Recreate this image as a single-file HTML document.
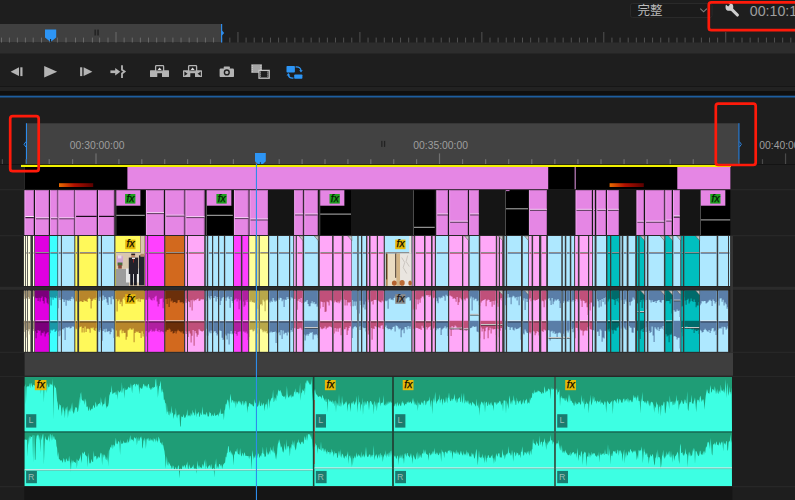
<!DOCTYPE html>
<html><head><meta charset="utf-8"><title>Timeline</title>
<style>
html,body{margin:0;padding:0;background:#1e1e1e;}
body{width:795px;height:500px;overflow:hidden;}
svg{display:block;font-family:"Liberation Sans","Noto Sans CJK TC","Noto Sans CJK SC",sans-serif;}
</style></head><body>
<svg width="795" height="500" viewBox="0 0 795 500" shape-rendering="auto">
<rect x="0.00" y="0.00" width="795.00" height="500.00" fill="#1e1e1e" />
<rect x="0.00" y="24.00" width="221.00" height="18.50" fill="#404040" />
<rect x="0.00" y="42.50" width="795.00" height="11.00" fill="#2d2d2d" />
<rect x="1.00" y="37.60" width="1.00" height="4.90" fill="#6a6a6a" />
<rect x="8.90" y="37.60" width="1.00" height="4.90" fill="#6a6a6a" />
<rect x="16.90" y="37.60" width="1.00" height="4.90" fill="#6a6a6a" />
<rect x="24.90" y="37.60" width="1.00" height="4.90" fill="#6a6a6a" />
<rect x="32.70" y="37.60" width="1.00" height="4.90" fill="#6a6a6a" />
<rect x="41.00" y="37.60" width="1.00" height="4.90" fill="#6a6a6a" />
<rect x="49.30" y="37.60" width="1.00" height="4.90" fill="#6a6a6a" />
<rect x="56.90" y="37.60" width="1.00" height="4.90" fill="#6a6a6a" />
<rect x="65.50" y="37.60" width="1.00" height="4.90" fill="#6a6a6a" />
<rect x="75.00" y="37.60" width="1.00" height="4.90" fill="#6a6a6a" />
<rect x="83.00" y="37.60" width="1.00" height="4.90" fill="#6a6a6a" />
<rect x="91.90" y="37.60" width="1.00" height="4.90" fill="#6a6a6a" />
<rect x="99.10" y="37.60" width="1.00" height="4.90" fill="#6a6a6a" />
<rect x="107.50" y="37.60" width="1.00" height="4.90" fill="#6a6a6a" />
<rect x="115.50" y="32.00" width="1.00" height="10.50" fill="#6a6a6a" />
<rect x="123.63" y="37.60" width="1.00" height="4.90" fill="#6a6a6a" />
<rect x="131.76" y="37.60" width="1.00" height="4.90" fill="#6a6a6a" />
<rect x="139.89" y="37.60" width="1.00" height="4.90" fill="#6a6a6a" />
<rect x="148.02" y="37.60" width="1.00" height="4.90" fill="#6a6a6a" />
<rect x="156.15" y="37.60" width="1.00" height="4.90" fill="#6a6a6a" />
<rect x="164.28" y="37.60" width="1.00" height="4.90" fill="#6a6a6a" />
<rect x="172.41" y="37.60" width="1.00" height="4.90" fill="#6a6a6a" />
<rect x="180.54" y="37.60" width="1.00" height="4.90" fill="#6a6a6a" />
<rect x="188.67" y="37.60" width="1.00" height="4.90" fill="#6a6a6a" />
<rect x="196.80" y="37.60" width="1.00" height="4.90" fill="#6a6a6a" />
<rect x="204.93" y="37.60" width="1.00" height="4.90" fill="#6a6a6a" />
<rect x="213.06" y="37.60" width="1.00" height="4.90" fill="#6a6a6a" />
<rect x="221.19" y="37.60" width="1.00" height="4.90" fill="#525252" />
<rect x="229.32" y="37.60" width="1.00" height="4.90" fill="#525252" />
<rect x="237.45" y="32.00" width="1.00" height="10.50" fill="#525252" />
<rect x="245.58" y="37.60" width="1.00" height="4.90" fill="#525252" />
<rect x="253.71" y="37.60" width="1.00" height="4.90" fill="#525252" />
<rect x="261.84" y="37.60" width="1.00" height="4.90" fill="#525252" />
<rect x="269.97" y="37.60" width="1.00" height="4.90" fill="#525252" />
<rect x="278.10" y="37.60" width="1.00" height="4.90" fill="#525252" />
<rect x="286.23" y="37.60" width="1.00" height="4.90" fill="#525252" />
<rect x="294.36" y="37.60" width="1.00" height="4.90" fill="#525252" />
<rect x="302.49" y="37.60" width="1.00" height="4.90" fill="#525252" />
<rect x="310.62" y="37.60" width="1.00" height="4.90" fill="#525252" />
<rect x="318.75" y="37.60" width="1.00" height="4.90" fill="#525252" />
<rect x="326.88" y="37.60" width="1.00" height="4.90" fill="#525252" />
<rect x="335.01" y="37.60" width="1.00" height="4.90" fill="#525252" />
<rect x="343.14" y="37.60" width="1.00" height="4.90" fill="#525252" />
<rect x="351.27" y="37.60" width="1.00" height="4.90" fill="#525252" />
<rect x="359.40" y="32.00" width="1.00" height="10.50" fill="#525252" />
<rect x="367.53" y="37.60" width="1.00" height="4.90" fill="#525252" />
<rect x="375.66" y="37.60" width="1.00" height="4.90" fill="#525252" />
<rect x="383.79" y="37.60" width="1.00" height="4.90" fill="#525252" />
<rect x="391.92" y="37.60" width="1.00" height="4.90" fill="#525252" />
<rect x="400.05" y="37.60" width="1.00" height="4.90" fill="#525252" />
<rect x="408.18" y="37.60" width="1.00" height="4.90" fill="#525252" />
<rect x="416.31" y="37.60" width="1.00" height="4.90" fill="#525252" />
<rect x="424.44" y="37.60" width="1.00" height="4.90" fill="#525252" />
<rect x="432.57" y="37.60" width="1.00" height="4.90" fill="#525252" />
<rect x="440.70" y="37.60" width="1.00" height="4.90" fill="#525252" />
<rect x="448.83" y="37.60" width="1.00" height="4.90" fill="#525252" />
<rect x="456.96" y="37.60" width="1.00" height="4.90" fill="#525252" />
<rect x="465.09" y="37.60" width="1.00" height="4.90" fill="#525252" />
<rect x="473.22" y="37.60" width="1.00" height="4.90" fill="#525252" />
<rect x="481.35" y="32.00" width="1.00" height="10.50" fill="#525252" />
<rect x="489.48" y="37.60" width="1.00" height="4.90" fill="#525252" />
<rect x="497.61" y="37.60" width="1.00" height="4.90" fill="#525252" />
<rect x="505.74" y="37.60" width="1.00" height="4.90" fill="#525252" />
<rect x="513.87" y="37.60" width="1.00" height="4.90" fill="#525252" />
<rect x="522.00" y="37.60" width="1.00" height="4.90" fill="#525252" />
<rect x="530.13" y="37.60" width="1.00" height="4.90" fill="#525252" />
<rect x="538.26" y="37.60" width="1.00" height="4.90" fill="#525252" />
<rect x="546.39" y="37.60" width="1.00" height="4.90" fill="#525252" />
<rect x="554.52" y="37.60" width="1.00" height="4.90" fill="#525252" />
<rect x="562.65" y="37.60" width="1.00" height="4.90" fill="#525252" />
<rect x="570.78" y="37.60" width="1.00" height="4.90" fill="#525252" />
<rect x="578.91" y="37.60" width="1.00" height="4.90" fill="#525252" />
<rect x="587.04" y="37.60" width="1.00" height="4.90" fill="#525252" />
<rect x="595.17" y="37.60" width="1.00" height="4.90" fill="#525252" />
<rect x="603.30" y="32.00" width="1.00" height="10.50" fill="#525252" />
<rect x="611.43" y="37.60" width="1.00" height="4.90" fill="#525252" />
<rect x="619.56" y="37.60" width="1.00" height="4.90" fill="#525252" />
<rect x="627.69" y="37.60" width="1.00" height="4.90" fill="#525252" />
<rect x="635.82" y="37.60" width="1.00" height="4.90" fill="#525252" />
<rect x="643.95" y="37.60" width="1.00" height="4.90" fill="#525252" />
<rect x="652.08" y="37.60" width="1.00" height="4.90" fill="#525252" />
<rect x="660.21" y="37.60" width="1.00" height="4.90" fill="#525252" />
<rect x="668.34" y="37.60" width="1.00" height="4.90" fill="#525252" />
<rect x="676.47" y="37.60" width="1.00" height="4.90" fill="#525252" />
<rect x="684.60" y="37.60" width="1.00" height="4.90" fill="#525252" />
<rect x="692.73" y="37.60" width="1.00" height="4.90" fill="#525252" />
<rect x="700.86" y="37.60" width="1.00" height="4.90" fill="#525252" />
<rect x="708.99" y="37.60" width="1.00" height="4.90" fill="#525252" />
<rect x="717.12" y="37.60" width="1.00" height="4.90" fill="#525252" />
<rect x="725.25" y="32.00" width="1.00" height="10.50" fill="#525252" />
<rect x="733.38" y="37.60" width="1.00" height="4.90" fill="#525252" />
<rect x="741.51" y="37.60" width="1.00" height="4.90" fill="#525252" />
<rect x="749.64" y="37.60" width="1.00" height="4.90" fill="#525252" />
<rect x="757.77" y="37.60" width="1.00" height="4.90" fill="#525252" />
<rect x="765.90" y="37.60" width="1.00" height="4.90" fill="#525252" />
<rect x="774.03" y="37.60" width="1.00" height="4.90" fill="#525252" />
<rect x="782.16" y="37.60" width="1.00" height="4.90" fill="#525252" />
<rect x="790.29" y="37.60" width="1.00" height="4.90" fill="#525252" />
<rect x="221.00" y="24.00" width="1.20" height="18.50" fill="#2d8ceb" />
<polygon points="222.0,30.5 224.2,33.0 222.0,35.5" fill="#2d8ceb" />
<polygon points="45.0,29.6 56.2,29.6 56.2,37.6 50.6,42.0 45.0,37.6" fill="#2d95f5" />
<rect x="50.10" y="39.00" width="1.00" height="3.00" fill="#1a1a1a" />
<rect x="94.40" y="29.60" width="1.70" height="5.90" fill="#242424" />
<rect x="97.20" y="29.60" width="1.70" height="5.90" fill="#242424" />
<rect x="630.50" y="3.50" width="81.50" height="14.00" fill="#1b1b1b" stroke="#2a2a2a" stroke-width="1" rx="2"/>
<text x="637.50" y="15.30" font-size="12.5" fill="#bcbcbc" >完整</text>
<polyline points="700.3,8.6 703.6,11.8 706.9,8.6" fill="none" stroke="#808080" stroke-width="1.1"/>
<line x1="731" y1="8.6" x2="737.4" y2="15" stroke="#cfcfcf" stroke-width="3.1" stroke-linecap="round"/>
<circle cx="729.4" cy="6.9" r="3.9" fill="#cfcfcf"/>
<rect x="723" y="3.9" width="5.6" height="2.7" fill="#1e1e1e" transform="rotate(42 728.6 5.9)"/>
<text x="749.80" y="15.60" font-size="14.2" fill="#9e9e9e" >00:10:10:15</text>
<polygon points="10.6,71.7 19.0,67.3 19.0,76.1" fill="#b4b4b4" />
<rect x="20.30" y="67.30" width="2.20" height="8.80" fill="#b4b4b4" />
<polygon points="44.2,66.0 57.2,71.8 44.2,77.5" fill="#b4b4b4" />
<rect x="80.10" y="67.30" width="2.20" height="8.80" fill="#b4b4b4" />
<polygon points="83.6,67.3 92.4,71.7 83.6,76.1" fill="#b4b4b4" />
<rect x="110.40" y="70.40" width="6.00" height="2.70" fill="#b4b4b4" />
<polygon points="115.2,67.9 120.3,71.7 115.2,75.6" fill="#b4b4b4" />
<path d="M122 65.3 L122 69.7 L124.6 71.6 L122 73.5 L122 77.9" fill="none" stroke="#b4b4b4" stroke-width="1.8" stroke-linejoin="miter"/>
<rect x="150.00" y="70.30" width="7.30" height="6.70" fill="#b4b4b4" rx="0.6"/>
<rect x="162.00" y="70.30" width="7.00" height="6.70" fill="#b4b4b4" rx="0.6"/>
<rect x="156.00" y="71.00" width="7.00" height="2.20" fill="#b4b4b4" />
<rect x="155.60" y="65.60" width="8.00" height="5.60" fill="#1e1e1e" stroke="#b4b4b4" stroke-width="1.3" rx="0.8"/>
<polygon points="159.6,67.6 161.6,69.9 157.6,69.9" fill="#e0e0e0" />
<rect x="183.00" y="70.30" width="7.30" height="6.70" fill="#b4b4b4" rx="0.6"/>
<rect x="195.00" y="70.30" width="7.00" height="6.70" fill="#b4b4b4" rx="0.6"/>
<rect x="189.00" y="71.00" width="7.00" height="2.20" fill="#b4b4b4" />
<rect x="188.60" y="65.60" width="8.00" height="5.60" fill="#1e1e1e" stroke="#b4b4b4" stroke-width="1.3" rx="0.8"/>
<polygon points="192.6,67.6 194.6,69.9 190.6,69.9" fill="#e0e0e0" />
<polygon points="184.4,71.4 187.6,73.7 184.4,76.0" fill="#1e1e1e" />
<polygon points="200.8,71.4 197.6,73.7 200.8,76.0" fill="#1e1e1e" />
<rect x="219.60" y="68.50" width="14.40" height="8.60" fill="#b4b4b4" rx="1.2"/>
<rect x="223.70" y="66.50" width="6.20" height="2.40" fill="#b4b4b4" rx="0.6"/>
<circle cx="226.8" cy="72.4" r="2.4" fill="none" stroke="#1e1e1e" stroke-width="1.4"/>
<rect x="251.30" y="64.30" width="10.60" height="8.60" fill="#a6a6a6" />
<rect x="251.80" y="65.20" width="1.00" height="1.00" fill="#d8d8d8" />
<rect x="260.40" y="65.20" width="1.00" height="1.00" fill="#d8d8d8" />
<rect x="251.80" y="67.20" width="1.00" height="1.00" fill="#d8d8d8" />
<rect x="260.40" y="67.20" width="1.00" height="1.00" fill="#d8d8d8" />
<rect x="251.80" y="69.20" width="1.00" height="1.00" fill="#d8d8d8" />
<rect x="260.40" y="69.20" width="1.00" height="1.00" fill="#d8d8d8" />
<rect x="251.80" y="71.20" width="1.00" height="1.00" fill="#d8d8d8" />
<rect x="260.40" y="71.20" width="1.00" height="1.00" fill="#d8d8d8" />
<rect x="259.00" y="70.40" width="10.20" height="7.80" fill="#1e1e1e" stroke="#c4c4c4" stroke-width="1.3"/>
<rect x="260.00" y="71.60" width="1.00" height="1.00" fill="#c4c4c4" />
<rect x="267.20" y="71.60" width="1.00" height="1.00" fill="#c4c4c4" />
<rect x="260.00" y="73.60" width="1.00" height="1.00" fill="#c4c4c4" />
<rect x="267.20" y="73.60" width="1.00" height="1.00" fill="#c4c4c4" />
<rect x="260.00" y="75.60" width="1.00" height="1.00" fill="#c4c4c4" />
<rect x="267.20" y="75.60" width="1.00" height="1.00" fill="#c4c4c4" />
<rect x="286.50" y="66.00" width="8.40" height="6.50" fill="#2d95f5" rx="0.8"/>
<rect x="294.20" y="74.40" width="8.20" height="4.40" fill="#2d95f5" rx="0.8"/>
<path d="M295.6 67 Q300.8 66.6 301 71" fill="none" stroke="#2d95f5" stroke-width="1.3"/>
<polygon points="299.2,70.2 302.8,70.2 301.0,72.6" fill="#2d95f5" />
<path d="M293.4 78 Q288.6 78.4 288.4 74.6" fill="none" stroke="#2d95f5" stroke-width="1.3"/>
<polygon points="286.6,75.4 290.2,75.4 288.4,73.0" fill="#2d95f5" />
<rect x="0.00" y="86.00" width="795.00" height="1.00" fill="#161616" />
<rect x="0.00" y="87.00" width="795.00" height="4.00" fill="#222222" />
<rect x="0.00" y="91.00" width="795.00" height="4.70" fill="#0f0f0f" />
<rect x="0.00" y="95.70" width="795.00" height="1.80" fill="#1d5ea0" />
<rect x="27.00" y="123.30" width="711.40" height="40.90" fill="#424242" />
<rect x="25.90" y="123.20" width="1.10" height="40.60" fill="#2d8ceb" />
<polyline points="26,141.6 24,144.3 26,147" fill="none" stroke="#2d8ceb" stroke-width="1"/>
<rect x="738.30" y="123.20" width="1.20" height="40.60" fill="#2d7fd6" />
<polyline points="739.4,141.6 741.4,144.3 739.4,147" fill="none" stroke="#2d7fd6" stroke-width="1"/>
<rect x="1.80" y="159.20" width="1.20" height="4.80" fill="#4a4a4a" />
<rect x="25.20" y="159.20" width="1.20" height="4.80" fill="#4a4a4a" />
<rect x="48.60" y="159.20" width="1.20" height="4.80" fill="#707070" />
<rect x="72.00" y="159.20" width="1.20" height="4.80" fill="#707070" />
<rect x="95.40" y="153.40" width="1.20" height="10.60" fill="#707070" />
<rect x="118.30" y="159.20" width="1.20" height="4.80" fill="#707070" />
<rect x="141.20" y="159.20" width="1.20" height="4.80" fill="#707070" />
<rect x="164.10" y="159.20" width="1.20" height="4.80" fill="#707070" />
<rect x="187.00" y="159.20" width="1.20" height="4.80" fill="#707070" />
<rect x="209.90" y="159.20" width="1.20" height="4.80" fill="#707070" />
<rect x="232.80" y="159.20" width="1.20" height="4.80" fill="#707070" />
<rect x="255.70" y="159.20" width="1.20" height="4.80" fill="#707070" />
<rect x="278.60" y="159.20" width="1.20" height="4.80" fill="#707070" />
<rect x="301.50" y="159.20" width="1.20" height="4.80" fill="#707070" />
<rect x="324.40" y="159.20" width="1.20" height="4.80" fill="#707070" />
<rect x="347.30" y="159.20" width="1.20" height="4.80" fill="#707070" />
<rect x="370.20" y="159.20" width="1.20" height="4.80" fill="#707070" />
<rect x="393.10" y="159.20" width="1.20" height="4.80" fill="#707070" />
<rect x="416.00" y="159.20" width="1.20" height="4.80" fill="#707070" />
<rect x="438.90" y="153.40" width="1.20" height="10.60" fill="#707070" />
<rect x="461.97" y="159.20" width="1.20" height="4.80" fill="#707070" />
<rect x="485.04" y="159.20" width="1.20" height="4.80" fill="#707070" />
<rect x="508.11" y="159.20" width="1.20" height="4.80" fill="#707070" />
<rect x="531.18" y="159.20" width="1.20" height="4.80" fill="#707070" />
<rect x="554.25" y="159.20" width="1.20" height="4.80" fill="#707070" />
<rect x="577.32" y="159.20" width="1.20" height="4.80" fill="#707070" />
<rect x="600.39" y="159.20" width="1.20" height="4.80" fill="#707070" />
<rect x="623.46" y="159.20" width="1.20" height="4.80" fill="#707070" />
<rect x="646.53" y="159.20" width="1.20" height="4.80" fill="#707070" />
<rect x="669.60" y="159.20" width="1.20" height="4.80" fill="#707070" />
<rect x="692.67" y="159.20" width="1.20" height="4.80" fill="#707070" />
<rect x="715.74" y="159.20" width="1.20" height="4.80" fill="#707070" />
<rect x="738.81" y="159.20" width="1.20" height="4.80" fill="#4a4a4a" />
<rect x="761.88" y="159.20" width="1.20" height="4.80" fill="#4a4a4a" />
<rect x="784.95" y="153.40" width="1.20" height="10.60" fill="#4a4a4a" />
<text x="69.80" y="149.10" font-size="10.35" fill="#9e9e9e" >00:30:00:00</text>
<text x="413.30" y="149.10" font-size="10.35" fill="#9e9e9e" >00:35:00:00</text>
<text x="759.35" y="149.10" font-size="10.35" fill="#9e9e9e" >00:40:00:00</text>
<rect x="381.20" y="140.90" width="1.30" height="6.00" fill="#222222" />
<rect x="383.90" y="140.90" width="1.30" height="6.00" fill="#222222" />
<rect x="0.00" y="164.00" width="795.00" height="1.00" fill="#141414" />
<rect x="0.00" y="189.30" width="795.00" height="0.90" fill="#2b2b2b" />
<rect x="0.00" y="235.30" width="795.00" height="0.90" fill="#2b2b2b" />
<rect x="0.00" y="351.80" width="795.00" height="0.90" fill="#2b2b2b" />
<rect x="0.00" y="376.20" width="795.00" height="0.90" fill="#2b2b2b" />
<rect x="0.00" y="486.30" width="795.00" height="0.90" fill="#2b2b2b" />
<rect x="0.00" y="285.80" width="795.00" height="4.80" fill="#2b2b2b" />
<rect x="0.00" y="285.80" width="795.00" height="0.80" fill="#1a1a1a" />
<rect x="0.00" y="289.90" width="795.00" height="0.80" fill="#1a1a1a" />
<rect x="24.20" y="165.00" width="0.70" height="24.00" fill="#555555" />
<rect x="21.00" y="164.90" width="710.00" height="2.10" fill="#f2f200" />
<rect x="24.60" y="167.00" width="705.80" height="22.30" fill="#000000" />
<rect x="127.40" y="167.00" width="420.80" height="22.30" fill="#e586e4" />
<rect x="574.60" y="167.00" width="1.20" height="22.30" fill="#c080c0" />
<rect x="677.30" y="167.00" width="53.10" height="22.30" fill="#e586e4" />
<defs><filter id="bl" x="0" y="0" width="100%" height="100%"><feGaussianBlur stdDeviation="0.45"/></filter><linearGradient id="gr" x1="0" x2="1"><stop offset="0" stop-color="#e86a00"/><stop offset="0.45" stop-color="#b01000"/><stop offset="1" stop-color="#5a0000"/></linearGradient></defs>
<rect x="59.00" y="183.20" width="34.20" height="3.80" fill="url(#gr)" />
<rect x="609.60" y="183.20" width="34.20" height="3.80" fill="url(#gr)" />
<rect x="24.60" y="189.80" width="705.80" height="46.00" fill="#151515" />
<rect x="24.60" y="190.20" width="9.20" height="44.80" fill="#e586e4" />
<rect x="24.60" y="190.20" width="0.80" height="44.80" fill="#f0a8ef" />
<rect x="33.10" y="190.20" width="0.70" height="44.80" fill="#b568b4" />
<rect x="25.40" y="216.20" width="8.40" height="1.00" fill="#ffffff" />
<rect x="25.40" y="217.20" width="8.40" height="1.00" fill="#100010" />
<rect x="35.10" y="190.20" width="13.80" height="44.80" fill="#e586e4" />
<rect x="35.10" y="190.20" width="0.80" height="44.80" fill="#f0a8ef" />
<rect x="48.20" y="190.20" width="0.70" height="44.80" fill="#b568b4" />
<rect x="35.90" y="217.20" width="13.00" height="1.10" fill="#f2c8f2" />
<rect x="35.90" y="218.30" width="13.00" height="1.00" fill="#5e3e5e" />
<rect x="50.20" y="190.20" width="7.20" height="44.80" fill="#e586e4" />
<rect x="50.20" y="190.20" width="0.80" height="44.80" fill="#f0a8ef" />
<rect x="56.70" y="190.20" width="0.70" height="44.80" fill="#b568b4" />
<rect x="51.00" y="217.20" width="6.40" height="1.10" fill="#f2c8f2" />
<rect x="51.00" y="218.30" width="6.40" height="1.00" fill="#5e3e5e" />
<rect x="58.40" y="190.20" width="15.90" height="44.80" fill="#e586e4" />
<rect x="58.40" y="190.20" width="0.80" height="44.80" fill="#f0a8ef" />
<rect x="73.60" y="190.20" width="0.70" height="44.80" fill="#b568b4" />
<rect x="59.20" y="217.20" width="15.10" height="1.10" fill="#f2c8f2" />
<rect x="59.20" y="218.30" width="15.10" height="1.00" fill="#5e3e5e" />
<rect x="75.30" y="190.20" width="21.40" height="44.80" fill="#e586e4" />
<rect x="75.30" y="190.20" width="0.80" height="44.80" fill="#f0a8ef" />
<rect x="96.00" y="190.20" width="0.70" height="44.80" fill="#b568b4" />
<rect x="76.10" y="215.80" width="20.60" height="1.20" fill="#1a0a1a" />
<rect x="98.20" y="190.20" width="16.00" height="44.80" fill="#e586e4" />
<rect x="98.20" y="190.20" width="0.80" height="44.80" fill="#f0a8ef" />
<rect x="113.50" y="190.20" width="0.70" height="44.80" fill="#b568b4" />
<rect x="99.00" y="215.80" width="15.20" height="1.20" fill="#1a0a1a" />
<rect x="146.00" y="190.20" width="18.00" height="44.80" fill="#e586e4" />
<rect x="146.00" y="190.20" width="0.80" height="44.80" fill="#f0a8ef" />
<rect x="163.30" y="190.20" width="0.70" height="44.80" fill="#b568b4" />
<rect x="146.80" y="212.00" width="17.20" height="1.10" fill="#f2c8f2" />
<rect x="146.80" y="213.10" width="17.20" height="1.00" fill="#5e3e5e" />
<rect x="165.40" y="190.20" width="18.90" height="44.80" fill="#e586e4" />
<rect x="165.40" y="190.20" width="0.80" height="44.80" fill="#f0a8ef" />
<rect x="183.60" y="190.20" width="0.70" height="44.80" fill="#b568b4" />
<rect x="166.20" y="214.60" width="18.10" height="1.10" fill="#f2c8f2" />
<rect x="166.20" y="215.70" width="18.10" height="1.00" fill="#5e3e5e" />
<rect x="185.50" y="190.20" width="18.90" height="44.80" fill="#e586e4" />
<rect x="185.50" y="190.20" width="0.80" height="44.80" fill="#f0a8ef" />
<rect x="203.70" y="190.20" width="0.70" height="44.80" fill="#b568b4" />
<rect x="186.30" y="216.00" width="18.10" height="1.10" fill="#f2c8f2" />
<rect x="186.30" y="217.10" width="18.10" height="1.00" fill="#5e3e5e" />
<rect x="234.00" y="190.20" width="14.40" height="44.80" fill="#e586e4" />
<rect x="234.00" y="190.20" width="0.80" height="44.80" fill="#f0a8ef" />
<rect x="247.70" y="190.20" width="0.70" height="44.80" fill="#b568b4" />
<rect x="234.80" y="217.00" width="13.60" height="1.10" fill="#f2c8f2" />
<rect x="234.80" y="218.10" width="13.60" height="1.00" fill="#5e3e5e" />
<rect x="249.70" y="190.20" width="18.30" height="44.80" fill="#e586e4" />
<rect x="249.70" y="190.20" width="0.80" height="44.80" fill="#f0a8ef" />
<rect x="267.30" y="190.20" width="0.70" height="44.80" fill="#b568b4" />
<rect x="250.50" y="218.40" width="17.50" height="1.10" fill="#f2c8f2" />
<rect x="250.50" y="219.50" width="17.50" height="1.00" fill="#5e3e5e" />
<rect x="294.30" y="190.20" width="8.80" height="44.80" fill="#e586e4" />
<rect x="294.30" y="190.20" width="0.80" height="44.80" fill="#f0a8ef" />
<rect x="302.40" y="190.20" width="0.70" height="44.80" fill="#b568b4" />
<rect x="295.10" y="213.40" width="8.00" height="1.10" fill="#f2c8f2" />
<rect x="295.10" y="214.50" width="8.00" height="1.00" fill="#5e3e5e" />
<rect x="304.40" y="190.20" width="13.30" height="44.80" fill="#e586e4" />
<rect x="304.40" y="190.20" width="0.80" height="44.80" fill="#f0a8ef" />
<rect x="317.00" y="190.20" width="0.70" height="44.80" fill="#b568b4" />
<rect x="305.20" y="213.40" width="12.50" height="1.10" fill="#f2c8f2" />
<rect x="305.20" y="214.50" width="12.50" height="1.00" fill="#5e3e5e" />
<rect x="436.50" y="190.20" width="11.50" height="44.80" fill="#e586e4" />
<rect x="436.50" y="190.20" width="0.80" height="44.80" fill="#f0a8ef" />
<rect x="447.30" y="190.20" width="0.70" height="44.80" fill="#b568b4" />
<rect x="437.30" y="213.40" width="10.70" height="1.10" fill="#f2c8f2" />
<rect x="437.30" y="214.50" width="10.70" height="1.00" fill="#5e3e5e" />
<rect x="449.30" y="190.20" width="18.70" height="44.80" fill="#e586e4" />
<rect x="449.30" y="190.20" width="0.80" height="44.80" fill="#f0a8ef" />
<rect x="467.30" y="190.20" width="0.70" height="44.80" fill="#b568b4" />
<rect x="450.10" y="220.70" width="17.90" height="1.10" fill="#f2c8f2" />
<rect x="450.10" y="221.80" width="17.90" height="1.00" fill="#5e3e5e" />
<rect x="469.30" y="190.20" width="9.60" height="44.80" fill="#e586e4" />
<rect x="469.30" y="190.20" width="0.80" height="44.80" fill="#f0a8ef" />
<rect x="478.20" y="190.20" width="0.70" height="44.80" fill="#b568b4" />
<rect x="470.10" y="213.40" width="8.80" height="1.10" fill="#f2c8f2" />
<rect x="470.10" y="214.50" width="8.80" height="1.00" fill="#5e3e5e" />
<rect x="529.20" y="190.20" width="17.60" height="44.80" fill="#e586e4" />
<rect x="529.20" y="190.20" width="0.80" height="44.80" fill="#f0a8ef" />
<rect x="546.10" y="190.20" width="0.70" height="44.80" fill="#b568b4" />
<rect x="530.00" y="208.80" width="16.80" height="1.10" fill="#f2c8f2" />
<rect x="530.00" y="209.90" width="16.80" height="1.00" fill="#5e3e5e" />
<rect x="575.70" y="190.20" width="16.30" height="44.80" fill="#e586e4" />
<rect x="575.70" y="190.20" width="0.80" height="44.80" fill="#f0a8ef" />
<rect x="591.30" y="190.20" width="0.70" height="44.80" fill="#b568b4" />
<rect x="576.50" y="208.80" width="15.50" height="1.10" fill="#f2c8f2" />
<rect x="576.50" y="209.90" width="15.50" height="1.00" fill="#5e3e5e" />
<rect x="593.30" y="190.20" width="1.70" height="44.80" fill="#e586e4" />
<rect x="593.30" y="190.20" width="0.80" height="44.80" fill="#f0a8ef" />
<rect x="594.30" y="190.20" width="0.70" height="44.80" fill="#b568b4" />
<rect x="594.10" y="208.80" width="0.90" height="1.10" fill="#f2c8f2" />
<rect x="594.10" y="209.90" width="0.90" height="1.00" fill="#5e3e5e" />
<rect x="596.50" y="190.20" width="9.30" height="44.80" fill="#e586e4" />
<rect x="596.50" y="190.20" width="0.80" height="44.80" fill="#f0a8ef" />
<rect x="605.10" y="190.20" width="0.70" height="44.80" fill="#b568b4" />
<rect x="597.30" y="208.80" width="8.50" height="1.10" fill="#f2c8f2" />
<rect x="597.30" y="209.90" width="8.50" height="1.00" fill="#5e3e5e" />
<rect x="607.10" y="190.20" width="11.60" height="44.80" fill="#e586e4" />
<rect x="607.10" y="190.20" width="0.80" height="44.80" fill="#f0a8ef" />
<rect x="618.00" y="190.20" width="0.70" height="44.80" fill="#b568b4" />
<rect x="607.90" y="208.80" width="10.80" height="1.10" fill="#f2c8f2" />
<rect x="607.90" y="209.90" width="10.80" height="1.00" fill="#5e3e5e" />
<rect x="636.60" y="190.20" width="7.20" height="44.80" fill="#e586e4" />
<rect x="636.60" y="190.20" width="0.80" height="44.80" fill="#f0a8ef" />
<rect x="643.10" y="190.20" width="0.70" height="44.80" fill="#b568b4" />
<rect x="637.40" y="220.70" width="6.40" height="1.10" fill="#f2c8f2" />
<rect x="637.40" y="221.80" width="6.40" height="1.00" fill="#5e3e5e" />
<rect x="645.30" y="190.20" width="18.90" height="44.80" fill="#e586e4" />
<rect x="645.30" y="190.20" width="0.80" height="44.80" fill="#f0a8ef" />
<rect x="663.50" y="190.20" width="0.70" height="44.80" fill="#b568b4" />
<rect x="646.10" y="220.70" width="18.10" height="1.10" fill="#f2c8f2" />
<rect x="646.10" y="221.80" width="18.10" height="1.00" fill="#5e3e5e" />
<rect x="665.40" y="190.20" width="6.30" height="44.80" fill="#e586e4" />
<rect x="665.40" y="190.20" width="0.80" height="44.80" fill="#f0a8ef" />
<rect x="671.00" y="190.20" width="0.70" height="44.80" fill="#b568b4" />
<rect x="666.20" y="219.50" width="5.50" height="1.10" fill="#f2c8f2" />
<rect x="666.20" y="220.60" width="5.50" height="1.00" fill="#5e3e5e" />
<rect x="673.00" y="190.20" width="6.80" height="44.80" fill="#e586e4" />
<rect x="673.00" y="190.20" width="0.80" height="44.80" fill="#f0a8ef" />
<rect x="679.10" y="190.20" width="0.70" height="44.80" fill="#b568b4" />
<rect x="673.80" y="215.60" width="6.00" height="1.00" fill="#ffffff" />
<rect x="673.80" y="216.60" width="6.00" height="1.00" fill="#100010" />
<rect x="115.60" y="190.20" width="29.20" height="44.80" fill="#000000" />
<rect x="115.60" y="190.20" width="0.70" height="44.80" fill="#6a6a6a" />
<rect x="116.30" y="190.20" width="23.90" height="15.50" fill="#e586e4" />
<rect x="140.20" y="190.20" width="0.80" height="15.50" fill="#5a3a5a" />
<rect x="125.10" y="194.00" width="10.30" height="9.60" fill="#1fa01f" />
<text x="130.45" y="201.80" font-size="10.4" fill="#041804" font-style="italic" text-anchor="middle" stroke="#041804" stroke-width="0.25">fx</text>
<rect x="116.30" y="214.80" width="28.50" height="1.00" fill="#b4b4b4" />
<rect x="206.20" y="190.20" width="26.60" height="44.80" fill="#000000" />
<rect x="206.20" y="190.20" width="0.70" height="44.80" fill="#6a6a6a" />
<rect x="206.90" y="190.20" width="24.40" height="15.50" fill="#e586e4" />
<rect x="231.30" y="190.20" width="0.80" height="15.50" fill="#5a3a5a" />
<rect x="216.40" y="194.00" width="10.30" height="9.60" fill="#1fa01f" />
<text x="221.75" y="201.80" font-size="10.4" fill="#041804" font-style="italic" text-anchor="middle" stroke="#041804" stroke-width="0.25">fx</text>
<rect x="206.90" y="214.80" width="25.90" height="1.00" fill="#b4b4b4" />
<rect x="319.50" y="190.20" width="31.50" height="44.80" fill="#000000" />
<rect x="319.50" y="190.20" width="0.70" height="44.80" fill="#6a6a6a" />
<rect x="320.20" y="190.20" width="24.00" height="15.50" fill="#e586e4" />
<rect x="344.20" y="190.20" width="0.80" height="15.50" fill="#5a3a5a" />
<rect x="329.50" y="194.00" width="10.30" height="9.60" fill="#1fa01f" />
<text x="334.85" y="201.80" font-size="10.4" fill="#041804" font-style="italic" text-anchor="middle" stroke="#041804" stroke-width="0.25">fx</text>
<rect x="320.20" y="213.60" width="30.80" height="1.00" fill="#b4b4b4" />
<rect x="413.30" y="190.20" width="21.40" height="44.80" fill="#000000" />
<rect x="413.30" y="190.20" width="0.70" height="44.80" fill="#6a6a6a" />
<rect x="414.00" y="226.80" width="20.70" height="1.00" fill="#b4b4b4" />
<rect x="505.30" y="190.20" width="22.70" height="44.80" fill="#000000" />
<rect x="505.30" y="190.20" width="0.70" height="44.80" fill="#6a6a6a" />
<rect x="506.00" y="208.30" width="22.00" height="1.00" fill="#b4b4b4" />
<rect x="506.00" y="190.20" width="3.50" height="0.90" fill="#e586e4" />
<rect x="700.20" y="190.20" width="30.00" height="44.80" fill="#000000" />
<rect x="700.20" y="190.20" width="0.70" height="44.80" fill="#6a6a6a" />
<rect x="700.90" y="190.20" width="24.10" height="15.50" fill="#e586e4" />
<rect x="725.00" y="190.20" width="0.80" height="15.50" fill="#5a3a5a" />
<rect x="710.20" y="194.00" width="10.30" height="9.60" fill="#1fa01f" />
<text x="715.55" y="201.80" font-size="10.4" fill="#041804" font-style="italic" text-anchor="middle" stroke="#041804" stroke-width="0.25">fx</text>
<rect x="700.90" y="219.40" width="29.30" height="1.00" fill="#b4b4b4" />
<rect x="24.60" y="235.50" width="705.80" height="50.50" fill="#3a3a3a" />
<rect x="23.90" y="236.00" width="1.10" height="50.00" fill="#fffee0" />
<rect x="25.80" y="236.00" width="1.40" height="50.00" fill="#fffee0" />
<rect x="26.40" y="252.00" width="0.80" height="1.20" fill="#8f8f8f" />
<rect x="26.40" y="253.10" width="0.80" height="0.80" fill="#a09070" />
<rect x="28.00" y="236.00" width="2.40" height="50.00" fill="#fffee0" />
<rect x="28.60" y="252.00" width="1.80" height="1.20" fill="#8f8f8f" />
<rect x="28.60" y="253.10" width="1.80" height="0.80" fill="#a09070" />
<rect x="33.00" y="236.00" width="1.20" height="50.00" fill="#fffee0" />
<rect x="33.60" y="252.00" width="0.60" height="1.20" fill="#8f8f8f" />
<rect x="33.60" y="253.10" width="0.60" height="0.80" fill="#a09070" />
<rect x="34.90" y="236.00" width="14.00" height="50.00" fill="#e000e0" />
<rect x="35.50" y="252.00" width="13.40" height="1.20" fill="#8f8f8f" />
<rect x="35.50" y="253.10" width="13.40" height="0.80" fill="#7a007a" />
<rect x="49.80" y="236.00" width="7.60" height="50.00" fill="#3cffff" />
<rect x="50.40" y="252.00" width="7.00" height="1.20" fill="#8f8f8f" />
<rect x="50.40" y="253.10" width="7.00" height="0.80" fill="#1a98a8" />
<rect x="58.10" y="236.00" width="2.80" height="50.00" fill="#aee8ff" />
<rect x="58.70" y="252.00" width="2.20" height="1.20" fill="#8f8f8f" />
<rect x="58.70" y="253.10" width="2.20" height="0.80" fill="#5a7ea8" />
<rect x="61.90" y="236.00" width="12.40" height="50.00" fill="#aee8ff" />
<rect x="62.50" y="252.00" width="11.80" height="1.20" fill="#8f8f8f" />
<rect x="62.50" y="253.10" width="11.80" height="0.80" fill="#5a7ea8" />
<rect x="75.30" y="236.00" width="2.00" height="50.00" fill="#fff95a" />
<rect x="75.90" y="252.00" width="1.40" height="1.20" fill="#8f8f8f" />
<rect x="75.90" y="253.10" width="1.40" height="0.80" fill="#b8862b" />
<rect x="79.10" y="236.00" width="17.60" height="50.00" fill="#fff95a" />
<rect x="79.70" y="252.00" width="17.00" height="1.20" fill="#8f8f8f" />
<rect x="79.70" y="253.10" width="17.00" height="0.80" fill="#b8862b" />
<rect x="98.20" y="236.00" width="2.70" height="50.00" fill="#aee8ff" />
<rect x="98.80" y="252.00" width="2.10" height="1.20" fill="#8f8f8f" />
<rect x="98.80" y="253.10" width="2.10" height="0.80" fill="#5a7ea8" />
<rect x="102.00" y="236.00" width="12.20" height="50.00" fill="#aee8ff" />
<rect x="102.60" y="252.00" width="11.60" height="1.20" fill="#8f8f8f" />
<rect x="102.60" y="253.10" width="11.60" height="0.80" fill="#5a7ea8" />
<rect x="115.40" y="236.00" width="29.00" height="50.00" fill="#fff95a" />
<rect x="116.00" y="252.00" width="28.40" height="1.20" fill="#8f8f8f" />
<rect x="116.00" y="253.10" width="28.40" height="0.80" fill="#b8862b" />
<rect x="145.30" y="236.00" width="1.90" height="50.00" fill="#ff40ff" />
<rect x="145.90" y="252.00" width="1.30" height="1.20" fill="#8f8f8f" />
<rect x="145.90" y="253.10" width="1.30" height="0.80" fill="#b020a0" />
<rect x="148.10" y="236.00" width="16.00" height="50.00" fill="#ff40ff" />
<rect x="148.70" y="252.00" width="15.40" height="1.20" fill="#8f8f8f" />
<rect x="148.70" y="253.10" width="15.40" height="0.80" fill="#b020a0" />
<rect x="165.30" y="236.00" width="18.70" height="50.00" fill="#d2691e" />
<rect x="165.90" y="252.00" width="18.10" height="1.20" fill="#8f8f8f" />
<rect x="165.90" y="253.10" width="18.10" height="0.80" fill="#6b2f0a" />
<rect x="185.20" y="236.00" width="1.80" height="50.00" fill="#ffa8f8" />
<rect x="185.80" y="252.00" width="1.20" height="1.20" fill="#8f8f8f" />
<rect x="185.80" y="253.10" width="1.20" height="0.80" fill="#c0507a" />
<rect x="188.00" y="236.00" width="16.20" height="50.00" fill="#ffa8f8" />
<rect x="188.60" y="252.00" width="15.60" height="1.20" fill="#8f8f8f" />
<rect x="188.60" y="253.10" width="15.60" height="0.80" fill="#c0507a" />
<rect x="205.80" y="236.00" width="1.00" height="50.00" fill="#aee8ff" />
<rect x="208.20" y="236.00" width="3.80" height="50.00" fill="#aee8ff" />
<rect x="208.80" y="252.00" width="3.20" height="1.20" fill="#8f8f8f" />
<rect x="208.80" y="253.10" width="3.20" height="0.80" fill="#5a7ea8" />
<rect x="213.20" y="236.00" width="4.80" height="50.00" fill="#aee8ff" />
<rect x="213.80" y="252.00" width="4.20" height="1.20" fill="#8f8f8f" />
<rect x="213.80" y="253.10" width="4.20" height="0.80" fill="#5a7ea8" />
<rect x="219.20" y="236.00" width="4.70" height="50.00" fill="#aee8ff" />
<rect x="219.80" y="252.00" width="4.10" height="1.20" fill="#8f8f8f" />
<rect x="219.80" y="253.10" width="4.10" height="0.80" fill="#5a7ea8" />
<rect x="225.20" y="236.00" width="7.80" height="50.00" fill="#aee8ff" />
<rect x="225.80" y="252.00" width="7.20" height="1.20" fill="#8f8f8f" />
<rect x="225.80" y="253.10" width="7.20" height="0.80" fill="#5a7ea8" />
<rect x="234.00" y="236.00" width="6.90" height="50.00" fill="#ff40ff" />
<rect x="234.60" y="252.00" width="6.30" height="1.20" fill="#8f8f8f" />
<rect x="234.60" y="253.10" width="6.30" height="0.80" fill="#b020a0" />
<rect x="242.40" y="236.00" width="5.80" height="50.00" fill="#ff40ff" />
<rect x="243.00" y="252.00" width="5.20" height="1.20" fill="#8f8f8f" />
<rect x="243.00" y="253.10" width="5.20" height="0.80" fill="#b020a0" />
<rect x="249.20" y="236.00" width="6.40" height="50.00" fill="#ffff99" />
<rect x="249.80" y="252.00" width="5.80" height="1.20" fill="#8f8f8f" />
<rect x="249.80" y="253.10" width="5.80" height="0.80" fill="#b8a84a" />
<rect x="257.20" y="236.00" width="1.40" height="50.00" fill="#ffff99" />
<rect x="257.80" y="252.00" width="0.80" height="1.20" fill="#8f8f8f" />
<rect x="257.80" y="253.10" width="0.80" height="0.80" fill="#b8a84a" />
<rect x="259.70" y="236.00" width="8.30" height="50.00" fill="#ffff99" />
<rect x="260.30" y="252.00" width="7.70" height="1.20" fill="#8f8f8f" />
<rect x="260.30" y="253.10" width="7.70" height="0.80" fill="#b8a84a" />
<rect x="269.20" y="236.00" width="7.80" height="50.00" fill="#aee8ff" />
<rect x="269.80" y="252.00" width="7.20" height="1.20" fill="#8f8f8f" />
<rect x="269.80" y="253.10" width="7.20" height="0.80" fill="#5a7ea8" />
<rect x="278.20" y="236.00" width="10.80" height="50.00" fill="#aee8ff" />
<rect x="278.80" y="252.00" width="10.20" height="1.20" fill="#8f8f8f" />
<rect x="278.80" y="253.10" width="10.20" height="0.80" fill="#5a7ea8" />
<rect x="290.20" y="236.00" width="3.00" height="50.00" fill="#aee8ff" />
<rect x="290.80" y="252.00" width="2.40" height="1.20" fill="#8f8f8f" />
<rect x="290.80" y="253.10" width="2.40" height="0.80" fill="#5a7ea8" />
<rect x="294.10" y="236.00" width="1.60" height="50.00" fill="#ffa8f8" />
<rect x="294.70" y="252.00" width="1.00" height="1.20" fill="#8f8f8f" />
<rect x="294.70" y="253.10" width="1.00" height="0.80" fill="#c0507a" />
<rect x="296.90" y="236.00" width="5.70" height="50.00" fill="#ffa8f8" />
<rect x="297.50" y="252.00" width="5.10" height="1.20" fill="#8f8f8f" />
<rect x="297.50" y="253.10" width="5.10" height="0.80" fill="#c0507a" />
<rect x="304.10" y="236.00" width="13.80" height="50.00" fill="#aee8ff" />
<rect x="304.70" y="252.00" width="13.20" height="1.20" fill="#8f8f8f" />
<rect x="304.70" y="253.10" width="13.20" height="0.80" fill="#5a7ea8" />
<rect x="319.80" y="236.00" width="12.30" height="50.00" fill="#ffa8f8" />
<rect x="320.40" y="252.00" width="11.70" height="1.20" fill="#8f8f8f" />
<rect x="320.40" y="253.10" width="11.70" height="0.80" fill="#c0507a" />
<rect x="333.60" y="236.00" width="8.20" height="50.00" fill="#ffa8f8" />
<rect x="334.20" y="252.00" width="7.60" height="1.20" fill="#8f8f8f" />
<rect x="334.20" y="253.10" width="7.60" height="0.80" fill="#c0507a" />
<rect x="343.50" y="236.00" width="7.90" height="50.00" fill="#ffa8f8" />
<rect x="344.10" y="252.00" width="7.30" height="1.20" fill="#8f8f8f" />
<rect x="344.10" y="253.10" width="7.30" height="0.80" fill="#c0507a" />
<rect x="351.90" y="236.00" width="5.40" height="50.00" fill="#aee8ff" />
<rect x="352.50" y="252.00" width="4.80" height="1.20" fill="#8f8f8f" />
<rect x="352.50" y="253.10" width="4.80" height="0.80" fill="#5a7ea8" />
<rect x="358.60" y="236.00" width="2.40" height="50.00" fill="#aee8ff" />
<rect x="359.20" y="252.00" width="1.80" height="1.20" fill="#8f8f8f" />
<rect x="359.20" y="253.10" width="1.80" height="0.80" fill="#5a7ea8" />
<rect x="362.30" y="236.00" width="3.70" height="50.00" fill="#aee8ff" />
<rect x="362.90" y="252.00" width="3.10" height="1.20" fill="#8f8f8f" />
<rect x="362.90" y="253.10" width="3.10" height="0.80" fill="#5a7ea8" />
<rect x="367.40" y="236.00" width="1.60" height="50.00" fill="#ffa8f8" />
<rect x="368.00" y="252.00" width="1.00" height="1.20" fill="#8f8f8f" />
<rect x="368.00" y="253.10" width="1.00" height="0.80" fill="#c0507a" />
<rect x="370.50" y="236.00" width="6.30" height="50.00" fill="#ffa8f8" />
<rect x="371.10" y="252.00" width="5.70" height="1.20" fill="#8f8f8f" />
<rect x="371.10" y="253.10" width="5.70" height="0.80" fill="#c0507a" />
<rect x="378.00" y="236.00" width="5.70" height="50.00" fill="#ffa8f8" />
<rect x="378.60" y="252.00" width="5.10" height="1.20" fill="#8f8f8f" />
<rect x="378.60" y="253.10" width="5.10" height="0.80" fill="#c0507a" />
<rect x="384.90" y="236.00" width="26.40" height="50.00" fill="#aee8ff" />
<rect x="385.50" y="252.00" width="25.80" height="1.20" fill="#8f8f8f" />
<rect x="385.50" y="253.10" width="25.80" height="0.80" fill="#5a7ea8" />
<rect x="412.50" y="236.00" width="1.20" height="50.00" fill="#ffa8f8" />
<rect x="415.20" y="236.00" width="8.80" height="50.00" fill="#ffa8f8" />
<rect x="415.80" y="252.00" width="8.20" height="1.20" fill="#8f8f8f" />
<rect x="415.80" y="253.10" width="8.20" height="0.80" fill="#c0507a" />
<rect x="425.50" y="236.00" width="5.50" height="50.00" fill="#ffa8f8" />
<rect x="426.10" y="252.00" width="4.90" height="1.20" fill="#8f8f8f" />
<rect x="426.10" y="253.10" width="4.90" height="0.80" fill="#c0507a" />
<rect x="432.60" y="236.00" width="2.20" height="50.00" fill="#ffa8f8" />
<rect x="433.20" y="252.00" width="1.60" height="1.20" fill="#8f8f8f" />
<rect x="433.20" y="253.10" width="1.60" height="0.80" fill="#c0507a" />
<rect x="436.00" y="236.00" width="12.00" height="50.00" fill="#aee8ff" />
<rect x="436.60" y="252.00" width="11.40" height="1.20" fill="#8f8f8f" />
<rect x="436.60" y="253.10" width="11.40" height="0.80" fill="#5a7ea8" />
<rect x="449.20" y="236.00" width="12.80" height="50.00" fill="#ffa8f8" />
<rect x="449.80" y="252.00" width="12.20" height="1.20" fill="#8f8f8f" />
<rect x="449.80" y="253.10" width="12.20" height="0.80" fill="#c0507a" />
<rect x="463.30" y="236.00" width="4.90" height="50.00" fill="#ffa8f8" />
<rect x="463.90" y="252.00" width="4.30" height="1.20" fill="#8f8f8f" />
<rect x="463.90" y="253.10" width="4.30" height="0.80" fill="#c0507a" />
<rect x="469.60" y="236.00" width="9.20" height="50.00" fill="#aee8ff" />
<rect x="470.20" y="252.00" width="8.60" height="1.20" fill="#8f8f8f" />
<rect x="470.20" y="253.10" width="8.60" height="0.80" fill="#5a7ea8" />
<rect x="480.30" y="236.00" width="15.50" height="50.00" fill="#ffa8f8" />
<rect x="480.90" y="252.00" width="14.90" height="1.20" fill="#8f8f8f" />
<rect x="480.90" y="253.10" width="14.90" height="0.80" fill="#c0507a" />
<rect x="497.20" y="236.00" width="1.60" height="50.00" fill="#ffa8f8" />
<rect x="497.80" y="252.00" width="1.00" height="1.20" fill="#8f8f8f" />
<rect x="497.80" y="253.10" width="1.00" height="0.80" fill="#c0507a" />
<rect x="500.00" y="236.00" width="2.20" height="50.00" fill="#ffa8f8" />
<rect x="500.60" y="252.00" width="1.60" height="1.20" fill="#8f8f8f" />
<rect x="500.60" y="253.10" width="1.60" height="0.80" fill="#c0507a" />
<rect x="504.60" y="236.00" width="1.20" height="50.00" fill="#aee8ff" />
<rect x="507.10" y="236.00" width="13.90" height="50.00" fill="#aee8ff" />
<rect x="507.70" y="252.00" width="13.30" height="1.20" fill="#8f8f8f" />
<rect x="507.70" y="253.10" width="13.30" height="0.80" fill="#5a7ea8" />
<rect x="522.80" y="236.00" width="5.30" height="50.00" fill="#aee8ff" />
<rect x="523.40" y="252.00" width="4.70" height="1.20" fill="#8f8f8f" />
<rect x="523.40" y="253.10" width="4.70" height="0.80" fill="#5a7ea8" />
<rect x="528.90" y="236.00" width="2.70" height="50.00" fill="#ffa8f8" />
<rect x="529.50" y="252.00" width="2.10" height="1.20" fill="#8f8f8f" />
<rect x="529.50" y="253.10" width="2.10" height="0.80" fill="#c0507a" />
<rect x="533.10" y="236.00" width="5.90" height="50.00" fill="#ffa8f8" />
<rect x="533.70" y="252.00" width="5.30" height="1.20" fill="#8f8f8f" />
<rect x="533.70" y="253.10" width="5.30" height="0.80" fill="#c0507a" />
<rect x="541.30" y="236.00" width="4.90" height="50.00" fill="#ffa8f8" />
<rect x="541.90" y="252.00" width="4.30" height="1.20" fill="#8f8f8f" />
<rect x="541.90" y="253.10" width="4.30" height="0.80" fill="#c0507a" />
<rect x="548.00" y="236.00" width="13.30" height="50.00" fill="#aee8ff" />
<rect x="548.60" y="252.00" width="12.70" height="1.20" fill="#8f8f8f" />
<rect x="548.60" y="253.10" width="12.70" height="0.80" fill="#5a7ea8" />
<rect x="562.80" y="236.00" width="2.00" height="50.00" fill="#aee8ff" />
<rect x="563.40" y="252.00" width="1.40" height="1.20" fill="#8f8f8f" />
<rect x="563.40" y="253.10" width="1.40" height="0.80" fill="#5a7ea8" />
<rect x="566.30" y="236.00" width="3.50" height="50.00" fill="#aee8ff" />
<rect x="566.90" y="252.00" width="2.90" height="1.20" fill="#8f8f8f" />
<rect x="566.90" y="253.10" width="2.90" height="0.80" fill="#5a7ea8" />
<rect x="571.30" y="236.00" width="2.80" height="50.00" fill="#aee8ff" />
<rect x="571.90" y="252.00" width="2.20" height="1.20" fill="#8f8f8f" />
<rect x="571.90" y="253.10" width="2.20" height="0.80" fill="#5a7ea8" />
<rect x="575.10" y="236.00" width="2.80" height="50.00" fill="#ffa8f8" />
<rect x="575.70" y="252.00" width="2.20" height="1.20" fill="#8f8f8f" />
<rect x="575.70" y="253.10" width="2.20" height="0.80" fill="#c0507a" />
<rect x="579.50" y="236.00" width="8.50" height="50.00" fill="#ffa8f8" />
<rect x="580.10" y="252.00" width="7.90" height="1.20" fill="#8f8f8f" />
<rect x="580.10" y="253.10" width="7.90" height="0.80" fill="#c0507a" />
<rect x="589.20" y="236.00" width="2.90" height="50.00" fill="#ffa8f8" />
<rect x="589.80" y="252.00" width="2.30" height="1.20" fill="#8f8f8f" />
<rect x="589.80" y="253.10" width="2.30" height="0.80" fill="#c0507a" />
<rect x="593.00" y="236.00" width="1.60" height="50.00" fill="#aee8ff" />
<rect x="593.60" y="252.00" width="1.00" height="1.20" fill="#8f8f8f" />
<rect x="593.60" y="253.10" width="1.00" height="0.80" fill="#5a7ea8" />
<rect x="596.50" y="236.00" width="9.50" height="50.00" fill="#aee8ff" />
<rect x="597.10" y="252.00" width="8.90" height="1.20" fill="#8f8f8f" />
<rect x="597.10" y="253.10" width="8.90" height="0.80" fill="#5a7ea8" />
<rect x="607.40" y="236.00" width="2.60" height="50.00" fill="#00bfbf" />
<rect x="608.00" y="252.00" width="2.00" height="1.20" fill="#8f8f8f" />
<rect x="608.00" y="253.10" width="2.00" height="0.80" fill="#006b6b" />
<rect x="611.30" y="236.00" width="7.80" height="50.00" fill="#00bfbf" />
<rect x="611.90" y="252.00" width="7.20" height="1.20" fill="#8f8f8f" />
<rect x="611.90" y="253.10" width="7.20" height="0.80" fill="#006b6b" />
<rect x="620.40" y="236.00" width="1.30" height="50.00" fill="#aee8ff" />
<rect x="621.00" y="252.00" width="0.70" height="1.20" fill="#8f8f8f" />
<rect x="621.00" y="253.10" width="0.70" height="0.80" fill="#5a7ea8" />
<rect x="623.30" y="236.00" width="3.40" height="50.00" fill="#aee8ff" />
<rect x="623.90" y="252.00" width="2.80" height="1.20" fill="#8f8f8f" />
<rect x="623.90" y="253.10" width="2.80" height="0.80" fill="#5a7ea8" />
<rect x="628.50" y="236.00" width="6.70" height="50.00" fill="#aee8ff" />
<rect x="629.10" y="252.00" width="6.10" height="1.20" fill="#8f8f8f" />
<rect x="629.10" y="253.10" width="6.10" height="0.80" fill="#5a7ea8" />
<rect x="637.00" y="236.00" width="1.30" height="50.00" fill="#00bfbf" />
<rect x="637.60" y="252.00" width="0.70" height="1.20" fill="#8f8f8f" />
<rect x="637.60" y="253.10" width="0.70" height="0.80" fill="#006b6b" />
<rect x="639.50" y="236.00" width="4.50" height="50.00" fill="#00bfbf" />
<rect x="640.10" y="252.00" width="3.90" height="1.20" fill="#8f8f8f" />
<rect x="640.10" y="253.10" width="3.90" height="0.80" fill="#006b6b" />
<rect x="645.30" y="236.00" width="1.60" height="50.00" fill="#aee8ff" />
<rect x="645.90" y="252.00" width="1.00" height="1.20" fill="#8f8f8f" />
<rect x="645.90" y="253.10" width="1.00" height="0.80" fill="#5a7ea8" />
<rect x="648.40" y="236.00" width="15.50" height="50.00" fill="#aee8ff" />
<rect x="649.00" y="252.00" width="14.90" height="1.20" fill="#8f8f8f" />
<rect x="649.00" y="253.10" width="14.90" height="0.80" fill="#5a7ea8" />
<rect x="665.40" y="236.00" width="6.70" height="50.00" fill="#00bfbf" />
<rect x="666.00" y="252.00" width="6.10" height="1.20" fill="#8f8f8f" />
<rect x="666.00" y="253.10" width="6.10" height="0.80" fill="#006b6b" />
<rect x="673.30" y="236.00" width="7.00" height="50.00" fill="#aee8ff" />
<rect x="673.90" y="252.00" width="6.40" height="1.20" fill="#8f8f8f" />
<rect x="673.90" y="253.10" width="6.40" height="0.80" fill="#5a7ea8" />
<rect x="681.30" y="236.00" width="1.60" height="50.00" fill="#00bfbf" />
<rect x="681.90" y="252.00" width="1.00" height="1.20" fill="#8f8f8f" />
<rect x="681.90" y="253.10" width="1.00" height="0.80" fill="#006b6b" />
<rect x="684.30" y="236.00" width="14.90" height="50.00" fill="#00bfbf" />
<rect x="684.90" y="252.00" width="14.30" height="1.20" fill="#8f8f8f" />
<rect x="684.90" y="253.10" width="14.30" height="0.80" fill="#006b6b" />
<rect x="700.00" y="236.00" width="16.70" height="50.00" fill="#aee8ff" />
<rect x="700.60" y="252.00" width="16.10" height="1.20" fill="#8f8f8f" />
<rect x="700.60" y="253.10" width="16.10" height="0.80" fill="#5a7ea8" />
<rect x="718.20" y="236.00" width="9.80" height="50.00" fill="#aee8ff" />
<rect x="718.80" y="252.00" width="9.20" height="1.20" fill="#8f8f8f" />
<rect x="718.80" y="253.10" width="9.20" height="0.80" fill="#5a7ea8" />
<rect x="729.00" y="236.00" width="1.20" height="50.00" fill="#aee8ff" />
<rect x="729.60" y="252.00" width="0.60" height="1.20" fill="#8f8f8f" />
<rect x="729.60" y="253.10" width="0.60" height="0.80" fill="#5a7ea8" />
<polygon points="299.0,236.0 303.0,236.0 303.0,240.6" fill="#c8c8c8" stroke="#555" stroke-width="0.5"/>
<polygon points="314.3,236.0 318.3,236.0 318.3,240.6" fill="#c8c8c8" stroke="#555" stroke-width="0.5"/>
<polygon points="347.8,236.0 351.8,236.0 351.8,240.6" fill="#c8c8c8" stroke="#555" stroke-width="0.5"/>
<polygon points="464.6,236.0 468.6,236.0 468.6,240.6" fill="#c8c8c8" stroke="#555" stroke-width="0.5"/>
<polygon points="498.6,236.0 502.6,236.0 502.6,240.6" fill="#c8c8c8" stroke="#555" stroke-width="0.5"/>
<polygon points="524.5,236.0 528.5,236.0 528.5,240.6" fill="#c8c8c8" stroke="#555" stroke-width="0.5"/>
<polygon points="640.4,236.0 644.4,236.0 644.4,240.6" fill="#c8c8c8" stroke="#555" stroke-width="0.5"/>
<polygon points="660.3,236.0 664.3,236.0 664.3,240.6" fill="#c8c8c8" stroke="#555" stroke-width="0.5"/>
<polygon points="668.5,236.0 672.5,236.0 672.5,240.6" fill="#c8c8c8" stroke="#555" stroke-width="0.5"/>
<polygon points="676.7,236.0 680.7,236.0 680.7,240.6" fill="#c8c8c8" stroke="#555" stroke-width="0.5"/>
<polygon points="695.6,236.0 699.6,236.0 699.6,240.6" fill="#c8c8c8" stroke="#555" stroke-width="0.5"/>
<g transform="translate(116,253)" filter="url(#bl)">
<rect x="0.00" y="0.00" width="28.40" height="33.00" fill="#d9c7ae" />
<rect x="0.00" y="16.00" width="13.00" height="17.00" fill="#9c9c9c" />
<rect x="10.00" y="15.50" width="15.00" height="14.00" fill="#e6e6e6" />
<rect x="0.80" y="3.20" width="6.20" height="7.50" fill="#cfa6d0" />
<rect x="2.00" y="2.40" width="3.40" height="3.00" fill="#ead8ea" />
<rect x="1.60" y="9.50" width="4.80" height="3.20" fill="#4a6a3a" />
<rect x="2.20" y="12.00" width="3.60" height="3.60" fill="#8a4a3a" />
<rect x="15.30" y="1.20" width="3.80" height="3.60" fill="#b98a6a" />
<rect x="15.30" y="0.60" width="3.80" height="1.50" fill="#2a2020" />
<rect x="12.80" y="4.60" width="9.40" height="16.40" fill="#20232b" />
<rect x="17.00" y="4.80" width="0.90" height="4.80" fill="#a02828" />
<rect x="16.00" y="4.60" width="3.00" height="1.40" fill="#e8e8e8" />
<rect x="14.20" y="21.00" width="2.90" height="11.40" fill="#1c1f26" />
<rect x="18.00" y="21.00" width="2.90" height="11.40" fill="#1c1f26" />
<rect x="23.00" y="2.40" width="5.40" height="30.00" fill="#22252d" />
<rect x="24.40" y="0.80" width="4.00" height="3.00" fill="#b08868" />
</g>
<rect x="140.20" y="236.00" width="4.20" height="17.00" fill="#d9c7ae" />
<rect x="140.00" y="236.00" width="0.60" height="17.00" fill="#8a7a40" />
<g transform="translate(385.7,253.5)" filter="url(#bl)">
<rect x="0.00" y="0.00" width="25.60" height="32.40" fill="#eadcc2" />
<rect x="0.00" y="0.00" width="2.00" height="32.40" fill="#b28858" />
<rect x="0.60" y="0.00" width="0.80" height="25.92" fill="#2a1a10" />
<rect x="9.60" y="0.00" width="1.10" height="24.30" fill="#2e2014" />
<rect x="10.70" y="0.00" width="3.60" height="32.40" fill="#d2b486" />
<rect x="14.40" y="0.00" width="11.20" height="32.40" fill="#e9e5e0" />
<path d="M16 4 L19 9 L17.5 14 L21 20 M22 2 L20.4 8 L23.6 13" stroke="#bdb8b2" stroke-width="0.7" fill="none"/>
<ellipse cx="8.6" cy="29.6" rx="2.4" ry="2.6" fill="#b4622e"/><ellipse cx="16.4" cy="29.4" rx="2.6" ry="2.8" fill="#bc6a36"/><ellipse cx="24.4" cy="29.6" rx="1.8" ry="2.6" fill="#b4622e"/>
</g>
<rect x="409.20" y="236.00" width="2.10" height="17.50" fill="#e9e5e0" />
<rect x="125.20" y="239.60" width="10.30" height="9.60" fill="#e6b90a" />
<text x="130.55" y="247.40" font-size="10.4" fill="#0c0c00" font-style="italic" text-anchor="middle" stroke="#0c0c00" stroke-width="0.25">fx</text>
<rect x="395.20" y="239.60" width="10.30" height="9.60" fill="#e6b90a" />
<text x="400.55" y="247.40" font-size="10.4" fill="#0c0c00" font-style="italic" text-anchor="middle" stroke="#0c0c00" stroke-width="0.25">fx</text>
<rect x="24.60" y="290.50" width="704.60" height="61.60" fill="#3a3a3a" />
<rect x="23.90" y="290.80" width="1.10" height="61.00" fill="#fffee0" />
<polygon points="23.9,290.8 24.6,298.9 25.0,298.9 25.0,290.8" fill="#a09070" />
<polygon points="23.9,322.0 24.6,332.1 25.0,332.1 25.0,322.0" fill="#a09070" />
<rect x="23.90" y="320.80" width="1.10" height="1.40" fill="#a09070" />
<rect x="25.80" y="290.80" width="1.40" height="61.00" fill="#fffee0" />
<polygon points="25.8,290.8 25.8,298.7 26.6,298.7 26.6,298.0 27.2,298.0 27.2,290.8" fill="#a09070" />
<polygon points="25.8,322.0 25.8,329.9 26.6,329.9 26.6,337.5 27.2,337.5 27.2,322.0" fill="#a09070" />
<rect x="25.80" y="320.80" width="1.40" height="1.40" fill="#a09070" />
<rect x="26.30" y="320.00" width="0.90" height="1.40" fill="#ffffff" opacity="0.5"/>
<rect x="26.30" y="321.40" width="0.90" height="1.10" fill="#000000" opacity="0.5"/>
<rect x="28.00" y="290.80" width="2.40" height="61.00" fill="#fffee0" />
<polygon points="28.0,290.8 28.0,297.1 28.6,297.1 28.6,298.9 29.6,298.9 29.6,298.6 30.4,298.6 30.4,290.8" fill="#a09070" />
<polygon points="28.0,322.0 28.0,331.3 28.6,331.3 28.6,329.3 29.6,329.3 29.6,334.6 30.4,334.6 30.4,322.0" fill="#a09070" />
<rect x="28.00" y="320.80" width="2.40" height="1.40" fill="#a09070" />
<rect x="28.50" y="320.00" width="1.90" height="1.40" fill="#ffffff" opacity="0.5"/>
<rect x="28.50" y="321.40" width="1.90" height="1.10" fill="#000000" opacity="0.5"/>
<rect x="33.00" y="290.80" width="1.20" height="61.00" fill="#fffee0" />
<polygon points="33.0,290.8 33.0,296.2 33.6,296.2 33.6,297.1 34.2,297.1 34.2,290.8" fill="#a09070" />
<polygon points="33.0,322.0 33.0,331.1 33.6,331.1 33.6,329.0 34.2,329.0 34.2,322.0" fill="#a09070" />
<rect x="33.00" y="320.80" width="1.20" height="1.40" fill="#a09070" />
<rect x="33.50" y="320.00" width="0.70" height="1.40" fill="#ffffff" opacity="0.5"/>
<rect x="33.50" y="321.40" width="0.70" height="1.10" fill="#000000" opacity="0.5"/>
<rect x="34.90" y="290.80" width="14.00" height="61.00" fill="#e000e0" />
<polygon points="34.9,290.8 34.9,297.6 35.6,297.6 35.6,298.3 36.6,298.3 36.6,298.0 37.6,298.0 37.6,301.0 38.6,301.0 38.6,297.7 39.6,297.7 39.6,301.5 40.6,301.5 40.6,298.1 41.6,298.1 41.6,296.5 42.6,296.5 42.6,301.1 43.6,301.1 43.6,303.4 44.6,303.4 44.6,297.1 45.6,297.1 45.6,298.3 46.6,298.3 46.6,302.8 47.6,302.8 47.6,304.3 48.6,304.3 48.6,298.7 48.9,298.7 48.9,290.8" fill="#7a007a" />
<polygon points="34.9,322.0 34.9,331.3 35.6,331.3 35.6,338.3 36.6,338.3 36.6,333.1 37.6,333.1 37.6,330.1 38.6,330.1 38.6,331.0 39.6,331.0 39.6,330.4 40.6,330.4 40.6,335.5 41.6,335.5 41.6,332.8 42.6,332.8 42.6,333.3 43.6,333.3 43.6,331.4 44.6,331.4 44.6,336.6 45.6,336.6 45.6,333.8 46.6,333.8 46.6,332.7 47.6,332.7 47.6,332.0 48.6,332.0 48.6,335.1 48.9,335.1 48.9,322.0" fill="#7a007a" />
<rect x="34.90" y="320.80" width="14.00" height="1.40" fill="#7a007a" />
<rect x="35.40" y="320.00" width="13.50" height="1.40" fill="#ffffff" opacity="0.5"/>
<rect x="35.40" y="321.40" width="13.50" height="1.10" fill="#000000" opacity="0.5"/>
<rect x="49.80" y="290.80" width="7.60" height="61.00" fill="#3cffff" />
<polygon points="49.8,290.8 49.8,297.3 50.6,297.3 50.6,305.6 51.6,305.6 51.6,297.6 52.6,297.6 52.6,299.8 53.6,299.8 53.6,297.4 54.6,297.4 54.6,297.9 55.6,297.9 55.6,298.3 56.6,298.3 56.6,296.2 57.4,296.2 57.4,290.8" fill="#1a98a8" />
<polygon points="49.8,322.0 49.8,333.3 50.6,333.3 50.6,329.8 51.6,329.8 51.6,330.7 52.6,330.7 52.6,329.7 53.6,329.7 53.6,329.3 54.6,329.3 54.6,332.0 55.6,332.0 55.6,331.1 56.6,331.1 56.6,329.7 57.4,329.7 57.4,322.0" fill="#1a98a8" />
<rect x="49.80" y="320.80" width="7.60" height="1.40" fill="#1a98a8" />
<rect x="50.30" y="320.00" width="7.10" height="1.40" fill="#ffffff" opacity="0.5"/>
<rect x="50.30" y="321.40" width="7.10" height="1.10" fill="#000000" opacity="0.5"/>
<rect x="58.10" y="290.80" width="2.80" height="61.00" fill="#aee8ff" />
<polygon points="58.1,290.8 58.1,308.3 58.6,308.3 58.6,297.8 59.6,297.8 59.6,300.1 60.6,300.1 60.6,297.2 60.9,297.2 60.9,290.8" fill="#5a7ea8" />
<polygon points="58.1,322.0 58.1,331.4 58.6,331.4 58.6,336.3 59.6,336.3 59.6,330.4 60.6,330.4 60.6,335.6 60.9,335.6 60.9,322.0" fill="#5a7ea8" />
<rect x="58.10" y="320.80" width="2.80" height="1.40" fill="#5a7ea8" />
<rect x="58.60" y="320.00" width="2.30" height="1.40" fill="#ffffff" opacity="0.5"/>
<rect x="58.60" y="321.40" width="2.30" height="1.10" fill="#000000" opacity="0.5"/>
<rect x="61.90" y="290.80" width="12.40" height="61.00" fill="#aee8ff" />
<polygon points="61.9,290.8 61.9,299.1 62.6,299.1 62.6,299.4 63.6,299.4 63.6,302.1 64.6,302.1 64.6,299.8 65.6,299.8 65.6,305.7 66.6,305.7 66.6,300.1 67.6,300.1 67.6,301.0 68.6,301.0 68.6,299.8 69.6,299.8 69.6,300.9 70.6,300.9 70.6,299.0 71.6,299.0 71.6,296.7 72.6,296.7 72.6,299.3 73.6,299.3 73.6,297.9 74.3,297.9 74.3,290.8" fill="#5a7ea8" />
<polygon points="61.9,322.0 61.9,328.9 62.6,328.9 62.6,329.6 63.6,329.6 63.6,328.3 64.6,328.3 64.6,340.1 65.6,340.1 65.6,327.2 66.6,327.2 66.6,327.8 67.6,327.8 67.6,327.6 68.6,327.6 68.6,326.8 69.6,326.8 69.6,328.5 70.6,328.5 70.6,328.1 71.6,328.1 71.6,326.6 72.6,326.6 72.6,326.4 73.6,326.4 73.6,326.7 74.3,326.7 74.3,322.0" fill="#5a7ea8" />
<rect x="61.90" y="320.80" width="12.40" height="1.40" fill="#5a7ea8" />
<rect x="62.40" y="320.00" width="11.90" height="1.40" fill="#ffffff" opacity="0.5"/>
<rect x="62.40" y="321.40" width="11.90" height="1.10" fill="#000000" opacity="0.5"/>
<rect x="75.30" y="290.80" width="2.00" height="61.00" fill="#fff95a" />
<polygon points="75.3,290.8 75.3,301.3 75.6,301.3 75.6,301.4 76.6,301.4 76.6,300.7 77.3,300.7 77.3,290.8" fill="#b8862b" />
<polygon points="75.3,322.0 75.3,327.7 75.6,327.7 75.6,329.3 76.6,329.3 76.6,328.4 77.3,328.4 77.3,322.0" fill="#b8862b" />
<rect x="75.30" y="320.80" width="2.00" height="1.40" fill="#b8862b" />
<rect x="75.80" y="320.00" width="1.50" height="1.40" fill="#ffffff" opacity="0.5"/>
<rect x="75.80" y="321.40" width="1.50" height="1.10" fill="#000000" opacity="0.5"/>
<rect x="79.10" y="290.80" width="17.60" height="61.00" fill="#fff95a" />
<polygon points="79.1,290.8 79.1,301.7 79.6,301.7 79.6,301.5 80.6,301.5 80.6,300.9 81.6,300.9 81.6,302.0 82.6,302.0 82.6,301.9 83.6,301.9 83.6,300.3 84.6,300.3 84.6,301.2 85.6,301.2 85.6,301.0 86.6,301.0 86.6,302.1 87.6,302.1 87.6,298.9 88.6,298.9 88.6,297.8 89.6,297.8 89.6,299.1 90.6,299.1 90.6,308.6 91.6,308.6 91.6,301.1 92.6,301.1 92.6,299.6 93.6,299.6 93.6,298.6 94.6,298.6 94.6,300.1 95.6,300.1 95.6,297.7 96.6,297.7 96.6,297.4 96.7,297.4 96.7,290.8" fill="#b8862b" />
<polygon points="79.1,322.0 79.1,328.4 79.6,328.4 79.6,326.9 80.6,326.9 80.6,326.4 81.6,326.4 81.6,332.5 82.6,332.5 82.6,328.0 83.6,328.0 83.6,332.4 84.6,332.4 84.6,326.6 85.6,326.6 85.6,331.9 86.6,331.9 86.6,328.7 87.6,328.7 87.6,328.5 88.6,328.5 88.6,329.3 89.6,329.3 89.6,332.7 90.6,332.7 90.6,327.7 91.6,327.7 91.6,328.4 92.6,328.4 92.6,327.6 93.6,327.6 93.6,330.1 94.6,330.1 94.6,331.1 95.6,331.1 95.6,328.2 96.6,328.2 96.6,327.6 96.7,327.6 96.7,322.0" fill="#b8862b" />
<rect x="79.10" y="320.80" width="17.60" height="1.40" fill="#b8862b" />
<rect x="79.60" y="320.00" width="17.10" height="1.40" fill="#ffffff" opacity="0.5"/>
<rect x="79.60" y="321.40" width="17.10" height="1.10" fill="#000000" opacity="0.5"/>
<rect x="98.20" y="290.80" width="2.70" height="61.00" fill="#aee8ff" />
<polygon points="98.2,290.8 98.2,298.6 98.6,298.6 98.6,301.1 99.6,301.1 99.6,296.8 100.6,296.8 100.6,298.3 100.9,298.3 100.9,290.8" fill="#5a7ea8" />
<polygon points="98.2,322.0 98.2,330.7 98.6,330.7 98.6,332.1 99.6,332.1 99.6,330.2 100.6,330.2 100.6,327.9 100.9,327.9 100.9,322.0" fill="#5a7ea8" />
<rect x="98.20" y="320.80" width="2.70" height="1.40" fill="#5a7ea8" />
<rect x="98.70" y="320.00" width="2.20" height="1.40" fill="#ffffff" opacity="0.5"/>
<rect x="98.70" y="321.40" width="2.20" height="1.10" fill="#000000" opacity="0.5"/>
<rect x="102.00" y="290.80" width="12.20" height="61.00" fill="#aee8ff" />
<polygon points="102.0,290.8 102.0,300.8 102.6,300.8 102.6,295.4 103.6,295.4 103.6,299.8 104.6,299.8 104.6,296.9 105.6,296.9 105.6,298.7 106.6,298.7 106.6,302.5 107.6,302.5 107.6,305.1 108.6,305.1 108.6,297.0 109.6,297.0 109.6,297.5 110.6,297.5 110.6,304.3 111.6,304.3 111.6,296.2 112.6,296.2 112.6,299.3 113.6,299.3 113.6,299.3 114.2,299.3 114.2,290.8" fill="#5a7ea8" />
<polygon points="102.0,322.0 102.0,340.7 102.6,340.7 102.6,331.0 103.6,331.0 103.6,329.3 104.6,329.3 104.6,332.2 105.6,332.2 105.6,328.7 106.6,328.7 106.6,331.8 107.6,331.8 107.6,331.6 108.6,331.6 108.6,330.9 109.6,330.9 109.6,334.3 110.6,334.3 110.6,332.1 111.6,332.1 111.6,328.3 112.6,328.3 112.6,329.6 113.6,329.6 113.6,338.0 114.2,338.0 114.2,322.0" fill="#5a7ea8" />
<rect x="102.00" y="320.80" width="12.20" height="1.40" fill="#5a7ea8" />
<rect x="102.50" y="320.00" width="11.70" height="1.40" fill="#ffffff" opacity="0.5"/>
<rect x="102.50" y="321.40" width="11.70" height="1.10" fill="#000000" opacity="0.5"/>
<rect x="115.40" y="290.80" width="29.00" height="61.00" fill="#fff95a" />
<polygon points="115.4,290.8 115.4,298.7 115.6,298.7 115.6,299.0 116.6,299.0 116.6,311.6 117.6,311.6 117.6,301.2 118.6,301.2 118.6,299.4 119.6,299.4 119.6,304.0 120.6,304.0 120.6,301.8 121.6,301.8 121.6,306.3 122.6,306.3 122.6,298.7 123.6,298.7 123.6,297.3 124.6,297.3 124.6,300.2 125.6,300.2 125.6,299.9 126.6,299.9 126.6,298.1 127.6,298.1 127.6,299.5 128.6,299.5 128.6,299.9 129.6,299.9 129.6,297.9 130.6,297.9 130.6,298.1 131.6,298.1 131.6,300.2 132.6,300.2 132.6,299.6 133.6,299.6 133.6,298.0 134.6,298.0 134.6,299.4 135.6,299.4 135.6,299.8 136.6,299.8 136.6,299.1 137.6,299.1 137.6,301.4 138.6,301.4 138.6,298.5 139.6,298.5 139.6,301.9 140.6,301.9 140.6,299.0 141.6,299.0 141.6,299.6 142.6,299.6 142.6,298.9 143.6,298.9 143.6,299.7 144.4,299.7 144.4,290.8" fill="#b8862b" />
<polygon points="115.4,322.0 115.4,329.5 115.6,329.5 115.6,330.5 116.6,330.5 116.6,336.8 117.6,336.8 117.6,336.3 118.6,336.3 118.6,337.3 119.6,337.3 119.6,330.5 120.6,330.5 120.6,329.6 121.6,329.6 121.6,333.2 122.6,333.2 122.6,330.7 123.6,330.7 123.6,333.0 124.6,333.0 124.6,332.8 125.6,332.8 125.6,339.7 126.6,339.7 126.6,336.7 127.6,336.7 127.6,330.3 128.6,330.3 128.6,329.6 129.6,329.6 129.6,328.3 130.6,328.3 130.6,329.6 131.6,329.6 131.6,329.8 132.6,329.8 132.6,328.6 133.6,328.6 133.6,342.3 134.6,342.3 134.6,333.1 135.6,333.1 135.6,331.4 136.6,331.4 136.6,332.2 137.6,332.2 137.6,331.5 138.6,331.5 138.6,332.9 139.6,332.9 139.6,333.1 140.6,333.1 140.6,338.1 141.6,338.1 141.6,331.3 142.6,331.3 142.6,336.6 143.6,336.6 143.6,333.7 144.4,333.7 144.4,322.0" fill="#b8862b" />
<rect x="115.40" y="320.80" width="29.00" height="1.40" fill="#b8862b" />
<rect x="115.90" y="320.00" width="28.50" height="1.40" fill="#ffffff" opacity="0.5"/>
<rect x="115.90" y="321.40" width="28.50" height="1.10" fill="#000000" opacity="0.5"/>
<rect x="145.30" y="290.80" width="1.90" height="61.00" fill="#ff40ff" />
<polygon points="145.3,290.8 145.3,299.2 145.6,299.2 145.6,299.9 146.6,299.9 146.6,299.4 147.2,299.4 147.2,290.8" fill="#b020a0" />
<polygon points="145.3,322.0 145.3,331.8 145.6,331.8 145.6,331.1 146.6,331.1 146.6,336.4 147.2,336.4 147.2,322.0" fill="#b020a0" />
<rect x="145.30" y="320.80" width="1.90" height="1.40" fill="#b020a0" />
<rect x="145.80" y="320.00" width="1.40" height="1.40" fill="#ffffff" opacity="0.5"/>
<rect x="145.80" y="321.40" width="1.40" height="1.10" fill="#000000" opacity="0.5"/>
<rect x="148.10" y="290.80" width="16.00" height="61.00" fill="#ff40ff" />
<polygon points="148.1,290.8 148.1,298.7 148.6,298.7 148.6,297.2 149.6,297.2 149.6,298.7 150.6,298.7 150.6,300.1 151.6,300.1 151.6,300.4 152.6,300.4 152.6,298.3 153.6,298.3 153.6,300.2 154.6,300.2 154.6,296.7 155.6,296.7 155.6,295.7 156.6,295.7 156.6,301.6 157.6,301.6 157.6,306.4 158.6,306.4 158.6,303.9 159.6,303.9 159.6,298.7 160.6,298.7 160.6,298.7 161.6,298.7 161.6,298.2 162.6,298.2 162.6,308.2 163.6,308.2 163.6,302.2 164.1,302.2 164.1,290.8" fill="#b020a0" />
<polygon points="148.1,322.0 148.1,332.5 148.6,332.5 148.6,332.2 149.6,332.2 149.6,331.0 150.6,331.0 150.6,329.4 151.6,329.4 151.6,331.8 152.6,331.8 152.6,330.7 153.6,330.7 153.6,331.8 154.6,331.8 154.6,330.8 155.6,330.8 155.6,328.5 156.6,328.5 156.6,330.9 157.6,330.9 157.6,331.8 158.6,331.8 158.6,329.9 159.6,329.9 159.6,332.3 160.6,332.3 160.6,331.3 161.6,331.3 161.6,331.6 162.6,331.6 162.6,332.0 163.6,332.0 163.6,333.4 164.1,333.4 164.1,322.0" fill="#b020a0" />
<rect x="148.10" y="320.80" width="16.00" height="1.40" fill="#b020a0" />
<rect x="148.60" y="320.00" width="15.50" height="1.40" fill="#ffffff" opacity="0.5"/>
<rect x="148.60" y="321.40" width="15.50" height="1.10" fill="#000000" opacity="0.5"/>
<rect x="165.30" y="290.80" width="18.70" height="61.00" fill="#d2691e" />
<polygon points="165.3,290.8 165.3,299.2 165.6,299.2 165.6,298.9 166.6,298.9 166.6,304.0 167.6,304.0 167.6,298.4 168.6,298.4 168.6,306.9 169.6,306.9 169.6,298.3 170.6,298.3 170.6,301.4 171.6,301.4 171.6,300.6 172.6,300.6 172.6,302.7 173.6,302.7 173.6,301.9 174.6,301.9 174.6,302.1 175.6,302.1 175.6,303.2 176.6,303.2 176.6,302.8 177.6,302.8 177.6,300.3 178.6,300.3 178.6,300.0 179.6,300.0 179.6,302.2 180.6,302.2 180.6,302.4 181.6,302.4 181.6,302.1 182.6,302.1 182.6,303.4 183.6,303.4 183.6,302.7 184.0,302.7 184.0,290.8" fill="#6b2f0a" />
<polygon points="165.3,322.0 165.3,331.4 165.6,331.4 165.6,331.5 166.6,331.5 166.6,329.8 167.6,329.8 167.6,330.1 168.6,330.1 168.6,328.4 169.6,328.4 169.6,329.4 170.6,329.4 170.6,331.9 171.6,331.9 171.6,330.9 172.6,330.9 172.6,333.4 173.6,333.4 173.6,332.9 174.6,332.9 174.6,331.3 175.6,331.3 175.6,333.4 176.6,333.4 176.6,331.3 177.6,331.3 177.6,329.8 178.6,329.8 178.6,331.1 179.6,331.1 179.6,331.6 180.6,331.6 180.6,332.5 181.6,332.5 181.6,331.2 182.6,331.2 182.6,333.6 183.6,333.6 183.6,333.8 184.0,333.8 184.0,322.0" fill="#6b2f0a" />
<rect x="165.30" y="320.80" width="18.70" height="1.40" fill="#6b2f0a" />
<rect x="165.80" y="320.00" width="18.20" height="1.40" fill="#ffffff" opacity="0.5"/>
<rect x="165.80" y="321.40" width="18.20" height="1.10" fill="#000000" opacity="0.5"/>
<rect x="185.20" y="290.80" width="1.80" height="61.00" fill="#ffa8f8" />
<polygon points="185.2,290.8 185.2,301.3 185.6,301.3 185.6,302.8 186.6,302.8 186.6,298.7 187.0,298.7 187.0,290.8" fill="#c0507a" />
<polygon points="185.2,322.0 185.2,331.0 185.6,331.0 185.6,334.1 186.6,334.1 186.6,331.5 187.0,331.5 187.0,322.0" fill="#c0507a" />
<rect x="185.20" y="320.80" width="1.80" height="1.40" fill="#c0507a" />
<rect x="185.70" y="320.00" width="1.30" height="1.40" fill="#ffffff" opacity="0.5"/>
<rect x="185.70" y="321.40" width="1.30" height="1.10" fill="#000000" opacity="0.5"/>
<rect x="188.00" y="290.80" width="16.20" height="61.00" fill="#ffa8f8" />
<polygon points="188.0,290.8 188.0,301.1 188.6,301.1 188.6,302.0 189.6,302.0 189.6,307.3 190.6,307.3 190.6,300.2 191.6,300.2 191.6,310.5 192.6,310.5 192.6,299.8 193.6,299.8 193.6,301.3 194.6,301.3 194.6,300.1 195.6,300.1 195.6,300.3 196.6,300.3 196.6,298.9 197.6,298.9 197.6,298.5 198.6,298.5 198.6,300.9 199.6,300.9 199.6,300.4 200.6,300.4 200.6,299.2 201.6,299.2 201.6,299.4 202.6,299.4 202.6,299.3 203.6,299.3 203.6,299.4 204.2,299.4 204.2,290.8" fill="#c0507a" />
<polygon points="188.0,322.0 188.0,337.0 188.6,337.0 188.6,331.2 189.6,331.2 189.6,333.5 190.6,333.5 190.6,342.5 191.6,342.5 191.6,335.8 192.6,335.8 192.6,330.0 193.6,330.0 193.6,345.7 194.6,345.7 194.6,331.1 195.6,331.1 195.6,333.3 196.6,333.3 196.6,336.7 197.6,336.7 197.6,334.7 198.6,334.7 198.6,329.2 199.6,329.2 199.6,330.5 200.6,330.5 200.6,331.1 201.6,331.1 201.6,331.7 202.6,331.7 202.6,330.9 203.6,330.9 203.6,330.3 204.2,330.3 204.2,322.0" fill="#c0507a" />
<rect x="188.00" y="320.80" width="16.20" height="1.40" fill="#c0507a" />
<rect x="188.50" y="320.00" width="15.70" height="1.40" fill="#ffffff" opacity="0.5"/>
<rect x="188.50" y="321.40" width="15.70" height="1.10" fill="#000000" opacity="0.5"/>
<rect x="205.80" y="290.80" width="1.00" height="61.00" fill="#aee8ff" />
<polygon points="205.8,290.8 205.8,300.8 206.6,300.8 206.6,296.8 206.8,296.8 206.8,290.8" fill="#5a7ea8" />
<polygon points="205.8,322.0 205.8,328.7 206.6,328.7 206.6,335.6 206.8,335.6 206.8,322.0" fill="#5a7ea8" />
<rect x="205.80" y="320.80" width="1.00" height="1.40" fill="#5a7ea8" />
<rect x="208.20" y="290.80" width="3.80" height="61.00" fill="#aee8ff" />
<polygon points="208.2,290.8 208.2,296.1 208.6,296.1 208.6,297.8 209.6,297.8 209.6,299.4 210.6,299.4 210.6,295.9 211.6,295.9 211.6,298.3 212.0,298.3 212.0,290.8" fill="#5a7ea8" />
<polygon points="208.2,322.0 208.2,335.7 208.6,335.7 208.6,331.5 209.6,331.5 209.6,333.2 210.6,333.2 210.6,330.4 211.6,330.4 211.6,333.3 212.0,333.3 212.0,322.0" fill="#5a7ea8" />
<rect x="208.20" y="320.80" width="3.80" height="1.40" fill="#5a7ea8" />
<rect x="208.70" y="320.00" width="3.30" height="1.40" fill="#ffffff" opacity="0.5"/>
<rect x="208.70" y="321.40" width="3.30" height="1.10" fill="#000000" opacity="0.5"/>
<rect x="213.20" y="290.80" width="4.80" height="61.00" fill="#aee8ff" />
<polygon points="213.2,290.8 213.2,298.0 213.6,298.0 213.6,298.0 214.6,298.0 214.6,296.0 215.6,296.0 215.6,301.4 216.6,301.4 216.6,297.0 217.6,297.0 217.6,299.0 218.0,299.0 218.0,290.8" fill="#5a7ea8" />
<polygon points="213.2,322.0 213.2,333.0 213.6,333.0 213.6,331.6 214.6,331.6 214.6,331.0 215.6,331.0 215.6,332.7 216.6,332.7 216.6,335.6 217.6,335.6 217.6,334.1 218.0,334.1 218.0,322.0" fill="#5a7ea8" />
<rect x="213.20" y="320.80" width="4.80" height="1.40" fill="#5a7ea8" />
<rect x="213.70" y="320.00" width="4.30" height="1.40" fill="#ffffff" opacity="0.5"/>
<rect x="213.70" y="321.40" width="4.30" height="1.10" fill="#000000" opacity="0.5"/>
<rect x="219.20" y="290.80" width="4.70" height="61.00" fill="#aee8ff" />
<polygon points="219.2,290.8 219.2,297.1 219.6,297.1 219.6,304.9 220.6,304.9 220.6,300.8 221.6,300.8 221.6,298.2 222.6,298.2 222.6,296.9 223.6,296.9 223.6,297.3 223.9,297.3 223.9,290.8" fill="#5a7ea8" />
<polygon points="219.2,322.0 219.2,330.6 219.6,330.6 219.6,330.5 220.6,330.5 220.6,330.9 221.6,330.9 221.6,337.8 222.6,337.8 222.6,340.1 223.6,340.1 223.6,339.2 223.9,339.2 223.9,322.0" fill="#5a7ea8" />
<rect x="219.20" y="320.80" width="4.70" height="1.40" fill="#5a7ea8" />
<rect x="219.70" y="320.00" width="4.20" height="1.40" fill="#ffffff" opacity="0.5"/>
<rect x="219.70" y="321.40" width="4.20" height="1.10" fill="#000000" opacity="0.5"/>
<rect x="225.20" y="290.80" width="7.80" height="61.00" fill="#aee8ff" />
<polygon points="225.2,290.8 225.2,298.1 225.6,298.1 225.6,300.8 226.6,300.8 226.6,297.5 227.6,297.5 227.6,296.6 228.6,296.6 228.6,298.8 229.6,298.8 229.6,307.8 230.6,307.8 230.6,297.1 231.6,297.1 231.6,300.9 232.6,300.9 232.6,303.0 233.0,303.0 233.0,290.8" fill="#5a7ea8" />
<polygon points="225.2,322.0 225.2,334.2 225.6,334.2 225.6,335.5 226.6,335.5 226.6,339.5 227.6,339.5 227.6,333.4 228.6,333.4 228.6,344.4 229.6,344.4 229.6,333.7 230.6,333.7 230.6,331.1 231.6,331.1 231.6,334.2 232.6,334.2 232.6,333.2 233.0,333.2 233.0,322.0" fill="#5a7ea8" />
<rect x="225.20" y="320.80" width="7.80" height="1.40" fill="#5a7ea8" />
<rect x="225.70" y="320.00" width="7.30" height="1.40" fill="#ffffff" opacity="0.5"/>
<rect x="225.70" y="321.40" width="7.30" height="1.10" fill="#000000" opacity="0.5"/>
<rect x="234.00" y="290.80" width="6.90" height="61.00" fill="#ff40ff" />
<polygon points="234.0,290.8 234.0,300.3 234.6,300.3 234.6,299.4 235.6,299.4 235.6,298.6 236.6,298.6 236.6,301.5 237.6,301.5 237.6,299.3 238.6,299.3 238.6,309.2 239.6,309.2 239.6,300.4 240.6,300.4 240.6,299.2 240.9,299.2 240.9,290.8" fill="#b020a0" />
<polygon points="234.0,322.0 234.0,333.2 234.6,333.2 234.6,330.9 235.6,330.9 235.6,333.9 236.6,333.9 236.6,335.7 237.6,335.7 237.6,332.0 238.6,332.0 238.6,331.5 239.6,331.5 239.6,331.6 240.6,331.6 240.6,331.2 240.9,331.2 240.9,322.0" fill="#b020a0" />
<rect x="234.00" y="320.80" width="6.90" height="1.40" fill="#b020a0" />
<rect x="234.50" y="320.00" width="6.40" height="1.40" fill="#ffffff" opacity="0.5"/>
<rect x="234.50" y="321.40" width="6.40" height="1.10" fill="#000000" opacity="0.5"/>
<rect x="242.40" y="290.80" width="5.80" height="61.00" fill="#ff40ff" />
<polygon points="242.4,290.8 242.4,304.4 242.6,304.4 242.6,301.4 243.6,301.4 243.6,306.8 244.6,306.8 244.6,305.3 245.6,305.3 245.6,300.3 246.6,300.3 246.6,302.0 247.6,302.0 247.6,299.6 248.2,299.6 248.2,290.8" fill="#b020a0" />
<polygon points="242.4,322.0 242.4,331.3 242.6,331.3 242.6,331.5 243.6,331.5 243.6,331.5 244.6,331.5 244.6,332.7 245.6,332.7 245.6,331.4 246.6,331.4 246.6,333.4 247.6,333.4 247.6,340.1 248.2,340.1 248.2,322.0" fill="#b020a0" />
<rect x="242.40" y="320.80" width="5.80" height="1.40" fill="#b020a0" />
<rect x="242.90" y="320.00" width="5.30" height="1.40" fill="#ffffff" opacity="0.5"/>
<rect x="242.90" y="321.40" width="5.30" height="1.10" fill="#000000" opacity="0.5"/>
<rect x="249.20" y="290.80" width="6.40" height="61.00" fill="#ffff99" />
<polygon points="249.2,290.8 249.2,301.6 249.6,301.6 249.6,302.0 250.6,302.0 250.6,300.4 251.6,300.4 251.6,302.2 252.6,302.2 252.6,302.0 253.6,302.0 253.6,303.0 254.6,303.0 254.6,302.3 255.6,302.3 255.6,290.8" fill="#b8a84a" />
<polygon points="249.2,322.0 249.2,337.1 249.6,337.1 249.6,329.9 250.6,329.9 250.6,329.4 251.6,329.4 251.6,329.7 252.6,329.7 252.6,331.4 253.6,331.4 253.6,330.8 254.6,330.8 254.6,329.2 255.6,329.2 255.6,322.0" fill="#b8a84a" />
<rect x="249.20" y="320.80" width="6.40" height="1.40" fill="#b8a84a" />
<rect x="249.70" y="320.00" width="5.90" height="1.40" fill="#ffffff" opacity="0.5"/>
<rect x="249.70" y="321.40" width="5.90" height="1.10" fill="#000000" opacity="0.5"/>
<rect x="257.20" y="290.80" width="1.40" height="61.00" fill="#ffff99" />
<polygon points="257.2,290.8 257.2,300.4 257.6,300.4 257.6,308.8 258.6,308.8 258.6,290.8" fill="#b8a84a" />
<polygon points="257.2,322.0 257.2,333.6 257.6,333.6 257.6,328.1 258.6,328.1 258.6,322.0" fill="#b8a84a" />
<rect x="257.20" y="320.80" width="1.40" height="1.40" fill="#b8a84a" />
<rect x="257.70" y="320.00" width="0.90" height="1.40" fill="#ffffff" opacity="0.5"/>
<rect x="257.70" y="321.40" width="0.90" height="1.10" fill="#000000" opacity="0.5"/>
<rect x="259.70" y="290.80" width="8.30" height="61.00" fill="#ffff99" />
<polygon points="259.7,290.8 259.7,304.7 260.6,304.7 260.6,304.0 261.6,304.0 261.6,305.4 262.6,305.4 262.6,299.8 263.6,299.8 263.6,301.6 264.6,301.6 264.6,311.2 265.6,311.2 265.6,300.5 266.6,300.5 266.6,299.4 267.6,299.4 267.6,300.5 268.0,300.5 268.0,290.8" fill="#b8a84a" />
<polygon points="259.7,322.0 259.7,329.3 260.6,329.3 260.6,328.7 261.6,328.7 261.6,330.2 262.6,330.2 262.6,332.3 263.6,332.3 263.6,330.8 264.6,330.8 264.6,332.2 265.6,332.2 265.6,331.0 266.6,331.0 266.6,333.3 267.6,333.3 267.6,333.5 268.0,333.5 268.0,322.0" fill="#b8a84a" />
<rect x="259.70" y="320.80" width="8.30" height="1.40" fill="#b8a84a" />
<rect x="260.20" y="320.00" width="7.80" height="1.40" fill="#ffffff" opacity="0.5"/>
<rect x="260.20" y="321.40" width="7.80" height="1.10" fill="#000000" opacity="0.5"/>
<rect x="269.20" y="290.80" width="7.80" height="61.00" fill="#aee8ff" />
<polygon points="269.2,290.8 269.2,301.7 269.6,301.7 269.6,302.5 270.6,302.5 270.6,300.8 271.6,300.8 271.6,302.0 272.6,302.0 272.6,297.9 273.6,297.9 273.6,300.5 274.6,300.5 274.6,301.7 275.6,301.7 275.6,300.5 276.6,300.5 276.6,301.2 277.0,301.2 277.0,290.8" fill="#5a7ea8" />
<polygon points="269.2,322.0 269.2,332.8 269.6,332.8 269.6,332.6 270.6,332.6 270.6,331.6 271.6,331.6 271.6,332.4 272.6,332.4 272.6,332.0 273.6,332.0 273.6,332.1 274.6,332.1 274.6,331.6 275.6,331.6 275.6,343.1 276.6,343.1 276.6,332.6 277.0,332.6 277.0,322.0" fill="#5a7ea8" />
<rect x="269.20" y="320.80" width="7.80" height="1.40" fill="#5a7ea8" />
<rect x="269.70" y="320.00" width="7.30" height="1.40" fill="#ffffff" opacity="0.5"/>
<rect x="269.70" y="321.40" width="7.30" height="1.10" fill="#000000" opacity="0.5"/>
<rect x="278.20" y="290.80" width="10.80" height="61.00" fill="#aee8ff" />
<polygon points="278.2,290.8 278.2,298.3 278.6,298.3 278.6,299.7 279.6,299.7 279.6,297.7 280.6,297.7 280.6,298.1 281.6,298.1 281.6,301.2 282.6,301.2 282.6,299.5 283.6,299.5 283.6,306.9 284.6,306.9 284.6,299.6 285.6,299.6 285.6,300.0 286.6,300.0 286.6,296.9 287.6,296.9 287.6,299.1 288.6,299.1 288.6,297.3 289.0,297.3 289.0,290.8" fill="#5a7ea8" />
<polygon points="278.2,322.0 278.2,333.2 278.6,333.2 278.6,332.2 279.6,332.2 279.6,335.3 280.6,335.3 280.6,330.1 281.6,330.1 281.6,338.9 282.6,338.9 282.6,330.6 283.6,330.6 283.6,334.3 284.6,334.3 284.6,332.7 285.6,332.7 285.6,332.7 286.6,332.7 286.6,335.6 287.6,335.6 287.6,331.8 288.6,331.8 288.6,332.9 289.0,332.9 289.0,322.0" fill="#5a7ea8" />
<rect x="278.20" y="320.80" width="10.80" height="1.40" fill="#5a7ea8" />
<rect x="278.70" y="320.00" width="10.30" height="1.40" fill="#ffffff" opacity="0.5"/>
<rect x="278.70" y="321.40" width="10.30" height="1.10" fill="#000000" opacity="0.5"/>
<rect x="290.20" y="290.80" width="3.00" height="61.00" fill="#aee8ff" />
<polygon points="290.2,290.8 290.2,300.3 290.6,300.3 290.6,297.2 291.6,297.2 291.6,298.4 292.6,298.4 292.6,297.5 293.2,297.5 293.2,290.8" fill="#5a7ea8" />
<polygon points="290.2,322.0 290.2,332.4 290.6,332.4 290.6,329.9 291.6,329.9 291.6,331.7 292.6,331.7 292.6,328.3 293.2,328.3 293.2,322.0" fill="#5a7ea8" />
<rect x="290.20" y="320.80" width="3.00" height="1.40" fill="#5a7ea8" />
<rect x="290.70" y="320.00" width="2.50" height="1.40" fill="#ffffff" opacity="0.5"/>
<rect x="290.70" y="321.40" width="2.50" height="1.10" fill="#000000" opacity="0.5"/>
<rect x="294.10" y="290.80" width="1.60" height="61.00" fill="#ffa8f8" />
<polygon points="294.1,290.8 294.1,298.8 294.6,298.8 294.6,299.0 295.6,299.0 295.6,298.5 295.7,298.5 295.7,290.8" fill="#c0507a" />
<polygon points="294.1,322.0 294.1,327.9 294.6,327.9 294.6,328.3 295.6,328.3 295.6,327.3 295.7,327.3 295.7,322.0" fill="#c0507a" />
<rect x="294.10" y="320.80" width="1.60" height="1.40" fill="#c0507a" />
<rect x="294.60" y="320.00" width="1.10" height="1.40" fill="#ffffff" opacity="0.5"/>
<rect x="294.60" y="321.40" width="1.10" height="1.10" fill="#000000" opacity="0.5"/>
<rect x="296.90" y="290.80" width="5.70" height="61.00" fill="#ffa8f8" />
<polygon points="296.9,290.8 296.9,309.7 297.6,309.7 297.6,300.7 298.6,300.7 298.6,298.9 299.6,298.9 299.6,302.1 300.6,302.1 300.6,298.0 301.6,298.0 301.6,303.0 302.6,303.0 302.6,290.8" fill="#c0507a" />
<polygon points="296.9,322.0 296.9,328.9 297.6,328.9 297.6,329.1 298.6,329.1 298.6,328.7 299.6,328.7 299.6,327.7 300.6,327.7 300.6,328.6 301.6,328.6 301.6,330.1 302.6,330.1 302.6,322.0" fill="#c0507a" />
<rect x="296.90" y="320.80" width="5.70" height="1.40" fill="#c0507a" />
<rect x="297.40" y="320.00" width="5.20" height="1.40" fill="#ffffff" opacity="0.5"/>
<rect x="297.40" y="321.40" width="5.20" height="1.10" fill="#000000" opacity="0.5"/>
<rect x="304.10" y="290.80" width="13.80" height="61.00" fill="#aee8ff" />
<polygon points="304.1,290.8 304.1,302.8 304.6,302.8 304.6,301.8 305.6,301.8 305.6,301.5 306.6,301.5 306.6,300.0 307.6,300.0 307.6,303.9 308.6,303.9 308.6,306.2 309.6,306.2 309.6,306.2 310.6,306.2 310.6,303.2 311.6,303.2 311.6,301.2 312.6,301.2 312.6,303.4 313.6,303.4 313.6,301.9 314.6,301.9 314.6,304.2 315.6,304.2 315.6,303.7 316.6,303.7 316.6,306.7 317.6,306.7 317.6,305.5 317.9,305.5 317.9,290.8" fill="#5a7ea8" />
<polygon points="304.1,322.0 304.1,334.5 304.6,334.5 304.6,340.4 305.6,340.4 305.6,335.5 306.6,335.5 306.6,334.2 307.6,334.2 307.6,335.7 308.6,335.7 308.6,334.0 309.6,334.0 309.6,332.6 310.6,332.6 310.6,333.1 311.6,333.1 311.6,332.0 312.6,332.0 312.6,339.5 313.6,339.5 313.6,334.6 314.6,334.6 314.6,335.2 315.6,335.2 315.6,334.0 316.6,334.0 316.6,335.2 317.6,335.2 317.6,338.0 317.9,338.0 317.9,322.0" fill="#5a7ea8" />
<rect x="304.10" y="320.80" width="13.80" height="1.40" fill="#5a7ea8" />
<rect x="304.60" y="327.00" width="13.30" height="1.10" fill="#c8c8c8" />
<rect x="304.60" y="328.10" width="13.30" height="0.60" fill="#303030" />
<rect x="319.80" y="290.80" width="12.30" height="61.00" fill="#ffa8f8" />
<polygon points="319.8,290.8 319.8,308.4 320.6,308.4 320.6,301.4 321.6,301.4 321.6,302.1 322.6,302.1 322.6,307.0 323.6,307.0 323.6,302.3 324.6,302.3 324.6,312.0 325.6,312.0 325.6,311.4 326.6,311.4 326.6,301.6 327.6,301.6 327.6,302.3 328.6,302.3 328.6,305.5 329.6,305.5 329.6,300.2 330.6,300.2 330.6,300.5 331.6,300.5 331.6,301.4 332.1,301.4 332.1,290.8" fill="#c0507a" />
<polygon points="319.8,322.0 319.8,326.9 320.6,326.9 320.6,328.5 321.6,328.5 321.6,329.3 322.6,329.3 322.6,328.5 323.6,328.5 323.6,328.2 324.6,328.2 324.6,326.4 325.6,326.4 325.6,329.2 326.6,329.2 326.6,327.7 327.6,327.7 327.6,327.6 328.6,327.6 328.6,326.5 329.6,326.5 329.6,326.5 330.6,326.5 330.6,326.9 331.6,326.9 331.6,327.7 332.1,327.7 332.1,322.0" fill="#c0507a" />
<rect x="319.80" y="320.80" width="12.30" height="1.40" fill="#c0507a" />
<rect x="320.30" y="320.00" width="11.80" height="1.40" fill="#ffffff" opacity="0.5"/>
<rect x="320.30" y="321.40" width="11.80" height="1.10" fill="#000000" opacity="0.5"/>
<rect x="333.60" y="290.80" width="8.20" height="61.00" fill="#ffa8f8" />
<polygon points="333.6,290.8 333.6,302.4 334.6,302.4 334.6,300.4 335.6,300.4 335.6,302.0 336.6,302.0 336.6,302.8 337.6,302.8 337.6,301.4 338.6,301.4 338.6,303.3 339.6,303.3 339.6,301.6 340.6,301.6 340.6,299.8 341.6,299.8 341.6,302.6 341.8,302.6 341.8,290.8" fill="#c0507a" />
<polygon points="333.6,322.0 333.6,333.6 334.6,333.6 334.6,328.0 335.6,328.0 335.6,331.5 336.6,331.5 336.6,328.6 337.6,328.6 337.6,331.7 338.6,331.7 338.6,328.4 339.6,328.4 339.6,327.7 340.6,327.7 340.6,335.3 341.6,335.3 341.6,330.6 341.8,330.6 341.8,322.0" fill="#c0507a" />
<rect x="333.60" y="320.80" width="8.20" height="1.40" fill="#c0507a" />
<rect x="334.10" y="320.00" width="7.70" height="1.40" fill="#ffffff" opacity="0.5"/>
<rect x="334.10" y="321.40" width="7.70" height="1.10" fill="#000000" opacity="0.5"/>
<rect x="343.50" y="290.80" width="7.90" height="61.00" fill="#ffa8f8" />
<polygon points="343.5,290.8 343.5,301.1 343.6,301.1 343.6,299.6 344.6,299.6 344.6,305.4 345.6,305.4 345.6,300.1 346.6,300.1 346.6,305.5 347.6,305.5 347.6,302.3 348.6,302.3 348.6,302.7 349.6,302.7 349.6,302.0 350.6,302.0 350.6,306.2 351.4,306.2 351.4,290.8" fill="#c0507a" />
<polygon points="343.5,322.0 343.5,329.0 343.6,329.0 343.6,329.3 344.6,329.3 344.6,329.3 345.6,329.3 345.6,327.2 346.6,327.2 346.6,334.9 347.6,334.9 347.6,330.6 348.6,330.6 348.6,327.9 349.6,327.9 349.6,326.1 350.6,326.1 350.6,326.9 351.4,326.9 351.4,322.0" fill="#c0507a" />
<rect x="343.50" y="320.80" width="7.90" height="1.40" fill="#c0507a" />
<rect x="344.00" y="320.00" width="7.40" height="1.40" fill="#ffffff" opacity="0.5"/>
<rect x="344.00" y="321.40" width="7.40" height="1.10" fill="#000000" opacity="0.5"/>
<rect x="351.90" y="290.80" width="5.40" height="61.00" fill="#aee8ff" />
<polygon points="351.9,290.8 351.9,300.0 352.6,300.0 352.6,306.3 353.6,306.3 353.6,301.4 354.6,301.4 354.6,305.8 355.6,305.8 355.6,301.4 356.6,301.4 356.6,309.8 357.3,309.8 357.3,290.8" fill="#5a7ea8" />
<polygon points="351.9,322.0 351.9,338.0 352.6,338.0 352.6,328.5 353.6,328.5 353.6,327.1 354.6,327.1 354.6,325.9 355.6,325.9 355.6,327.3 356.6,327.3 356.6,327.6 357.3,327.6 357.3,322.0" fill="#5a7ea8" />
<rect x="351.90" y="320.80" width="5.40" height="1.40" fill="#5a7ea8" />
<rect x="352.40" y="320.00" width="4.90" height="1.40" fill="#ffffff" opacity="0.5"/>
<rect x="352.40" y="321.40" width="4.90" height="1.10" fill="#000000" opacity="0.5"/>
<rect x="358.60" y="290.80" width="2.40" height="61.00" fill="#aee8ff" />
<polygon points="358.6,290.8 358.6,313.6 359.6,313.6 359.6,300.7 360.6,300.7 360.6,305.0 361.0,305.0 361.0,290.8" fill="#5a7ea8" />
<polygon points="358.6,322.0 358.6,326.6 359.6,326.6 359.6,330.1 360.6,330.1 360.6,325.9 361.0,325.9 361.0,322.0" fill="#5a7ea8" />
<rect x="358.60" y="320.80" width="2.40" height="1.40" fill="#5a7ea8" />
<rect x="359.10" y="320.00" width="1.90" height="1.40" fill="#ffffff" opacity="0.5"/>
<rect x="359.10" y="321.40" width="1.90" height="1.10" fill="#000000" opacity="0.5"/>
<rect x="362.30" y="290.80" width="3.70" height="61.00" fill="#aee8ff" />
<polygon points="362.3,290.8 362.3,301.0 362.6,301.0 362.6,307.4 363.6,307.4 363.6,304.5 364.6,304.5 364.6,309.4 365.6,309.4 365.6,301.5 366.0,301.5 366.0,290.8" fill="#5a7ea8" />
<polygon points="362.3,322.0 362.3,327.1 362.6,327.1 362.6,327.4 363.6,327.4 363.6,328.3 364.6,328.3 364.6,328.0 365.6,328.0 365.6,331.5 366.0,331.5 366.0,322.0" fill="#5a7ea8" />
<rect x="362.30" y="320.80" width="3.70" height="1.40" fill="#5a7ea8" />
<rect x="362.80" y="320.00" width="3.20" height="1.40" fill="#ffffff" opacity="0.5"/>
<rect x="362.80" y="321.40" width="3.20" height="1.10" fill="#000000" opacity="0.5"/>
<rect x="367.40" y="290.80" width="1.60" height="61.00" fill="#ffa8f8" />
<polygon points="367.4,290.8 367.4,301.2 367.6,301.2 367.6,299.8 368.6,299.8 368.6,302.3 369.0,302.3 369.0,290.8" fill="#c0507a" />
<polygon points="367.4,322.0 367.4,327.0 367.6,327.0 367.6,334.5 368.6,334.5 368.6,330.6 369.0,330.6 369.0,322.0" fill="#c0507a" />
<rect x="367.40" y="320.80" width="1.60" height="1.40" fill="#c0507a" />
<rect x="367.90" y="320.00" width="1.10" height="1.40" fill="#ffffff" opacity="0.5"/>
<rect x="367.90" y="321.40" width="1.10" height="1.10" fill="#000000" opacity="0.5"/>
<rect x="370.50" y="290.80" width="6.30" height="61.00" fill="#ffa8f8" />
<polygon points="370.5,290.8 370.5,300.3 370.6,300.3 370.6,301.8 371.6,301.8 371.6,301.1 372.6,301.1 372.6,304.5 373.6,304.5 373.6,299.9 374.6,299.9 374.6,299.8 375.6,299.8 375.6,300.1 376.6,300.1 376.6,301.4 376.8,301.4 376.8,290.8" fill="#c0507a" />
<polygon points="370.5,322.0 370.5,333.2 370.6,333.2 370.6,328.0 371.6,328.0 371.6,339.7 372.6,339.7 372.6,328.5 373.6,328.5 373.6,329.1 374.6,329.1 374.6,325.9 375.6,325.9 375.6,327.1 376.6,327.1 376.6,328.6 376.8,328.6 376.8,322.0" fill="#c0507a" />
<rect x="370.50" y="320.80" width="6.30" height="1.40" fill="#c0507a" />
<rect x="371.00" y="320.00" width="5.80" height="1.40" fill="#ffffff" opacity="0.5"/>
<rect x="371.00" y="321.40" width="5.80" height="1.10" fill="#000000" opacity="0.5"/>
<rect x="378.00" y="290.80" width="5.70" height="61.00" fill="#ffa8f8" />
<polygon points="378.0,290.8 378.0,300.6 378.6,300.6 378.6,301.3 379.6,301.3 379.6,301.9 380.6,301.9 380.6,302.5 381.6,302.5 381.6,300.6 382.6,300.6 382.6,301.5 383.6,301.5 383.6,302.0 383.7,302.0 383.7,290.8" fill="#c0507a" />
<polygon points="378.0,322.0 378.0,327.2 378.6,327.2 378.6,327.4 379.6,327.4 379.6,328.3 380.6,328.3 380.6,325.8 381.6,325.8 381.6,325.3 382.6,325.3 382.6,329.0 383.6,329.0 383.6,328.9 383.7,328.9 383.7,322.0" fill="#c0507a" />
<rect x="378.00" y="320.80" width="5.70" height="1.40" fill="#c0507a" />
<rect x="378.50" y="320.00" width="5.20" height="1.40" fill="#ffffff" opacity="0.5"/>
<rect x="378.50" y="321.40" width="5.20" height="1.10" fill="#000000" opacity="0.5"/>
<rect x="384.90" y="290.80" width="26.40" height="61.00" fill="#aee8ff" />
<polygon points="384.9,290.8 384.9,300.6 385.6,300.6 385.6,301.3 386.6,301.3 386.6,300.5 387.6,300.5 387.6,308.7 388.6,308.7 388.6,299.3 389.6,299.3 389.6,298.3 390.6,298.3 390.6,299.8 391.6,299.8 391.6,299.5 392.6,299.5 392.6,300.3 393.6,300.3 393.6,298.0 394.6,298.0 394.6,296.6 395.6,296.6 395.6,301.3 396.6,301.3 396.6,302.8 397.6,302.8 397.6,296.8 398.6,296.8 398.6,296.9 399.6,296.9 399.6,296.6 400.6,296.6 400.6,296.7 401.6,296.7 401.6,297.9 402.6,297.9 402.6,300.6 403.6,300.6 403.6,300.7 404.6,300.7 404.6,298.3 405.6,298.3 405.6,298.6 406.6,298.6 406.6,297.8 407.6,297.8 407.6,297.0 408.6,297.0 408.6,297.4 409.6,297.4 409.6,300.7 410.6,300.7 410.6,300.0 411.3,300.0 411.3,290.8" fill="#5a7ea8" />
<polygon points="384.9,322.0 384.9,327.0 385.6,327.0 385.6,325.5 386.6,325.5 386.6,328.0 387.6,328.0 387.6,329.3 388.6,329.3 388.6,328.8 389.6,328.8 389.6,328.9 390.6,328.9 390.6,330.3 391.6,330.3 391.6,328.9 392.6,328.9 392.6,326.9 393.6,326.9 393.6,326.5 394.6,326.5 394.6,331.4 395.6,331.4 395.6,325.4 396.6,325.4 396.6,325.9 397.6,325.9 397.6,327.4 398.6,327.4 398.6,329.3 399.6,329.3 399.6,328.3 400.6,328.3 400.6,337.3 401.6,337.3 401.6,330.2 402.6,330.2 402.6,329.3 403.6,329.3 403.6,333.3 404.6,333.3 404.6,327.1 405.6,327.1 405.6,327.2 406.6,327.2 406.6,329.5 407.6,329.5 407.6,326.1 408.6,326.1 408.6,328.8 409.6,328.8 409.6,326.5 410.6,326.5 410.6,329.1 411.3,329.1 411.3,322.0" fill="#5a7ea8" />
<rect x="384.90" y="320.80" width="26.40" height="1.40" fill="#5a7ea8" />
<rect x="385.40" y="320.00" width="25.90" height="1.40" fill="#ffffff" opacity="0.5"/>
<rect x="385.40" y="321.40" width="25.90" height="1.10" fill="#000000" opacity="0.5"/>
<rect x="412.50" y="290.80" width="1.20" height="61.00" fill="#ffa8f8" />
<polygon points="412.5,290.8 412.5,300.4 412.6,300.4 412.6,309.5 413.6,309.5 413.6,307.8 413.7,307.8 413.7,290.8" fill="#c0507a" />
<polygon points="412.5,322.0 412.5,327.4 412.6,327.4 412.6,328.7 413.6,328.7 413.6,329.1 413.7,329.1 413.7,322.0" fill="#c0507a" />
<rect x="412.50" y="320.80" width="1.20" height="1.40" fill="#c0507a" />
<rect x="415.20" y="290.80" width="8.80" height="61.00" fill="#ffa8f8" />
<polygon points="415.2,290.8 415.2,299.0 415.6,299.0 415.6,309.5 416.6,309.5 416.6,299.4 417.6,299.4 417.6,304.3 418.6,304.3 418.6,299.5 419.6,299.5 419.6,302.8 420.6,302.8 420.6,298.2 421.6,298.2 421.6,296.4 422.6,296.4 422.6,296.4 423.6,296.4 423.6,298.5 424.0,298.5 424.0,290.8" fill="#c0507a" />
<polygon points="415.2,322.0 415.2,328.5 415.6,328.5 415.6,327.8 416.6,327.8 416.6,327.9 417.6,327.9 417.6,328.2 418.6,328.2 418.6,328.9 419.6,328.9 419.6,328.7 420.6,328.7 420.6,329.9 421.6,329.9 421.6,325.7 422.6,325.7 422.6,327.7 423.6,327.7 423.6,328.2 424.0,328.2 424.0,322.0" fill="#c0507a" />
<rect x="415.20" y="320.80" width="8.80" height="1.40" fill="#c0507a" />
<rect x="415.70" y="320.00" width="8.30" height="1.40" fill="#ffffff" opacity="0.5"/>
<rect x="415.70" y="321.40" width="8.30" height="1.10" fill="#000000" opacity="0.5"/>
<rect x="425.50" y="290.80" width="5.50" height="61.00" fill="#ffa8f8" />
<polygon points="425.5,290.8 425.5,296.2 425.6,296.2 425.6,295.0 426.6,295.0 426.6,295.6 427.6,295.6 427.6,295.1 428.6,295.1 428.6,297.1 429.6,297.1 429.6,295.2 430.6,295.2 430.6,296.4 431.0,296.4 431.0,290.8" fill="#c0507a" />
<polygon points="425.5,322.0 425.5,334.2 425.6,334.2 425.6,326.9 426.6,326.9 426.6,329.4 427.6,329.4 427.6,327.7 428.6,327.7 428.6,327.0 429.6,327.0 429.6,326.2 430.6,326.2 430.6,330.1 431.0,330.1 431.0,322.0" fill="#c0507a" />
<rect x="425.50" y="320.80" width="5.50" height="1.40" fill="#c0507a" />
<rect x="426.00" y="320.00" width="5.00" height="1.40" fill="#ffffff" opacity="0.5"/>
<rect x="426.00" y="321.40" width="5.00" height="1.10" fill="#000000" opacity="0.5"/>
<rect x="432.60" y="290.80" width="2.20" height="61.00" fill="#ffa8f8" />
<polygon points="432.6,290.8 432.6,298.2 433.6,298.2 433.6,297.6 434.6,297.6 434.6,297.6 434.8,297.6 434.8,290.8" fill="#c0507a" />
<polygon points="432.6,322.0 432.6,328.8 433.6,328.8 433.6,327.8 434.6,327.8 434.6,326.6 434.8,326.6 434.8,322.0" fill="#c0507a" />
<rect x="432.60" y="320.80" width="2.20" height="1.40" fill="#c0507a" />
<rect x="433.10" y="320.00" width="1.70" height="1.40" fill="#ffffff" opacity="0.5"/>
<rect x="433.10" y="321.40" width="1.70" height="1.10" fill="#000000" opacity="0.5"/>
<rect x="436.00" y="290.80" width="12.00" height="61.00" fill="#aee8ff" />
<polygon points="436.0,290.8 436.0,298.2 436.6,298.2 436.6,301.2 437.6,301.2 437.6,303.2 438.6,303.2 438.6,297.2 439.6,297.2 439.6,298.4 440.6,298.4 440.6,297.4 441.6,297.4 441.6,297.7 442.6,297.7 442.6,295.7 443.6,295.7 443.6,296.6 444.6,296.6 444.6,300.7 445.6,300.7 445.6,294.7 446.6,294.7 446.6,296.3 447.6,296.3 447.6,295.7 448.0,295.7 448.0,290.8" fill="#5a7ea8" />
<polygon points="436.0,322.0 436.0,330.2 436.6,330.2 436.6,328.3 437.6,328.3 437.6,329.3 438.6,329.3 438.6,328.0 439.6,328.0 439.6,327.7 440.6,327.7 440.6,334.9 441.6,334.9 441.6,329.4 442.6,329.4 442.6,328.6 443.6,328.6 443.6,327.8 444.6,327.8 444.6,326.3 445.6,326.3 445.6,328.6 446.6,328.6 446.6,327.2 447.6,327.2 447.6,335.9 448.0,335.9 448.0,322.0" fill="#5a7ea8" />
<rect x="436.00" y="320.80" width="12.00" height="1.40" fill="#5a7ea8" />
<rect x="436.50" y="320.00" width="11.50" height="1.40" fill="#ffffff" opacity="0.5"/>
<rect x="436.50" y="321.40" width="11.50" height="1.10" fill="#000000" opacity="0.5"/>
<rect x="449.20" y="290.80" width="12.80" height="61.00" fill="#ffa8f8" />
<polygon points="449.2,290.8 449.2,295.7 449.6,295.7 449.6,295.6 450.6,295.6 450.6,296.2 451.6,296.2 451.6,296.7 452.6,296.7 452.6,299.1 453.6,299.1 453.6,298.0 454.6,298.0 454.6,299.1 455.6,299.1 455.6,301.7 456.6,301.7 456.6,297.0 457.6,297.0 457.6,305.0 458.6,305.0 458.6,302.2 459.6,302.2 459.6,297.8 460.6,297.8 460.6,299.2 461.6,299.2 461.6,300.4 462.0,300.4 462.0,290.8" fill="#c0507a" />
<polygon points="449.2,322.0 449.2,328.9 449.6,328.9 449.6,328.7 450.6,328.7 450.6,335.9 451.6,335.9 451.6,326.1 452.6,326.1 452.6,329.6 453.6,329.6 453.6,326.9 454.6,326.9 454.6,325.4 455.6,325.4 455.6,326.4 456.6,326.4 456.6,328.2 457.6,328.2 457.6,327.9 458.6,327.9 458.6,329.0 459.6,329.0 459.6,330.0 460.6,330.0 460.6,330.3 461.6,330.3 461.6,326.9 462.0,326.9 462.0,322.0" fill="#c0507a" />
<rect x="449.20" y="320.80" width="12.80" height="1.40" fill="#c0507a" />
<rect x="449.70" y="327.60" width="12.30" height="1.10" fill="#c8c8c8" />
<rect x="449.70" y="328.70" width="12.30" height="0.60" fill="#303030" />
<rect x="463.30" y="290.80" width="4.90" height="61.00" fill="#ffa8f8" />
<polygon points="463.3,290.8 463.3,298.3 463.6,298.3 463.6,299.3 464.6,299.3 464.6,300.5 465.6,300.5 465.6,298.6 466.6,298.6 466.6,297.8 467.6,297.8 467.6,298.9 468.2,298.9 468.2,290.8" fill="#c0507a" />
<polygon points="463.3,322.0 463.3,330.9 463.6,330.9 463.6,328.8 464.6,328.8 464.6,328.3 465.6,328.3 465.6,330.7 466.6,330.7 466.6,327.8 467.6,327.8 467.6,329.2 468.2,329.2 468.2,322.0" fill="#c0507a" />
<rect x="463.30" y="320.80" width="4.90" height="1.40" fill="#c0507a" />
<rect x="463.80" y="328.40" width="4.40" height="1.10" fill="#c8c8c8" />
<rect x="463.80" y="329.50" width="4.40" height="0.60" fill="#303030" />
<rect x="469.60" y="290.80" width="9.20" height="61.00" fill="#aee8ff" />
<polygon points="469.6,290.8 469.6,298.4 470.6,298.4 470.6,296.6 471.6,296.6 471.6,310.5 472.6,310.5 472.6,297.6 473.6,297.6 473.6,300.3 474.6,300.3 474.6,298.8 475.6,298.8 475.6,298.7 476.6,298.7 476.6,301.2 477.6,301.2 477.6,300.6 478.6,300.6 478.6,305.1 478.8,305.1 478.8,290.8" fill="#5a7ea8" />
<polygon points="469.6,322.0 469.6,328.3 470.6,328.3 470.6,328.0 471.6,328.0 471.6,327.2 472.6,327.2 472.6,326.1 473.6,326.1 473.6,326.9 474.6,326.9 474.6,326.8 475.6,326.8 475.6,326.5 476.6,326.5 476.6,331.6 477.6,331.6 477.6,332.1 478.6,332.1 478.6,333.0 478.8,333.0 478.8,322.0" fill="#5a7ea8" />
<rect x="469.60" y="320.80" width="9.20" height="1.40" fill="#5a7ea8" />
<rect x="470.10" y="313.80" width="8.70" height="1.10" fill="#c8c8c8" />
<rect x="470.10" y="314.90" width="8.70" height="0.60" fill="#303030" />
<rect x="480.30" y="290.80" width="15.50" height="61.00" fill="#ffa8f8" />
<polygon points="480.3,290.8 480.3,306.0 480.6,306.0 480.6,302.6 481.6,302.6 481.6,301.0 482.6,301.0 482.6,300.2 483.6,300.2 483.6,299.9 484.6,299.9 484.6,299.1 485.6,299.1 485.6,306.3 486.6,306.3 486.6,300.5 487.6,300.5 487.6,299.4 488.6,299.4 488.6,300.0 489.6,300.0 489.6,301.9 490.6,301.9 490.6,301.4 491.6,301.4 491.6,306.8 492.6,306.8 492.6,300.9 493.6,300.9 493.6,304.7 494.6,304.7 494.6,300.8 495.6,300.8 495.6,299.7 495.8,299.7 495.8,290.8" fill="#c0507a" />
<polygon points="480.3,322.0 480.3,338.2 480.6,338.2 480.6,327.4 481.6,327.4 481.6,331.5 482.6,331.5 482.6,328.8 483.6,328.8 483.6,339.3 484.6,339.3 484.6,331.3 485.6,331.3 485.6,327.8 486.6,327.8 486.6,326.9 487.6,326.9 487.6,338.3 488.6,338.3 488.6,330.2 489.6,330.2 489.6,327.7 490.6,327.7 490.6,333.5 491.6,333.5 491.6,328.6 492.6,328.6 492.6,329.4 493.6,329.4 493.6,329.3 494.6,329.3 494.6,329.1 495.6,329.1 495.6,335.0 495.8,335.0 495.8,322.0" fill="#c0507a" />
<rect x="480.30" y="320.80" width="15.50" height="1.40" fill="#c0507a" />
<rect x="480.80" y="324.00" width="15.00" height="1.10" fill="#c8c8c8" />
<rect x="480.80" y="325.10" width="15.00" height="0.60" fill="#303030" />
<rect x="497.20" y="290.80" width="1.60" height="61.00" fill="#ffa8f8" />
<polygon points="497.2,290.8 497.2,303.3 497.6,303.3 497.6,306.8 498.6,306.8 498.6,298.8 498.8,298.8 498.8,290.8" fill="#c0507a" />
<polygon points="497.2,322.0 497.2,328.2 497.6,328.2 497.6,329.1 498.6,329.1 498.6,337.2 498.8,337.2 498.8,322.0" fill="#c0507a" />
<rect x="497.20" y="320.80" width="1.60" height="1.40" fill="#c0507a" />
<rect x="497.70" y="324.00" width="1.10" height="1.10" fill="#c8c8c8" />
<rect x="497.70" y="325.10" width="1.10" height="0.60" fill="#303030" />
<rect x="500.00" y="290.80" width="2.20" height="61.00" fill="#ffa8f8" />
<polygon points="500.0,290.8 500.0,299.6 500.6,299.6 500.6,298.1 501.6,298.1 501.6,300.4 502.2,300.4 502.2,290.8" fill="#c0507a" />
<polygon points="500.0,322.0 500.0,330.8 500.6,330.8 500.6,328.0 501.6,328.0 501.6,328.3 502.2,328.3 502.2,322.0" fill="#c0507a" />
<rect x="500.00" y="320.80" width="2.20" height="1.40" fill="#c0507a" />
<rect x="500.50" y="324.00" width="1.70" height="1.10" fill="#c8c8c8" />
<rect x="500.50" y="325.10" width="1.70" height="0.60" fill="#303030" />
<rect x="504.60" y="290.80" width="1.20" height="61.00" fill="#aee8ff" />
<polygon points="504.6,290.8 504.6,305.2 505.6,305.2 505.6,298.7 505.8,298.7 505.8,290.8" fill="#5a7ea8" />
<polygon points="504.6,322.0 504.6,329.7 505.6,329.7 505.6,329.6 505.8,329.6 505.8,322.0" fill="#5a7ea8" />
<rect x="504.60" y="320.80" width="1.20" height="1.40" fill="#5a7ea8" />
<rect x="507.10" y="290.80" width="13.90" height="61.00" fill="#aee8ff" />
<polygon points="507.1,290.8 507.1,297.8 507.6,297.8 507.6,294.0 508.6,294.0 508.6,297.5 509.6,297.5 509.6,297.3 510.6,297.3 510.6,304.3 511.6,304.3 511.6,297.3 512.6,297.3 512.6,295.7 513.6,295.7 513.6,296.4 514.6,296.4 514.6,298.3 515.6,298.3 515.6,296.9 516.6,296.9 516.6,300.5 517.6,300.5 517.6,296.8 518.6,296.8 518.6,305.2 519.6,305.2 519.6,296.5 520.6,296.5 520.6,296.1 521.0,296.1 521.0,290.8" fill="#5a7ea8" />
<polygon points="507.1,322.0 507.1,325.9 507.6,325.9 507.6,326.9 508.6,326.9 508.6,327.1 509.6,327.1 509.6,330.0 510.6,330.0 510.6,327.4 511.6,327.4 511.6,327.3 512.6,327.3 512.6,329.7 513.6,329.7 513.6,330.4 514.6,330.4 514.6,327.8 515.6,327.8 515.6,329.3 516.6,329.3 516.6,329.1 517.6,329.1 517.6,328.5 518.6,328.5 518.6,328.2 519.6,328.2 519.6,327.0 520.6,327.0 520.6,339.8 521.0,339.8 521.0,322.0" fill="#5a7ea8" />
<rect x="507.10" y="320.80" width="13.90" height="1.40" fill="#5a7ea8" />
<rect x="507.60" y="320.00" width="13.40" height="1.40" fill="#ffffff" opacity="0.5"/>
<rect x="507.60" y="321.40" width="13.40" height="1.10" fill="#000000" opacity="0.5"/>
<rect x="522.80" y="290.80" width="5.30" height="61.00" fill="#aee8ff" />
<polygon points="522.8,290.8 522.8,300.5 523.6,300.5 523.6,298.3 524.6,298.3 524.6,310.0 525.6,310.0 525.6,298.8 526.6,298.8 526.6,301.9 527.6,301.9 527.6,299.1 528.1,299.1 528.1,290.8" fill="#5a7ea8" />
<polygon points="522.8,322.0 522.8,333.6 523.6,333.6 523.6,334.6 524.6,334.6 524.6,329.4 525.6,329.4 525.6,331.4 526.6,331.4 526.6,333.1 527.6,333.1 527.6,332.7 528.1,332.7 528.1,322.0" fill="#5a7ea8" />
<rect x="522.80" y="320.80" width="5.30" height="1.40" fill="#5a7ea8" />
<rect x="523.30" y="320.00" width="4.80" height="1.40" fill="#ffffff" opacity="0.5"/>
<rect x="523.30" y="321.40" width="4.80" height="1.10" fill="#000000" opacity="0.5"/>
<rect x="528.90" y="290.80" width="2.70" height="61.00" fill="#ffa8f8" />
<polygon points="528.9,290.8 528.9,299.4 529.6,299.4 529.6,298.2 530.6,298.2 530.6,301.3 531.6,301.3 531.6,290.8" fill="#c0507a" />
<polygon points="528.9,322.0 528.9,332.2 529.6,332.2 529.6,333.6 530.6,333.6 530.6,332.2 531.6,332.2 531.6,322.0" fill="#c0507a" />
<rect x="528.90" y="320.80" width="2.70" height="1.40" fill="#c0507a" />
<rect x="529.40" y="320.00" width="2.20" height="1.40" fill="#ffffff" opacity="0.5"/>
<rect x="529.40" y="321.40" width="2.20" height="1.10" fill="#000000" opacity="0.5"/>
<rect x="533.10" y="290.80" width="5.90" height="61.00" fill="#ffa8f8" />
<polygon points="533.1,290.8 533.1,300.2 533.6,300.2 533.6,299.8 534.6,299.8 534.6,300.7 535.6,300.7 535.6,300.0 536.6,300.0 536.6,300.0 537.6,300.0 537.6,298.9 538.6,298.9 538.6,298.8 539.0,298.8 539.0,290.8" fill="#c0507a" />
<polygon points="533.1,322.0 533.1,330.8 533.6,330.8 533.6,331.4 534.6,331.4 534.6,335.3 535.6,335.3 535.6,333.2 536.6,333.2 536.6,331.1 537.6,331.1 537.6,332.0 538.6,332.0 538.6,335.6 539.0,335.6 539.0,322.0" fill="#c0507a" />
<rect x="533.10" y="320.80" width="5.90" height="1.40" fill="#c0507a" />
<rect x="533.60" y="320.00" width="5.40" height="1.40" fill="#ffffff" opacity="0.5"/>
<rect x="533.60" y="321.40" width="5.40" height="1.10" fill="#000000" opacity="0.5"/>
<rect x="541.30" y="290.80" width="4.90" height="61.00" fill="#ffa8f8" />
<polygon points="541.3,290.8 541.3,301.5 541.6,301.5 541.6,300.4 542.6,300.4 542.6,301.2 543.6,301.2 543.6,307.3 544.6,307.3 544.6,299.6 545.6,299.6 545.6,300.5 546.2,300.5 546.2,290.8" fill="#c0507a" />
<polygon points="541.3,322.0 541.3,330.5 541.6,330.5 541.6,331.1 542.6,331.1 542.6,332.0 543.6,332.0 543.6,329.5 544.6,329.5 544.6,330.4 545.6,330.4 545.6,330.2 546.2,330.2 546.2,322.0" fill="#c0507a" />
<rect x="541.30" y="320.80" width="4.90" height="1.40" fill="#c0507a" />
<rect x="541.80" y="320.00" width="4.40" height="1.40" fill="#ffffff" opacity="0.5"/>
<rect x="541.80" y="321.40" width="4.40" height="1.10" fill="#000000" opacity="0.5"/>
<rect x="548.00" y="290.80" width="13.30" height="61.00" fill="#aee8ff" />
<polygon points="548.0,290.8 548.0,299.1 548.6,299.1 548.6,298.0 549.6,298.0 549.6,300.6 550.6,300.6 550.6,305.0 551.6,305.0 551.6,298.0 552.6,298.0 552.6,304.3 553.6,304.3 553.6,301.4 554.6,301.4 554.6,299.4 555.6,299.4 555.6,300.8 556.6,300.8 556.6,299.7 557.6,299.7 557.6,298.9 558.6,298.9 558.6,300.8 559.6,300.8 559.6,308.1 560.6,308.1 560.6,303.3 561.3,303.3 561.3,290.8" fill="#5a7ea8" />
<polygon points="548.0,322.0 548.0,329.9 548.6,329.9 548.6,330.6 549.6,330.6 549.6,340.6 550.6,340.6 550.6,331.6 551.6,331.6 551.6,330.7 552.6,330.7 552.6,333.3 553.6,333.3 553.6,331.5 554.6,331.5 554.6,334.1 555.6,334.1 555.6,333.3 556.6,333.3 556.6,338.4 557.6,338.4 557.6,333.3 558.6,333.3 558.6,332.4 559.6,332.4 559.6,332.8 560.6,332.8 560.6,333.7 561.3,333.7 561.3,322.0" fill="#5a7ea8" />
<rect x="548.00" y="320.80" width="13.30" height="1.40" fill="#5a7ea8" />
<rect x="548.50" y="337.00" width="12.80" height="1.10" fill="#c8c8c8" />
<rect x="548.50" y="338.10" width="12.80" height="0.60" fill="#303030" />
<rect x="562.80" y="290.80" width="2.00" height="61.00" fill="#aee8ff" />
<polygon points="562.8,290.8 562.8,303.0 563.6,303.0 563.6,301.2 564.6,301.2 564.6,300.2 564.8,300.2 564.8,290.8" fill="#5a7ea8" />
<polygon points="562.8,322.0 562.8,333.7 563.6,333.7 563.6,336.2 564.6,336.2 564.6,331.6 564.8,331.6 564.8,322.0" fill="#5a7ea8" />
<rect x="562.80" y="320.80" width="2.00" height="1.40" fill="#5a7ea8" />
<rect x="563.30" y="337.00" width="1.50" height="1.10" fill="#c8c8c8" />
<rect x="563.30" y="338.10" width="1.50" height="0.60" fill="#303030" />
<rect x="566.30" y="290.80" width="3.50" height="61.00" fill="#aee8ff" />
<polygon points="566.3,290.8 566.3,302.5 566.6,302.5 566.6,301.3 567.6,301.3 567.6,301.7 568.6,301.7 568.6,300.3 569.6,300.3 569.6,301.9 569.8,301.9 569.8,290.8" fill="#5a7ea8" />
<polygon points="566.3,322.0 566.3,330.9 566.6,330.9 566.6,330.5 567.6,330.5 567.6,332.6 568.6,332.6 568.6,330.6 569.6,330.6 569.6,329.0 569.8,329.0 569.8,322.0" fill="#5a7ea8" />
<rect x="566.30" y="320.80" width="3.50" height="1.40" fill="#5a7ea8" />
<rect x="566.80" y="337.00" width="3.00" height="1.10" fill="#c8c8c8" />
<rect x="566.80" y="338.10" width="3.00" height="0.60" fill="#303030" />
<rect x="571.30" y="290.80" width="2.80" height="61.00" fill="#aee8ff" />
<polygon points="571.3,290.8 571.3,302.1 571.6,302.1 571.6,301.4 572.6,301.4 572.6,299.9 573.6,299.9 573.6,301.7 574.1,301.7 574.1,290.8" fill="#5a7ea8" />
<polygon points="571.3,322.0 571.3,326.9 571.6,326.9 571.6,328.9 572.6,328.9 572.6,332.2 573.6,332.2 573.6,327.7 574.1,327.7 574.1,322.0" fill="#5a7ea8" />
<rect x="571.30" y="320.80" width="2.80" height="1.40" fill="#5a7ea8" />
<rect x="571.80" y="320.00" width="2.30" height="1.40" fill="#ffffff" opacity="0.5"/>
<rect x="571.80" y="321.40" width="2.30" height="1.10" fill="#000000" opacity="0.5"/>
<rect x="575.10" y="290.80" width="2.80" height="61.00" fill="#ffa8f8" />
<polygon points="575.1,290.8 575.1,301.1 575.6,301.1 575.6,299.0 576.6,299.0 576.6,299.5 577.6,299.5 577.6,301.7 577.9,301.7 577.9,290.8" fill="#c0507a" />
<polygon points="575.1,322.0 575.1,338.3 575.6,338.3 575.6,327.8 576.6,327.8 576.6,328.1 577.6,328.1 577.6,330.5 577.9,330.5 577.9,322.0" fill="#c0507a" />
<rect x="575.10" y="320.80" width="2.80" height="1.40" fill="#c0507a" />
<rect x="575.60" y="320.00" width="2.30" height="1.40" fill="#ffffff" opacity="0.5"/>
<rect x="575.60" y="321.40" width="2.30" height="1.10" fill="#000000" opacity="0.5"/>
<rect x="579.50" y="290.80" width="8.50" height="61.00" fill="#ffa8f8" />
<polygon points="579.5,290.8 579.5,299.1 579.6,299.1 579.6,299.2 580.6,299.2 580.6,300.8 581.6,300.8 581.6,307.1 582.6,307.1 582.6,300.4 583.6,300.4 583.6,301.1 584.6,301.1 584.6,303.2 585.6,303.2 585.6,302.4 586.6,302.4 586.6,307.3 587.6,307.3 587.6,314.9 588.0,314.9 588.0,290.8" fill="#c0507a" />
<polygon points="579.5,322.0 579.5,330.0 579.6,330.0 579.6,329.5 580.6,329.5 580.6,330.6 581.6,330.6 581.6,330.4 582.6,330.4 582.6,335.6 583.6,335.6 583.6,331.3 584.6,331.3 584.6,330.6 585.6,330.6 585.6,330.6 586.6,330.6 586.6,330.7 587.6,330.7 587.6,327.2 588.0,327.2 588.0,322.0" fill="#c0507a" />
<rect x="579.50" y="320.80" width="8.50" height="1.40" fill="#c0507a" />
<rect x="580.00" y="320.00" width="8.00" height="1.40" fill="#ffffff" opacity="0.5"/>
<rect x="580.00" y="321.40" width="8.00" height="1.10" fill="#000000" opacity="0.5"/>
<rect x="589.20" y="290.80" width="2.90" height="61.00" fill="#ffa8f8" />
<polygon points="589.2,290.8 589.2,304.0 589.6,304.0 589.6,310.4 590.6,310.4 590.6,302.5 591.6,302.5 591.6,302.6 592.1,302.6 592.1,290.8" fill="#c0507a" />
<polygon points="589.2,322.0 589.2,326.3 589.6,326.3 589.6,329.0 590.6,329.0 590.6,329.7 591.6,329.7 591.6,329.4 592.1,329.4 592.1,322.0" fill="#c0507a" />
<rect x="589.20" y="320.80" width="2.90" height="1.40" fill="#c0507a" />
<rect x="589.70" y="320.00" width="2.40" height="1.40" fill="#ffffff" opacity="0.5"/>
<rect x="589.70" y="321.40" width="2.40" height="1.10" fill="#000000" opacity="0.5"/>
<rect x="593.00" y="290.80" width="1.60" height="61.00" fill="#aee8ff" />
<polygon points="593.0,290.8 593.0,306.4 593.6,306.4 593.6,306.6 594.6,306.6 594.6,290.8" fill="#5a7ea8" />
<polygon points="593.0,322.0 593.0,329.9 593.6,329.9 593.6,330.5 594.6,330.5 594.6,322.0" fill="#5a7ea8" />
<rect x="593.00" y="320.80" width="1.60" height="1.40" fill="#5a7ea8" />
<rect x="593.50" y="320.00" width="1.10" height="1.40" fill="#ffffff" opacity="0.5"/>
<rect x="593.50" y="321.40" width="1.10" height="1.10" fill="#000000" opacity="0.5"/>
<rect x="596.50" y="290.80" width="9.50" height="61.00" fill="#aee8ff" />
<polygon points="596.5,290.8 596.5,305.7 596.6,305.7 596.6,299.2 597.6,299.2 597.6,301.2 598.6,301.2 598.6,307.6 599.6,307.6 599.6,300.0 600.6,300.0 600.6,306.5 601.6,306.5 601.6,299.1 602.6,299.1 602.6,301.9 603.6,301.9 603.6,298.0 604.6,298.0 604.6,304.6 605.6,304.6 605.6,297.3 606.0,297.3 606.0,290.8" fill="#5a7ea8" />
<polygon points="596.5,322.0 596.5,329.4 596.6,329.4 596.6,331.7 597.6,331.7 597.6,331.5 598.6,331.5 598.6,336.1 599.6,336.1 599.6,329.3 600.6,329.3 600.6,330.4 601.6,330.4 601.6,341.8 602.6,341.8 602.6,337.4 603.6,337.4 603.6,338.6 604.6,338.6 604.6,330.8 605.6,330.8 605.6,331.3 606.0,331.3 606.0,322.0" fill="#5a7ea8" />
<rect x="596.50" y="320.80" width="9.50" height="1.40" fill="#5a7ea8" />
<rect x="597.00" y="320.00" width="9.00" height="1.40" fill="#ffffff" opacity="0.5"/>
<rect x="597.00" y="321.40" width="9.00" height="1.10" fill="#000000" opacity="0.5"/>
<rect x="607.40" y="290.80" width="2.60" height="61.00" fill="#00bfbf" />
<polygon points="607.4,290.8 607.4,300.2 607.6,300.2 607.6,301.5 608.6,301.5 608.6,299.5 609.6,299.5 609.6,298.5 610.0,298.5 610.0,290.8" fill="#006b6b" />
<polygon points="607.4,322.0 607.4,331.1 607.6,331.1 607.6,329.4 608.6,329.4 608.6,331.5 609.6,331.5 609.6,328.6 610.0,328.6 610.0,322.0" fill="#006b6b" />
<rect x="607.40" y="320.80" width="2.60" height="1.40" fill="#006b6b" />
<rect x="607.90" y="320.00" width="2.10" height="1.40" fill="#ffffff" opacity="0.5"/>
<rect x="607.90" y="321.40" width="2.10" height="1.10" fill="#000000" opacity="0.5"/>
<rect x="611.30" y="290.80" width="7.80" height="61.00" fill="#00bfbf" />
<polygon points="611.3,290.8 611.3,299.1 611.6,299.1 611.6,299.3 612.6,299.3 612.6,299.3 613.6,299.3 613.6,299.9 614.6,299.9 614.6,305.0 615.6,305.0 615.6,299.1 616.6,299.1 616.6,301.3 617.6,301.3 617.6,298.3 618.6,298.3 618.6,302.5 619.1,302.5 619.1,290.8" fill="#006b6b" />
<polygon points="611.3,322.0 611.3,328.9 611.6,328.9 611.6,330.3 612.6,330.3 612.6,333.7 613.6,333.7 613.6,329.8 614.6,329.8 614.6,330.5 615.6,330.5 615.6,330.8 616.6,330.8 616.6,327.8 617.6,327.8 617.6,327.4 618.6,327.4 618.6,326.1 619.1,326.1 619.1,322.0" fill="#006b6b" />
<rect x="611.30" y="320.80" width="7.80" height="1.40" fill="#006b6b" />
<rect x="611.80" y="320.00" width="7.30" height="1.40" fill="#ffffff" opacity="0.5"/>
<rect x="611.80" y="321.40" width="7.30" height="1.10" fill="#000000" opacity="0.5"/>
<rect x="620.40" y="290.80" width="1.30" height="61.00" fill="#aee8ff" />
<polygon points="620.4,290.8 620.4,298.1 620.6,298.1 620.6,300.3 621.6,300.3 621.6,299.8 621.7,299.8 621.7,290.8" fill="#5a7ea8" />
<polygon points="620.4,322.0 620.4,338.0 620.6,338.0 620.6,328.6 621.6,328.6 621.6,327.1 621.7,327.1 621.7,322.0" fill="#5a7ea8" />
<rect x="620.40" y="320.80" width="1.30" height="1.40" fill="#5a7ea8" />
<rect x="620.90" y="320.00" width="0.80" height="1.40" fill="#ffffff" opacity="0.5"/>
<rect x="620.90" y="321.40" width="0.80" height="1.10" fill="#000000" opacity="0.5"/>
<rect x="623.30" y="290.80" width="3.40" height="61.00" fill="#aee8ff" />
<polygon points="623.3,290.8 623.3,300.0 623.6,300.0 623.6,304.0 624.6,304.0 624.6,299.4 625.6,299.4 625.6,301.4 626.6,301.4 626.6,306.2 626.7,306.2 626.7,290.8" fill="#5a7ea8" />
<polygon points="623.3,322.0 623.3,325.7 623.6,325.7 623.6,327.6 624.6,327.6 624.6,328.8 625.6,328.8 625.6,330.1 626.6,330.1 626.6,326.1 626.7,326.1 626.7,322.0" fill="#5a7ea8" />
<rect x="623.30" y="320.80" width="3.40" height="1.40" fill="#5a7ea8" />
<rect x="623.80" y="320.00" width="2.90" height="1.40" fill="#ffffff" opacity="0.5"/>
<rect x="623.80" y="321.40" width="2.90" height="1.10" fill="#000000" opacity="0.5"/>
<rect x="628.50" y="290.80" width="6.70" height="61.00" fill="#aee8ff" />
<polygon points="628.5,290.8 628.5,299.7 628.6,299.7 628.6,302.0 629.6,302.0 629.6,305.5 630.6,305.5 630.6,301.7 631.6,301.7 631.6,300.8 632.6,300.8 632.6,297.6 633.6,297.6 633.6,299.8 634.6,299.8 634.6,298.5 635.2,298.5 635.2,290.8" fill="#5a7ea8" />
<polygon points="628.5,322.0 628.5,327.9 628.6,327.9 628.6,326.0 629.6,326.0 629.6,327.6 630.6,327.6 630.6,327.7 631.6,327.7 631.6,332.4 632.6,332.4 632.6,332.8 633.6,332.8 633.6,327.5 634.6,327.5 634.6,327.9 635.2,327.9 635.2,322.0" fill="#5a7ea8" />
<rect x="628.50" y="320.80" width="6.70" height="1.40" fill="#5a7ea8" />
<rect x="629.00" y="320.00" width="6.20" height="1.40" fill="#ffffff" opacity="0.5"/>
<rect x="629.00" y="321.40" width="6.20" height="1.10" fill="#000000" opacity="0.5"/>
<rect x="637.00" y="290.80" width="1.30" height="61.00" fill="#00bfbf" />
<polygon points="637.0,290.8 637.0,302.9 637.6,302.9 637.6,304.1 638.3,304.1 638.3,290.8" fill="#006b6b" />
<polygon points="637.0,322.0 637.0,330.6 637.6,330.6 637.6,330.9 638.3,330.9 638.3,322.0" fill="#006b6b" />
<rect x="637.00" y="320.80" width="1.30" height="1.40" fill="#006b6b" />
<rect x="637.50" y="311.00" width="0.80" height="1.10" fill="#c8c8c8" />
<rect x="637.50" y="312.10" width="0.80" height="0.60" fill="#303030" />
<rect x="639.50" y="290.80" width="4.50" height="61.00" fill="#00bfbf" />
<polygon points="639.5,290.8 639.5,303.3 639.6,303.3 639.6,301.9 640.6,301.9 640.6,300.0 641.6,300.0 641.6,307.9 642.6,307.9 642.6,299.4 643.6,299.4 643.6,301.5 644.0,301.5 644.0,290.8" fill="#006b6b" />
<polygon points="639.5,322.0 639.5,336.9 639.6,336.9 639.6,338.9 640.6,338.9 640.6,330.4 641.6,330.4 641.6,329.0 642.6,329.0 642.6,332.1 643.6,332.1 643.6,328.0 644.0,328.0 644.0,322.0" fill="#006b6b" />
<rect x="639.50" y="320.80" width="4.50" height="1.40" fill="#006b6b" />
<rect x="640.00" y="311.00" width="4.00" height="1.10" fill="#c8c8c8" />
<rect x="640.00" y="312.10" width="4.00" height="0.60" fill="#303030" />
<rect x="645.30" y="290.80" width="1.60" height="61.00" fill="#aee8ff" />
<polygon points="645.3,290.8 645.3,301.5 645.6,301.5 645.6,300.0 646.6,300.0 646.6,309.5 646.9,309.5 646.9,290.8" fill="#5a7ea8" />
<polygon points="645.3,322.0 645.3,327.3 645.6,327.3 645.6,332.0 646.6,332.0 646.6,327.3 646.9,327.3 646.9,322.0" fill="#5a7ea8" />
<rect x="645.30" y="320.80" width="1.60" height="1.40" fill="#5a7ea8" />
<rect x="645.80" y="320.00" width="1.10" height="1.40" fill="#ffffff" opacity="0.5"/>
<rect x="645.80" y="321.40" width="1.10" height="1.10" fill="#000000" opacity="0.5"/>
<rect x="648.40" y="290.80" width="15.50" height="61.00" fill="#aee8ff" />
<polygon points="648.4,290.8 648.4,299.5 648.6,299.5 648.6,299.7 649.6,299.7 649.6,300.3 650.6,300.3 650.6,302.5 651.6,302.5 651.6,300.2 652.6,300.2 652.6,301.9 653.6,301.9 653.6,301.9 654.6,301.9 654.6,300.9 655.6,300.9 655.6,303.0 656.6,303.0 656.6,301.1 657.6,301.1 657.6,300.3 658.6,300.3 658.6,300.1 659.6,300.1 659.6,302.0 660.6,302.0 660.6,302.7 661.6,302.7 661.6,300.3 662.6,300.3 662.6,300.1 663.6,300.1 663.6,300.0 663.9,300.0 663.9,290.8" fill="#5a7ea8" />
<polygon points="648.4,322.0 648.4,327.4 648.6,327.4 648.6,330.8 649.6,330.8 649.6,332.9 650.6,332.9 650.6,331.9 651.6,331.9 651.6,326.4 652.6,326.4 652.6,335.5 653.6,335.5 653.6,342.1 654.6,342.1 654.6,327.2 655.6,327.2 655.6,328.7 656.6,328.7 656.6,330.3 657.6,330.3 657.6,327.3 658.6,327.3 658.6,330.9 659.6,330.9 659.6,329.0 660.6,329.0 660.6,327.6 661.6,327.6 661.6,328.8 662.6,328.8 662.6,326.0 663.6,326.0 663.6,330.1 663.9,330.1 663.9,322.0" fill="#5a7ea8" />
<rect x="648.40" y="320.80" width="15.50" height="1.40" fill="#5a7ea8" />
<rect x="648.90" y="320.00" width="15.00" height="1.40" fill="#ffffff" opacity="0.5"/>
<rect x="648.90" y="321.40" width="15.00" height="1.10" fill="#000000" opacity="0.5"/>
<rect x="665.40" y="290.80" width="6.70" height="61.00" fill="#00bfbf" />
<polygon points="665.4,290.8 665.4,303.0 665.6,303.0 665.6,301.3 666.6,301.3 666.6,301.0 667.6,301.0 667.6,301.0 668.6,301.0 668.6,301.0 669.6,301.0 669.6,303.5 670.6,303.5 670.6,299.2 671.6,299.2 671.6,313.4 672.1,313.4 672.1,290.8" fill="#006b6b" />
<polygon points="665.4,322.0 665.4,334.3 665.6,334.3 665.6,334.3 666.6,334.3 666.6,336.4 667.6,336.4 667.6,335.6 668.6,335.6 668.6,342.3 669.6,342.3 669.6,334.4 670.6,334.4 670.6,334.7 671.6,334.7 671.6,333.5 672.1,333.5 672.1,322.0" fill="#006b6b" />
<rect x="665.40" y="320.80" width="6.70" height="1.40" fill="#006b6b" />
<rect x="665.90" y="320.00" width="6.20" height="1.40" fill="#ffffff" opacity="0.5"/>
<rect x="665.90" y="321.40" width="6.20" height="1.10" fill="#000000" opacity="0.5"/>
<rect x="673.30" y="290.80" width="7.00" height="61.00" fill="#aee8ff" />
<polygon points="673.3,290.8 673.3,310.1 673.6,310.1 673.6,310.3 674.6,310.3 674.6,311.8 675.6,311.8 675.6,311.5 676.6,311.5 676.6,309.5 677.6,309.5 677.6,311.0 678.6,311.0 678.6,310.5 679.6,310.5 679.6,317.1 680.3,317.1 680.3,290.8" fill="#5a7ea8" />
<polygon points="673.3,322.0 673.3,336.5 673.6,336.5 673.6,336.3 674.6,336.3 674.6,336.0 675.6,336.0 675.6,337.0 676.6,337.0 676.6,339.4 677.6,339.4 677.6,337.7 678.6,337.7 678.6,337.7 679.6,337.7 679.6,348.6 680.3,348.6 680.3,322.0" fill="#5a7ea8" />
<rect x="673.30" y="320.80" width="7.00" height="1.40" fill="#5a7ea8" />
<rect x="673.80" y="299.60" width="6.50" height="1.10" fill="#c8c8c8" />
<rect x="673.80" y="300.70" width="6.50" height="0.60" fill="#303030" />
<rect x="681.30" y="290.80" width="1.60" height="61.00" fill="#00bfbf" />
<polygon points="681.3,290.8 681.3,299.5 681.6,299.5 681.6,306.4 682.6,306.4 682.6,305.8 682.9,305.8 682.9,290.8" fill="#006b6b" />
<polygon points="681.3,322.0 681.3,332.3 681.6,332.3 681.6,327.3 682.6,327.3 682.6,336.2 682.9,336.2 682.9,322.0" fill="#006b6b" />
<rect x="681.30" y="320.80" width="1.60" height="1.40" fill="#006b6b" />
<rect x="681.80" y="327.00" width="1.10" height="1.10" fill="#c8c8c8" />
<rect x="681.80" y="328.10" width="1.10" height="0.60" fill="#303030" />
<rect x="684.30" y="290.80" width="14.90" height="61.00" fill="#00bfbf" />
<polygon points="684.3,290.8 684.3,297.3 684.6,297.3 684.6,300.6 685.6,300.6 685.6,304.7 686.6,304.7 686.6,300.0 687.6,300.0 687.6,298.8 688.6,298.8 688.6,303.6 689.6,303.6 689.6,301.5 690.6,301.5 690.6,298.4 691.6,298.4 691.6,301.1 692.6,301.1 692.6,301.9 693.6,301.9 693.6,299.5 694.6,299.5 694.6,302.1 695.6,302.1 695.6,307.3 696.6,307.3 696.6,305.6 697.6,305.6 697.6,305.4 698.6,305.4 698.6,301.9 699.2,301.9 699.2,290.8" fill="#006b6b" />
<polygon points="684.3,322.0 684.3,326.1 684.6,326.1 684.6,328.7 685.6,328.7 685.6,326.4 686.6,326.4 686.6,326.6 687.6,326.6 687.6,328.7 688.6,328.7 688.6,328.2 689.6,328.2 689.6,327.1 690.6,327.1 690.6,327.7 691.6,327.7 691.6,329.7 692.6,329.7 692.6,327.8 693.6,327.8 693.6,333.1 694.6,333.1 694.6,329.8 695.6,329.8 695.6,331.0 696.6,331.0 696.6,331.0 697.6,331.0 697.6,330.0 698.6,330.0 698.6,334.0 699.2,334.0 699.2,322.0" fill="#006b6b" />
<rect x="684.30" y="320.80" width="14.90" height="1.40" fill="#006b6b" />
<rect x="684.80" y="327.00" width="14.40" height="1.10" fill="#c8c8c8" />
<rect x="684.80" y="328.10" width="14.40" height="0.60" fill="#303030" />
<rect x="700.00" y="290.80" width="16.70" height="61.00" fill="#aee8ff" />
<polygon points="700.0,290.8 700.0,305.2 700.6,305.2 700.6,303.5 701.6,303.5 701.6,301.0 702.6,301.0 702.6,301.6 703.6,301.6 703.6,300.9 704.6,300.9 704.6,301.0 705.6,301.0 705.6,303.6 706.6,303.6 706.6,302.8 707.6,302.8 707.6,301.8 708.6,301.8 708.6,300.4 709.6,300.4 709.6,299.7 710.6,299.7 710.6,301.1 711.6,301.1 711.6,306.1 712.6,306.1 712.6,299.4 713.6,299.4 713.6,300.9 714.6,300.9 714.6,303.6 715.6,303.6 715.6,302.1 716.6,302.1 716.6,301.8 716.7,301.8 716.7,290.8" fill="#5a7ea8" />
<polygon points="700.0,322.0 700.0,329.8 700.6,329.8 700.6,330.7 701.6,330.7 701.6,332.4 702.6,332.4 702.6,332.0 703.6,332.0 703.6,330.0 704.6,330.0 704.6,328.8 705.6,328.8 705.6,329.9 706.6,329.9 706.6,331.3 707.6,331.3 707.6,331.8 708.6,331.8 708.6,330.1 709.6,330.1 709.6,333.0 710.6,333.0 710.6,330.7 711.6,330.7 711.6,328.4 712.6,328.4 712.6,328.1 713.6,328.1 713.6,331.5 714.6,331.5 714.6,330.6 715.6,330.6 715.6,334.9 716.6,334.9 716.6,329.0 716.7,329.0 716.7,322.0" fill="#5a7ea8" />
<rect x="700.00" y="320.80" width="16.70" height="1.40" fill="#5a7ea8" />
<rect x="700.50" y="320.00" width="16.20" height="1.40" fill="#ffffff" opacity="0.5"/>
<rect x="700.50" y="321.40" width="16.20" height="1.10" fill="#000000" opacity="0.5"/>
<rect x="718.20" y="290.80" width="9.80" height="61.00" fill="#aee8ff" />
<polygon points="718.2,290.8 718.2,300.7 718.6,300.7 718.6,305.4 719.6,305.4 719.6,298.5 720.6,298.5 720.6,298.3 721.6,298.3 721.6,301.8 722.6,301.8 722.6,299.8 723.6,299.8 723.6,305.4 724.6,305.4 724.6,302.6 725.6,302.6 725.6,304.3 726.6,304.3 726.6,308.7 727.6,308.7 727.6,307.1 728.0,307.1 728.0,290.8" fill="#5a7ea8" />
<polygon points="718.2,322.0 718.2,330.1 718.6,330.1 718.6,328.4 719.6,328.4 719.6,328.2 720.6,328.2 720.6,328.5 721.6,328.5 721.6,326.7 722.6,326.7 722.6,334.4 723.6,334.4 723.6,326.8 724.6,326.8 724.6,327.2 725.6,327.2 725.6,329.7 726.6,329.7 726.6,328.6 727.6,328.6 727.6,326.2 728.0,326.2 728.0,322.0" fill="#5a7ea8" />
<rect x="718.20" y="320.80" width="9.80" height="1.40" fill="#5a7ea8" />
<rect x="718.70" y="320.00" width="9.30" height="1.40" fill="#ffffff" opacity="0.5"/>
<rect x="718.70" y="321.40" width="9.30" height="1.10" fill="#000000" opacity="0.5"/>
<polygon points="498.8,290.8 502.6,290.8 502.6,295.0" fill="#c8c8c8" stroke="#555" stroke-width="0.5"/>
<polygon points="524.7,290.8 528.5,290.8 528.5,295.0" fill="#c8c8c8" stroke="#555" stroke-width="0.5"/>
<polygon points="640.6,290.8 644.4,290.8 644.4,295.0" fill="#c8c8c8" stroke="#555" stroke-width="0.5"/>
<polygon points="660.5,290.8 664.3,290.8 664.3,295.0" fill="#c8c8c8" stroke="#555" stroke-width="0.5"/>
<polygon points="668.7,290.8 672.5,290.8 672.5,295.0" fill="#c8c8c8" stroke="#555" stroke-width="0.5"/>
<polygon points="676.9,290.8 680.7,290.8 680.7,295.0" fill="#c8c8c8" stroke="#555" stroke-width="0.5"/>
<polygon points="695.8,290.8 699.6,290.8 699.6,295.0" fill="#c8c8c8" stroke="#555" stroke-width="0.5"/>
<rect x="125.20" y="294.20" width="10.30" height="9.60" fill="#e6b90a" />
<text x="130.55" y="302.00" font-size="10.4" fill="#0c0c00" font-style="italic" text-anchor="middle" stroke="#0c0c00" stroke-width="0.25">fx</text>
<rect x="395.20" y="294.20" width="10.30" height="9.60" fill="#8a8a8a" />
<text x="400.55" y="302.00" font-size="10.4" fill="#1a1a1a" font-style="italic" text-anchor="middle" stroke="#1a1a1a" stroke-width="0.25">fx</text>
<rect x="730.30" y="236.00" width="2.70" height="116.50" fill="#343434" />
<rect x="24.60" y="352.70" width="708.40" height="23.00" fill="#3e3e3e" />
<rect x="24.70" y="377.00" width="707.30" height="109.20" fill="#145a48" />
<rect x="24.70" y="377.00" width="288.10" height="54.20" fill="#1f9d76" />
<rect x="24.70" y="432.60" width="288.10" height="53.40" fill="#1f9d76" />
<polygon points="24.7,431.2 24.7,387.0 25.3,383.7 25.9,404.3 26.5,387.6 27.1,385.9 27.7,386.7 28.3,385.9 28.9,386.7 29.5,382.7 30.1,388.6 30.7,383.5 31.3,383.1 31.9,385.4 32.5,387.4 33.1,384.5 33.7,385.1 34.3,385.0 34.9,386.0 35.5,383.4 36.1,386.7 36.7,384.0 37.3,385.3 37.9,384.3 38.5,383.8 39.1,388.0 39.7,386.5 40.3,383.9 40.9,394.1 41.5,384.1 42.1,382.9 42.7,384.8 43.3,385.2 43.9,402.2 44.5,383.5 45.1,379.5 45.7,385.4 46.3,385.9 46.9,393.0 47.5,383.1 48.1,386.3 48.7,387.5 49.3,387.1 49.9,383.1 50.5,384.2 51.1,384.9 51.7,383.9 52.3,386.1 52.9,378.6 53.5,419.4 54.1,384.7 54.7,386.6 55.3,387.9 55.9,387.3 56.5,393.8 57.1,400.8 57.7,403.1 58.3,410.4 58.9,409.0 59.5,403.6 60.1,405.5 60.7,404.8 61.3,411.3 61.9,416.2 62.5,408.4 63.1,406.3 63.7,409.7 64.3,411.4 64.9,418.3 65.5,407.4 66.1,410.4 66.7,407.5 67.3,406.3 67.9,418.1 68.5,411.9 69.1,409.2 69.7,412.0 70.3,407.3 70.9,412.2 71.5,406.7 72.1,402.2 72.7,411.1 73.3,412.5 73.9,413.9 74.5,410.8 75.1,408.5 75.7,406.7 76.3,408.1 76.9,407.1 77.5,412.3 78.1,411.3 78.7,406.7 79.3,396.3 79.9,406.1 80.5,394.3 81.1,392.0 81.7,399.2 82.3,400.2 82.9,400.7 83.5,401.5 84.1,398.6 84.7,405.1 85.3,401.1 85.9,398.4 86.5,407.0 87.1,406.6 87.7,406.6 88.3,410.3 88.9,411.0 89.5,406.2 90.1,410.6 90.7,410.6 91.3,408.2 91.9,409.4 92.5,408.7 93.1,405.7 93.7,404.9 94.3,407.6 94.9,407.9 95.5,401.5 96.1,403.4 96.7,406.9 97.3,406.2 97.9,404.5 98.5,403.9 99.1,403.8 99.7,402.7 100.3,405.6 100.9,396.9 101.5,402.0 102.1,403.1 102.7,406.9 103.3,403.7 103.9,404.5 104.5,403.2 105.1,396.3 105.7,403.3 106.3,408.7 106.9,405.8 107.5,407.0 108.1,405.7 108.7,402.7 109.3,395.7 109.9,393.9 110.5,391.7 111.1,392.2 111.7,385.1 112.3,393.3 112.9,394.2 113.5,393.1 114.1,392.5 114.7,392.7 115.3,391.5 115.9,395.1 116.5,394.4 117.1,389.6 117.7,399.8 118.3,390.2 118.9,391.8 119.5,392.6 120.1,392.0 120.7,389.9 121.3,393.2 121.9,381.9 122.5,393.3 123.1,387.8 123.7,389.0 124.3,398.7 124.9,387.0 125.5,390.2 126.1,390.1 126.7,389.4 127.3,389.4 127.9,388.3 128.5,386.7 129.1,387.0 129.7,388.2 130.3,387.7 130.9,383.2 131.5,387.1 132.1,393.4 132.7,385.5 133.3,384.7 133.9,384.8 134.5,383.7 135.1,384.0 135.7,386.9 136.3,383.7 136.9,384.0 137.5,385.7 138.1,383.6 138.7,385.4 139.3,394.4 139.9,386.7 140.5,388.0 141.1,388.6 141.7,388.7 142.3,388.5 142.9,385.9 143.5,383.7 144.1,384.3 144.7,386.4 145.3,386.4 145.9,385.2 146.5,386.6 147.1,388.3 147.7,385.6 148.3,384.1 148.9,384.2 149.5,388.5 150.1,387.7 150.7,390.3 151.3,387.6 151.9,390.0 152.5,387.2 153.1,386.7 153.7,388.2 154.3,386.8 154.9,387.2 155.5,380.0 156.1,378.6 156.7,387.4 157.3,384.8 157.9,397.8 158.5,390.4 159.1,386.3 159.7,386.0 160.3,380.7 160.9,384.1 161.5,392.9 162.1,388.4 162.7,391.7 163.3,392.6 163.9,400.0 164.5,399.2 165.1,402.8 165.7,403.6 166.3,414.4 166.9,403.0 167.5,412.6 168.1,410.9 168.7,414.7 169.3,415.5 169.9,410.7 170.5,413.1 171.1,414.4 171.7,405.6 172.3,413.4 172.9,412.5 173.5,418.9 174.1,415.6 174.7,413.9 175.3,414.5 175.9,407.8 176.5,415.6 177.1,418.4 177.7,414.8 178.3,415.6 178.9,414.1 179.5,414.8 180.1,426.0 180.7,426.9 181.3,416.3 181.9,416.7 182.5,417.3 183.1,416.2 183.7,413.9 184.3,417.6 184.9,418.0 185.5,417.2 186.1,415.5 186.7,414.6 187.3,409.1 187.9,416.9 188.5,414.7 189.1,416.6 189.7,414.7 190.3,416.7 190.9,412.5 191.5,414.6 192.1,416.1 192.7,409.4 193.3,413.6 193.9,412.1 194.5,415.8 195.1,414.8 195.7,408.1 196.3,417.5 196.9,412.4 197.5,414.6 198.1,412.4 198.7,411.8 199.3,417.1 199.9,416.6 200.5,412.2 201.1,414.5 201.7,415.3 202.3,406.3 202.9,412.3 203.5,415.0 204.1,413.7 204.7,414.7 205.3,414.1 205.9,415.6 206.5,411.8 207.1,413.3 207.7,416.5 208.3,416.3 208.9,416.7 209.5,411.6 210.1,413.0 210.7,412.7 211.3,415.4 211.9,416.4 212.5,414.0 213.1,415.9 213.7,416.1 214.3,412.3 214.9,415.1 215.5,416.0 216.1,415.2 216.7,415.2 217.3,414.4 217.9,414.6 218.5,416.7 219.1,412.1 219.7,414.2 220.3,408.1 220.9,413.9 221.5,414.0 222.1,413.2 222.7,414.0 223.3,413.2 223.9,420.2 224.5,410.8 225.1,409.3 225.7,403.8 226.3,404.7 226.9,402.6 227.5,399.6 228.1,400.0 228.7,402.7 229.3,410.4 229.9,398.7 230.5,393.5 231.1,398.9 231.7,403.3 232.3,400.3 232.9,400.0 233.5,401.7 234.1,403.7 234.7,400.9 235.3,401.4 235.9,408.2 236.5,400.6 237.1,404.6 237.7,402.8 238.3,400.5 238.9,402.3 239.5,400.4 240.1,404.0 240.7,401.2 241.3,404.1 241.9,405.5 242.5,401.2 243.1,400.8 243.7,405.9 244.3,401.7 244.9,405.2 245.5,401.0 246.1,401.1 246.7,403.4 247.3,412.9 247.9,406.1 248.5,407.0 249.1,403.0 249.7,403.3 250.3,403.4 250.9,404.5 251.5,404.4 252.1,404.1 252.7,405.8 253.3,406.1 253.9,406.8 254.5,398.8 255.1,403.0 255.7,402.4 256.3,406.4 256.9,405.8 257.5,406.9 258.1,405.9 258.7,404.3 259.3,399.9 259.9,405.2 260.5,406.3 261.1,405.7 261.7,402.1 262.3,406.0 262.9,404.2 263.5,402.7 264.1,405.5 264.7,411.3 265.3,404.4 265.9,404.3 266.5,404.4 267.1,401.1 267.7,410.1 268.3,399.9 268.9,398.4 269.5,408.8 270.1,399.2 270.7,401.9 271.3,397.5 271.9,398.8 272.5,397.1 273.1,389.5 273.7,402.3 274.3,401.1 274.9,397.0 275.5,398.6 276.1,401.3 276.7,393.9 277.3,396.5 277.9,392.3 278.5,389.3 279.1,391.6 279.7,390.8 280.3,390.1 280.9,391.7 281.5,392.9 282.1,396.0 282.7,395.5 283.3,397.0 283.9,396.3 284.5,397.0 285.1,395.0 285.7,399.8 286.3,396.3 286.9,385.8 287.5,394.0 288.1,397.3 288.7,397.8 289.3,395.3 289.9,397.4 290.5,395.2 291.1,394.3 291.7,398.0 292.3,396.0 292.9,396.8 293.5,396.3 294.1,392.2 294.7,391.8 295.3,388.3 295.9,394.4 296.5,391.6 297.1,392.4 297.7,392.0 298.3,392.4 298.9,394.4 299.5,392.3 300.1,382.6 300.7,400.8 301.3,392.1 301.9,393.6 302.5,389.0 303.1,390.8 303.7,391.1 304.3,387.4 304.9,395.4 305.5,382.1 306.1,384.0 306.7,380.2 307.3,381.5 307.9,379.8 308.5,382.4 309.1,383.0 309.7,384.7 310.3,383.7 310.9,385.2 311.5,378.6 312.1,392.6 312.7,401.4 312.8,431.2" fill="#3dffe3" />
<polygon points="24.7,486.0 24.7,439.8 25.3,439.3 25.9,440.1 26.5,440.1 27.1,439.0 27.7,456.7 28.3,436.2 28.9,444.8 29.5,435.2 30.1,439.6 30.7,435.7 31.3,437.1 31.9,436.9 32.5,434.6 33.1,462.3 33.7,435.1 34.3,435.6 34.9,460.1 35.5,459.5 36.1,439.8 36.7,436.0 37.3,434.2 37.9,436.2 38.5,434.2 39.1,440.2 39.7,435.5 40.3,452.5 40.9,434.2 41.5,440.5 42.1,437.6 42.7,434.2 43.3,434.2 43.9,464.5 44.5,446.5 45.1,435.7 45.7,438.4 46.3,439.4 46.9,439.9 47.5,440.6 48.1,438.3 48.7,435.2 49.3,442.3 49.9,434.2 50.5,434.2 51.1,440.7 51.7,435.4 52.3,434.2 52.9,440.2 53.5,436.4 54.1,436.3 54.7,439.0 55.3,440.2 55.9,438.8 56.5,446.1 57.1,447.9 57.7,457.0 58.3,451.6 58.9,458.9 59.5,458.9 60.1,460.8 60.7,460.3 61.3,459.9 61.9,460.9 62.5,462.9 63.1,460.6 63.7,458.0 64.3,459.5 64.9,462.4 65.5,462.1 66.1,458.2 66.7,459.3 67.3,461.5 67.9,460.3 68.5,461.6 69.1,455.8 69.7,460.4 70.3,463.3 70.9,471.9 71.5,458.9 72.1,463.4 72.7,460.5 73.3,460.5 73.9,462.5 74.5,461.8 75.1,462.4 75.7,463.2 76.3,458.2 76.9,468.5 77.5,459.3 78.1,460.5 78.7,461.1 79.3,459.3 79.9,457.9 80.5,454.0 81.1,459.6 81.7,463.1 82.3,452.1 82.9,453.3 83.5,454.0 84.1,452.1 84.7,451.4 85.3,455.6 85.9,455.0 86.5,456.8 87.1,455.7 87.7,467.3 88.3,452.6 88.9,457.6 89.5,463.8 90.1,462.6 90.7,463.8 91.3,458.8 91.9,460.8 92.5,462.0 93.1,461.9 93.7,450.6 94.3,457.4 94.9,455.8 95.5,456.3 96.1,456.0 96.7,460.0 97.3,457.1 97.9,459.2 98.5,456.0 99.1,457.6 99.7,457.7 100.3,454.1 100.9,452.6 101.5,453.7 102.1,465.3 102.7,454.5 103.3,454.5 103.9,457.7 104.5,454.2 105.1,455.6 105.7,458.9 106.3,460.2 106.9,456.8 107.5,461.9 108.1,450.0 108.7,466.4 109.3,450.8 109.9,448.9 110.5,446.5 111.1,448.2 111.7,444.6 112.3,445.0 112.9,449.3 113.5,444.5 114.1,445.0 114.7,446.9 115.3,442.0 115.9,437.4 116.5,443.3 117.1,444.5 117.7,443.5 118.3,441.0 118.9,441.6 119.5,442.8 120.1,455.0 120.7,439.3 121.3,443.6 121.9,444.1 122.5,443.4 123.1,443.0 123.7,440.4 124.3,442.6 124.9,443.2 125.5,442.9 126.1,441.7 126.7,443.5 127.3,438.6 127.9,443.5 128.5,441.7 129.1,441.6 129.7,438.4 130.3,435.0 130.9,441.1 131.5,438.5 132.1,440.3 132.7,439.2 133.3,441.7 133.9,438.7 134.5,436.9 135.1,438.1 135.7,438.9 136.3,436.6 136.9,445.2 137.5,440.0 138.1,437.1 138.7,440.9 139.3,440.8 139.9,438.2 140.5,436.4 141.1,439.0 141.7,436.0 142.3,448.7 142.9,446.9 143.5,439.0 144.1,441.4 144.7,437.6 145.3,439.9 145.9,449.1 146.5,439.9 147.1,437.7 147.7,440.1 148.3,437.6 148.9,441.3 149.5,440.5 150.1,437.9 150.7,440.5 151.3,440.5 151.9,439.0 152.5,441.6 153.1,437.6 153.7,442.4 154.3,438.9 154.9,438.6 155.5,442.5 156.1,436.9 156.7,440.8 157.3,440.4 157.9,442.8 158.5,436.5 159.1,438.0 159.7,439.7 160.3,443.2 160.9,442.2 161.5,444.9 162.1,441.5 162.7,445.2 163.3,445.2 163.9,448.8 164.5,451.2 165.1,456.4 165.7,468.7 166.3,461.2 166.9,455.9 167.5,464.2 168.1,466.1 168.7,461.4 169.3,463.2 169.9,464.3 170.5,465.8 171.1,466.1 171.7,468.7 172.3,467.9 172.9,465.3 173.5,466.2 174.1,469.7 174.7,469.3 175.3,467.9 175.9,466.6 176.5,469.7 177.1,470.5 177.7,467.5 178.3,465.1 178.9,466.4 179.5,478.4 180.1,470.0 180.7,468.0 181.3,470.0 181.9,468.8 182.5,464.9 183.1,467.5 183.7,466.1 184.3,464.8 184.9,466.2 185.5,468.6 186.1,465.2 186.7,464.6 187.3,461.6 187.9,468.3 188.5,469.3 189.1,464.2 189.7,465.9 190.3,468.8 190.9,467.4 191.5,468.3 192.1,466.9 192.7,466.4 193.3,464.3 193.9,468.2 194.5,468.4 195.1,469.0 195.7,467.7 196.3,473.8 196.9,466.4 197.5,460.4 198.1,468.4 198.7,465.4 199.3,465.4 199.9,468.2 200.5,466.9 201.1,467.4 201.7,468.5 202.3,465.4 202.9,463.7 203.5,467.2 204.1,463.1 204.7,459.7 205.3,470.1 205.9,458.7 206.5,466.1 207.1,467.2 207.7,468.7 208.3,466.5 208.9,465.8 209.5,465.5 210.1,464.4 210.7,468.6 211.3,463.5 211.9,468.2 212.5,469.8 213.1,467.7 213.7,468.0 214.3,477.5 214.9,464.8 215.5,464.0 216.1,458.3 216.7,468.5 217.3,467.4 217.9,465.6 218.5,468.8 219.1,463.9 219.7,463.9 220.3,464.7 220.9,466.6 221.5,464.0 222.1,468.9 222.7,466.4 223.3,464.6 223.9,463.7 224.5,462.9 225.1,462.6 225.7,456.5 226.3,457.4 226.9,453.2 227.5,452.6 228.1,446.2 228.7,446.2 229.3,452.3 229.9,452.2 230.5,450.0 231.1,454.8 231.7,452.1 232.3,454.3 232.9,455.8 233.5,465.6 234.1,454.6 234.7,454.6 235.3,450.8 235.9,451.8 236.5,451.5 237.1,448.0 237.7,453.2 238.3,454.5 238.9,454.1 239.5,454.9 240.1,448.0 240.7,453.2 241.3,456.5 241.9,455.6 242.5,452.4 243.1,453.9 243.7,456.4 244.3,452.6 244.9,452.8 245.5,456.3 246.1,455.4 246.7,455.9 247.3,456.1 247.9,456.2 248.5,455.7 249.1,459.2 249.7,456.2 250.3,455.8 250.9,456.8 251.5,470.3 252.1,454.6 252.7,450.1 253.3,459.9 253.9,455.5 254.5,457.6 255.1,458.0 255.7,453.8 256.3,458.9 256.9,447.2 257.5,458.4 258.1,453.4 258.7,453.7 259.3,458.0 259.9,457.0 260.5,455.1 261.1,456.7 261.7,453.2 262.3,453.0 262.9,446.4 263.5,454.0 264.1,453.5 264.7,456.9 265.3,456.5 265.9,456.6 266.5,446.3 267.1,455.6 267.7,451.6 268.3,455.1 268.9,453.2 269.5,450.8 270.1,454.7 270.7,446.5 271.3,451.0 271.9,449.6 272.5,452.4 273.1,445.2 273.7,452.0 274.3,453.7 274.9,450.2 275.5,459.4 276.1,453.2 276.7,460.1 277.3,449.1 277.9,444.1 278.5,442.5 279.1,439.2 279.7,441.7 280.3,444.1 280.9,447.8 281.5,446.1 282.1,448.6 282.7,451.4 283.3,452.8 283.9,450.6 284.5,443.2 285.1,448.6 285.7,450.6 286.3,438.9 286.9,450.1 287.5,446.5 288.1,445.7 288.7,446.4 289.3,448.9 289.9,456.5 290.5,446.5 291.1,449.0 291.7,443.7 292.3,445.4 292.9,439.9 293.5,446.6 294.1,440.1 294.7,446.8 295.3,449.1 295.9,450.6 296.5,446.1 297.1,442.3 297.7,442.9 298.3,438.9 298.9,442.6 299.5,442.2 300.1,444.0 300.7,444.6 301.3,441.5 301.9,442.5 302.5,441.2 303.1,444.0 303.7,443.2 304.3,437.9 304.9,436.1 305.5,439.4 306.1,440.6 306.7,434.2 307.3,441.0 307.9,434.2 308.5,434.2 309.1,434.2 309.7,434.2 310.3,437.5 310.9,434.2 311.5,438.4 312.1,439.4 312.7,450.0 312.8,486.0" fill="#3dffe3" />
<rect x="24.70" y="469.20" width="288.10" height="1.10" fill="#e6e6e6" />
<rect x="24.70" y="470.30" width="288.10" height="0.60" fill="#5ab8a6" />
<rect x="26.10" y="414.20" width="10.20" height="13.40" fill="#1b7b6f" />
<text x="30.90" y="423.40" font-size="8.8" fill="#9cbcb4" text-anchor="middle">L</text>
<rect x="26.10" y="470.90" width="10.80" height="12.30" fill="#1b7b6f" />
<text x="31.10" y="479.90" font-size="8.8" fill="#9cbcb4" text-anchor="middle">R</text>
<rect x="314.40" y="377.00" width="77.80" height="54.20" fill="#1f9d76" />
<rect x="314.40" y="432.60" width="77.80" height="53.40" fill="#1f9d76" />
<polygon points="314.4,431.2 314.4,391.4 315.0,389.0 315.6,392.4 316.2,394.4 316.8,394.4 317.4,395.4 318.0,396.7 318.6,397.0 319.2,395.9 319.8,396.6 320.4,396.5 321.0,396.7 321.6,398.9 322.2,395.8 322.8,394.9 323.4,398.3 324.0,398.4 324.6,401.1 325.2,398.3 325.8,401.7 326.4,402.1 327.0,397.8 327.6,411.9 328.2,398.8 328.8,399.6 329.4,400.8 330.0,402.2 330.6,400.2 331.2,401.6 331.8,402.6 332.4,399.7 333.0,404.4 333.6,400.7 334.2,406.4 334.8,400.9 335.4,400.5 336.0,412.3 336.6,401.0 337.2,406.0 337.8,402.5 338.4,406.5 339.0,393.8 339.6,405.7 340.2,406.7 340.8,401.9 341.4,406.7 342.0,395.5 342.6,402.1 343.2,403.8 343.8,405.7 344.4,403.2 345.0,403.9 345.6,401.5 346.2,403.0 346.8,400.6 347.4,411.8 348.0,404.9 348.6,404.2 349.2,402.8 349.8,404.6 350.4,412.0 351.0,404.9 351.6,402.3 352.2,404.1 352.8,401.9 353.4,400.7 354.0,404.0 354.6,405.0 355.2,400.9 355.8,403.7 356.4,395.8 357.0,403.7 357.6,412.7 358.2,394.4 358.8,404.7 359.4,402.2 360.0,401.5 360.6,411.7 361.2,403.8 361.8,404.9 362.4,397.6 363.0,415.2 363.6,403.0 364.2,401.1 364.8,406.3 365.4,403.5 366.0,401.1 366.6,405.3 367.2,401.1 367.8,401.1 368.4,403.3 369.0,410.6 369.6,403.1 370.2,400.9 370.8,400.9 371.4,401.7 372.0,403.8 372.6,405.2 373.2,402.7 373.8,414.5 374.4,401.6 375.0,401.5 375.6,406.9 376.2,401.8 376.8,411.6 377.4,404.6 378.0,402.0 378.6,402.8 379.2,402.7 379.8,396.2 380.4,406.5 381.0,403.2 381.6,403.0 382.2,402.2 382.8,403.2 383.4,395.0 384.0,406.1 384.6,404.3 385.2,406.1 385.8,403.3 386.4,405.4 387.0,401.1 387.6,404.9 388.2,401.1 388.8,404.2 389.4,401.3 390.0,403.8 390.6,400.9 391.2,402.4 391.8,402.7 392.2,431.2" fill="#3dffe3" />
<polygon points="314.4,486.0 314.4,446.6 315.0,446.9 315.6,442.9 316.2,445.0 316.8,445.6 317.4,453.7 318.0,446.4 318.6,448.4 319.2,449.0 319.8,449.2 320.4,449.9 321.0,441.3 321.6,451.2 322.2,449.5 322.8,447.8 323.4,448.6 324.0,452.3 324.6,450.1 325.2,448.4 325.8,451.4 326.4,451.7 327.0,454.4 327.6,449.9 328.2,452.2 328.8,452.0 329.4,451.7 330.0,455.0 330.6,451.8 331.2,453.0 331.8,448.7 332.4,451.7 333.0,452.5 333.6,457.0 334.2,450.6 334.8,454.7 335.4,452.7 336.0,453.4 336.6,452.7 337.2,457.5 337.8,457.9 338.4,453.6 339.0,450.4 339.6,454.1 340.2,457.3 340.8,449.0 341.4,458.3 342.0,454.7 342.6,453.4 343.2,455.6 343.8,457.7 344.4,458.8 345.0,455.9 345.6,455.8 346.2,458.0 346.8,455.2 347.4,454.2 348.0,451.1 348.6,463.9 349.2,455.6 349.8,456.0 350.4,458.7 351.0,454.6 351.6,467.6 352.2,454.7 352.8,466.0 353.4,458.0 354.0,458.4 354.6,455.3 355.2,458.4 355.8,456.5 356.4,452.2 357.0,456.8 357.6,456.6 358.2,453.8 358.8,455.7 359.4,455.2 360.0,456.4 360.6,457.9 361.2,451.3 361.8,458.0 362.4,455.1 363.0,457.5 363.6,453.8 364.2,455.8 364.8,457.8 365.4,453.2 366.0,446.6 366.6,454.3 367.2,457.2 367.8,456.6 368.4,456.8 369.0,454.6 369.6,454.5 370.2,454.5 370.8,458.1 371.4,454.4 372.0,457.5 372.6,454.7 373.2,454.9 373.8,445.1 374.4,460.2 375.0,456.8 375.6,455.6 376.2,454.1 376.8,455.6 377.4,459.1 378.0,456.4 378.6,454.0 379.2,458.4 379.8,454.3 380.4,452.8 381.0,457.7 381.6,454.6 382.2,455.6 382.8,461.9 383.4,456.9 384.0,456.1 384.6,453.5 385.2,456.2 385.8,449.9 386.4,458.0 387.0,453.2 387.6,454.5 388.2,457.2 388.8,452.7 389.4,452.5 390.0,457.5 390.6,451.6 391.2,450.4 391.8,455.7 392.2,486.0" fill="#3dffe3" />
<rect x="314.40" y="467.40" width="77.80" height="1.10" fill="#e6e6e6" />
<rect x="314.40" y="468.50" width="77.80" height="0.60" fill="#5ab8a6" />
<rect x="315.80" y="414.20" width="10.20" height="13.40" fill="#1b7b6f" />
<text x="320.60" y="423.40" font-size="8.8" fill="#9cbcb4" text-anchor="middle">L</text>
<rect x="315.80" y="470.90" width="10.80" height="12.30" fill="#1b7b6f" />
<text x="320.80" y="479.90" font-size="8.8" fill="#9cbcb4" text-anchor="middle">R</text>
<rect x="393.80" y="377.00" width="160.40" height="54.20" fill="#1f9d76" />
<rect x="393.80" y="432.60" width="160.40" height="53.40" fill="#1f9d76" />
<polygon points="393.8,431.2 393.8,406.3 394.4,406.3 395.0,403.7 395.6,403.6 396.2,407.0 396.8,403.5 397.4,402.0 398.0,404.9 398.6,406.4 399.2,403.0 399.8,404.5 400.4,405.8 401.0,406.2 401.6,403.3 402.2,400.8 402.8,402.9 403.4,402.5 404.0,404.6 404.6,405.9 405.2,403.4 405.8,404.3 406.4,404.2 407.0,401.5 407.6,403.0 408.2,401.1 408.8,403.0 409.4,402.6 410.0,402.3 410.6,401.2 411.2,403.5 411.8,403.5 412.4,401.0 413.0,397.7 413.6,401.3 414.2,405.0 414.8,400.9 415.4,403.8 416.0,405.1 416.6,405.6 417.2,400.0 417.8,410.9 418.4,403.8 419.0,402.0 419.6,404.8 420.2,404.5 420.8,405.0 421.4,401.3 422.0,403.3 422.6,402.2 423.2,405.4 423.8,401.1 424.4,400.8 425.0,400.2 425.6,405.6 426.2,404.3 426.8,401.3 427.4,401.3 428.0,401.6 428.6,400.3 429.2,400.6 429.8,396.2 430.4,407.2 431.0,401.5 431.6,399.8 432.2,414.2 432.8,402.2 433.4,397.8 434.0,403.1 434.6,399.2 435.2,391.7 435.8,400.1 436.4,404.3 437.0,401.1 437.6,401.6 438.2,398.9 438.8,400.0 439.4,394.0 440.0,403.5 440.6,400.2 441.2,399.4 441.8,398.2 442.4,405.6 443.0,401.1 443.6,398.2 444.2,401.0 444.8,403.2 445.4,401.8 446.0,396.6 446.6,399.6 447.2,403.6 447.8,397.7 448.4,397.7 449.0,392.3 449.6,398.5 450.2,400.9 450.8,401.3 451.4,397.7 452.0,401.5 452.6,399.0 453.2,399.3 453.8,398.3 454.4,393.8 455.0,398.2 455.6,401.7 456.2,397.7 456.8,403.0 457.4,401.9 458.0,398.2 458.6,399.0 459.2,397.3 459.8,397.5 460.4,401.7 461.0,402.3 461.6,392.7 462.2,401.1 462.8,403.4 463.4,396.9 464.0,392.7 464.6,403.8 465.2,402.3 465.8,399.4 466.4,403.1 467.0,400.1 467.6,401.4 468.2,404.2 468.8,399.9 469.4,405.1 470.0,402.9 470.6,402.5 471.2,406.0 471.8,404.2 472.4,401.6 473.0,402.4 473.6,403.3 474.2,404.9 474.8,403.4 475.4,405.9 476.0,406.4 476.6,398.4 477.2,405.2 477.8,405.8 478.4,408.5 479.0,401.4 479.6,415.8 480.2,405.2 480.8,403.8 481.4,401.2 482.0,402.6 482.6,402.5 483.2,405.8 483.8,402.4 484.4,401.1 485.0,412.8 485.6,403.3 486.2,402.2 486.8,401.5 487.4,405.9 488.0,405.8 488.6,401.2 489.2,405.5 489.8,404.0 490.4,402.2 491.0,405.9 491.6,401.4 492.2,406.0 492.8,404.6 493.4,411.1 494.0,403.5 494.6,401.9 495.2,402.1 495.8,403.5 496.4,405.2 497.0,401.4 497.6,404.3 498.2,402.2 498.8,403.0 499.4,401.0 500.0,400.8 500.6,402.1 501.2,405.5 501.8,403.7 502.4,402.8 503.0,411.4 503.6,400.4 504.2,400.4 504.8,400.6 505.4,400.8 506.0,413.6 506.6,400.2 507.2,403.0 507.8,405.0 508.4,409.2 509.0,400.1 509.6,395.3 510.2,401.1 510.8,404.4 511.4,400.6 512.0,404.9 512.6,400.1 513.2,400.7 513.8,394.9 514.4,401.9 515.0,399.6 515.6,405.0 516.2,404.7 516.8,397.2 517.4,401.4 518.0,400.8 518.6,403.9 519.2,401.4 519.8,401.0 520.4,400.0 521.0,403.3 521.6,404.7 522.2,403.5 522.8,401.5 523.4,399.0 524.0,403.6 524.6,403.4 525.2,400.1 525.8,400.7 526.4,398.5 527.0,400.2 527.6,404.2 528.2,401.9 528.8,402.9 529.4,403.5 530.0,396.9 530.6,400.7 531.2,397.6 531.8,398.0 532.4,392.4 533.0,393.3 533.6,394.1 534.2,389.4 534.8,392.9 535.4,392.6 536.0,392.0 536.6,392.6 537.2,390.2 537.8,392.6 538.4,390.6 539.0,391.1 539.6,391.4 540.2,392.1 540.8,392.2 541.4,393.4 542.0,394.2 542.6,391.4 543.2,393.0 543.8,393.5 544.4,386.1 545.0,388.5 545.6,392.8 546.2,392.1 546.8,390.5 547.4,391.5 548.0,389.4 548.6,388.3 549.2,389.5 549.8,389.6 550.4,399.4 551.0,386.9 551.6,389.8 552.2,388.0 552.8,390.1 553.4,388.9 554.0,388.6 554.2,431.2" fill="#3dffe3" />
<polygon points="393.8,486.0 393.8,454.6 394.4,456.9 395.0,455.3 395.6,456.7 396.2,459.0 396.8,458.0 397.4,455.6 398.0,456.1 398.6,464.9 399.2,454.9 399.8,458.8 400.4,457.5 401.0,454.0 401.6,458.7 402.2,453.9 402.8,458.7 403.4,457.9 404.0,464.1 404.6,454.2 405.2,453.1 405.8,455.0 406.4,457.1 407.0,452.9 407.6,452.9 408.2,456.5 408.8,455.3 409.4,457.7 410.0,456.6 410.6,452.9 411.2,458.5 411.8,452.9 412.4,463.9 413.0,457.5 413.6,454.5 414.2,456.7 414.8,458.6 415.4,459.8 416.0,458.3 416.6,454.6 417.2,451.5 417.8,459.4 418.4,457.9 419.0,452.6 419.6,458.2 420.2,454.2 420.8,456.9 421.4,457.9 422.0,453.6 422.6,453.3 423.2,454.0 423.8,448.9 424.4,454.1 425.0,449.3 425.6,452.1 426.2,454.6 426.8,453.4 427.4,455.2 428.0,454.1 428.6,460.8 429.2,453.7 429.8,452.6 430.4,454.9 431.0,455.6 431.6,453.3 432.2,454.0 432.8,451.3 433.4,451.6 434.0,454.6 434.6,447.8 435.2,453.4 435.8,454.5 436.4,452.1 437.0,455.1 437.6,452.3 438.2,455.2 438.8,455.1 439.4,453.6 440.0,452.0 440.6,454.4 441.2,462.1 441.8,449.2 442.4,451.5 443.0,452.2 443.6,452.5 444.2,458.3 444.8,452.6 445.4,451.7 446.0,451.4 446.6,453.3 447.2,453.7 447.8,451.3 448.4,450.7 449.0,450.5 449.6,450.2 450.2,453.5 450.8,450.1 451.4,451.3 452.0,453.5 452.6,459.4 453.2,450.8 453.8,452.8 454.4,451.9 455.0,454.2 455.6,453.1 456.2,449.6 456.8,453.9 457.4,451.3 458.0,454.9 458.6,451.7 459.2,455.0 459.8,454.6 460.4,452.2 461.0,450.6 461.6,453.3 462.2,454.5 462.8,455.7 463.4,450.7 464.0,455.8 464.6,453.8 465.2,453.5 465.8,455.5 466.4,449.5 467.0,456.3 467.6,452.1 468.2,452.4 468.8,453.9 469.4,456.0 470.0,457.1 470.6,455.9 471.2,457.0 471.8,452.3 472.4,455.1 473.0,452.9 473.6,455.2 474.2,458.3 474.8,458.5 475.4,454.8 476.0,451.0 476.6,448.8 477.2,458.2 477.8,465.6 478.4,457.1 479.0,450.0 479.6,456.9 480.2,457.4 480.8,457.8 481.4,456.6 482.0,459.0 482.6,453.4 483.2,457.6 483.8,458.1 484.4,463.2 485.0,454.2 485.6,457.4 486.2,462.7 486.8,458.0 487.4,458.1 488.0,454.9 488.6,455.2 489.2,457.6 489.8,457.9 490.4,458.1 491.0,456.4 491.6,456.0 492.2,454.2 492.8,458.3 493.4,458.3 494.0,464.0 494.6,456.6 495.2,462.6 495.8,455.9 496.4,452.9 497.0,456.2 497.6,456.5 498.2,453.3 498.8,453.4 499.4,453.2 500.0,458.1 500.6,457.1 501.2,457.5 501.8,457.6 502.4,449.0 503.0,453.6 503.6,455.9 504.2,454.6 504.8,459.4 505.4,456.1 506.0,454.3 506.6,454.4 507.2,452.6 507.8,454.8 508.4,445.9 509.0,453.7 509.6,452.6 510.2,453.5 510.8,455.7 511.4,455.1 512.0,449.8 512.6,453.6 513.2,461.7 513.8,454.3 514.4,451.5 515.0,453.1 515.6,456.6 516.2,454.7 516.8,451.9 517.4,453.5 518.0,452.8 518.6,455.8 519.2,454.8 519.8,454.4 520.4,458.2 521.0,451.2 521.6,452.2 522.2,446.2 522.8,451.5 523.4,455.5 524.0,455.4 524.6,451.8 525.2,452.3 525.8,453.1 526.4,454.8 527.0,451.1 527.6,453.3 528.2,450.6 528.8,453.8 529.4,455.8 530.0,450.3 530.6,451.4 531.2,455.0 531.8,449.5 532.4,449.2 533.0,438.6 533.6,443.0 534.2,443.5 534.8,443.5 535.4,445.4 536.0,444.3 536.6,440.8 537.2,443.2 537.8,443.7 538.4,445.9 539.0,445.6 539.6,435.4 540.2,445.6 540.8,442.2 541.4,441.4 542.0,442.0 542.6,447.6 543.2,441.7 543.8,442.0 544.4,438.0 545.0,441.4 545.6,443.4 546.2,450.1 546.8,442.8 547.4,445.6 548.0,440.7 548.6,443.5 549.2,441.1 549.8,441.8 550.4,434.9 551.0,441.0 551.6,440.1 552.2,440.2 552.8,444.5 553.4,442.0 554.0,441.6 554.2,486.0" fill="#3dffe3" />
<rect x="393.80" y="467.40" width="160.40" height="1.10" fill="#e6e6e6" />
<rect x="393.80" y="468.50" width="160.40" height="0.60" fill="#5ab8a6" />
<rect x="395.20" y="414.20" width="10.20" height="13.40" fill="#1b7b6f" />
<text x="400.00" y="423.40" font-size="8.8" fill="#9cbcb4" text-anchor="middle">L</text>
<rect x="395.20" y="470.90" width="10.80" height="12.30" fill="#1b7b6f" />
<text x="400.20" y="479.90" font-size="8.8" fill="#9cbcb4" text-anchor="middle">R</text>
<rect x="555.80" y="377.00" width="176.20" height="54.20" fill="#1f9d76" />
<rect x="555.80" y="432.60" width="176.20" height="53.40" fill="#1f9d76" />
<polygon points="555.8,431.2 555.8,388.3 556.4,390.5 557.0,387.8 557.6,395.4 558.2,391.4 558.8,392.6 559.4,389.0 560.0,406.3 560.6,398.2 561.2,395.6 561.8,398.2 562.4,397.6 563.0,399.8 563.6,398.1 564.2,398.1 564.8,400.5 565.4,401.0 566.0,397.2 566.6,399.6 567.2,401.2 567.8,402.4 568.4,393.8 569.0,403.2 569.6,394.2 570.2,398.3 570.8,401.2 571.4,400.5 572.0,401.7 572.6,402.9 573.2,402.9 573.8,405.4 574.4,405.8 575.0,401.1 575.6,402.9 576.2,404.9 576.8,402.7 577.4,403.9 578.0,404.2 578.6,402.1 579.2,402.0 579.8,402.9 580.4,404.2 581.0,404.9 581.6,394.7 582.2,400.8 582.8,401.9 583.4,403.9 584.0,397.5 584.6,409.7 585.2,404.1 585.8,404.1 586.4,401.3 587.0,404.2 587.6,403.3 588.2,403.7 588.8,413.4 589.4,400.3 590.0,402.4 590.6,394.4 591.2,405.5 591.8,404.1 592.4,401.5 593.0,395.3 593.6,400.8 594.2,396.5 594.8,402.3 595.4,400.7 596.0,400.6 596.6,403.9 597.2,400.7 597.8,400.8 598.4,402.4 599.0,401.3 599.6,402.1 600.2,399.3 600.8,404.5 601.4,401.5 602.0,403.4 602.6,402.3 603.2,404.7 603.8,404.8 604.4,401.8 605.0,401.3 605.6,402.8 606.2,412.9 606.8,402.9 607.4,400.6 608.0,402.1 608.6,402.8 609.2,404.1 609.8,404.0 610.4,402.8 611.0,401.7 611.6,401.4 612.2,400.3 612.8,414.3 613.4,402.0 614.0,400.6 614.6,399.9 615.2,400.4 615.8,401.8 616.4,403.6 617.0,398.9 617.6,398.5 618.2,401.0 618.8,404.0 619.4,398.9 620.0,399.2 620.6,400.1 621.2,402.2 621.8,402.7 622.4,402.7 623.0,399.8 623.6,398.8 624.2,398.4 624.8,402.1 625.4,400.6 626.0,399.1 626.6,399.3 627.2,402.1 627.8,397.8 628.4,399.4 629.0,402.9 629.6,400.0 630.2,400.7 630.8,399.6 631.4,401.6 632.0,402.6 632.6,401.4 633.2,397.8 633.8,394.8 634.4,397.4 635.0,398.2 635.6,396.0 636.2,401.0 636.8,397.4 637.4,397.6 638.0,394.4 638.6,400.9 639.2,400.7 639.8,401.4 640.4,413.5 641.0,398.3 641.6,402.4 642.2,391.7 642.8,400.7 643.4,401.2 644.0,401.0 644.6,402.4 645.2,403.1 645.8,400.7 646.4,404.4 647.0,401.3 647.6,400.3 648.2,404.9 648.8,400.2 649.4,405.0 650.0,406.4 650.6,403.1 651.2,401.6 651.8,402.3 652.4,401.9 653.0,403.4 653.6,405.5 654.2,412.7 654.8,405.5 655.4,408.2 656.0,405.9 656.6,401.3 657.2,404.3 657.8,404.8 658.4,414.4 659.0,404.0 659.6,407.4 660.2,405.7 660.8,416.3 661.4,405.6 662.0,404.5 662.6,406.3 663.2,404.3 663.8,401.5 664.4,402.6 665.0,413.8 665.6,412.3 666.2,406.6 666.8,400.9 667.4,401.8 668.0,401.2 668.6,403.0 669.2,409.2 669.8,395.3 670.4,402.4 671.0,401.6 671.6,401.9 672.2,401.1 672.8,405.6 673.4,404.7 674.0,400.4 674.6,405.5 675.2,400.0 675.8,404.2 676.4,394.7 677.0,401.7 677.6,400.6 678.2,400.1 678.8,410.2 679.4,404.6 680.0,404.3 680.6,402.7 681.2,401.7 681.8,399.8 682.4,401.7 683.0,404.1 683.6,404.0 684.2,402.0 684.8,399.2 685.4,399.9 686.0,403.4 686.6,403.1 687.2,390.9 687.8,408.9 688.4,411.2 689.0,404.7 689.6,401.7 690.2,402.3 690.8,401.9 691.4,394.6 692.0,403.4 692.6,403.3 693.2,404.2 693.8,401.2 694.4,399.9 695.0,397.2 695.6,404.2 696.2,412.2 696.8,403.6 697.4,399.7 698.0,399.8 698.6,399.9 699.2,402.7 699.8,397.3 700.4,395.5 701.0,398.5 701.6,402.3 702.2,399.0 702.8,400.9 703.4,398.7 704.0,402.9 704.6,409.7 705.2,400.8 705.8,395.3 706.4,392.0 707.0,389.1 707.6,391.0 708.2,393.4 708.8,393.0 709.4,393.9 710.0,388.4 710.6,385.0 711.2,392.5 711.8,392.3 712.4,389.1 713.0,388.9 713.6,389.9 714.2,391.0 714.8,386.1 715.4,389.5 716.0,394.2 716.6,391.7 717.2,388.9 717.8,392.9 718.4,394.0 719.0,390.0 719.6,391.5 720.2,393.0 720.8,384.4 721.4,389.7 722.0,391.1 722.6,390.3 723.2,392.2 723.8,388.6 724.4,393.4 725.0,388.8 725.6,379.1 726.2,398.0 726.8,389.0 727.4,382.4 728.0,392.9 728.6,396.1 729.2,386.2 729.8,392.6 730.4,391.5 731.0,394.8 731.6,387.3 732.0,431.2" fill="#3dffe3" />
<polygon points="555.8,486.0 555.8,445.7 556.4,443.4 557.0,443.0 557.6,443.3 558.2,444.6 558.8,439.5 559.4,449.4 560.0,444.9 560.6,449.9 561.2,450.8 561.8,444.8 562.4,451.5 563.0,453.2 563.6,451.3 564.2,451.0 564.8,453.6 565.4,449.4 566.0,452.0 566.6,452.9 567.2,453.7 567.8,455.0 568.4,455.0 569.0,455.4 569.6,454.5 570.2,451.7 570.8,456.2 571.4,454.3 572.0,453.2 572.6,452.5 573.2,451.9 573.8,452.3 574.4,453.8 575.0,454.8 575.6,453.3 576.2,452.9 576.8,458.0 577.4,447.8 578.0,453.4 578.6,461.2 579.2,454.9 579.8,454.8 580.4,457.1 581.0,452.1 581.6,450.9 582.2,454.7 582.8,464.9 583.4,454.1 584.0,453.3 584.6,451.5 585.2,452.3 585.8,453.1 586.4,466.4 587.0,456.2 587.6,456.6 588.2,457.1 588.8,452.3 589.4,453.8 590.0,458.1 590.6,454.2 591.2,455.9 591.8,451.7 592.4,454.1 593.0,454.7 593.6,452.9 594.2,453.2 594.8,453.6 595.4,455.9 596.0,455.4 596.6,457.0 597.2,456.4 597.8,454.6 598.4,456.4 599.0,451.6 599.6,462.5 600.2,452.4 600.8,455.1 601.4,455.3 602.0,453.3 602.6,454.5 603.2,452.8 603.8,454.3 604.4,455.3 605.0,449.0 605.6,454.1 606.2,454.2 606.8,453.4 607.4,454.8 608.0,443.7 608.6,455.9 609.2,454.1 609.8,448.2 610.4,464.5 611.0,453.1 611.6,455.9 612.2,456.2 612.8,453.1 613.4,451.0 614.0,451.1 614.6,451.9 615.2,450.5 615.8,453.2 616.4,453.8 617.0,452.9 617.6,449.6 618.2,450.6 618.8,455.7 619.4,450.8 620.0,450.6 620.6,450.5 621.2,454.3 621.8,451.2 622.4,461.8 623.0,455.4 623.6,452.3 624.2,449.2 624.8,463.6 625.4,451.7 626.0,458.0 626.6,451.1 627.2,455.2 627.8,455.4 628.4,450.7 629.0,452.2 629.6,452.7 630.2,448.7 630.8,449.7 631.4,451.5 632.0,451.3 632.6,453.4 633.2,450.3 633.8,452.3 634.4,451.5 635.0,450.0 635.6,451.4 636.2,453.7 636.8,460.5 637.4,454.7 638.0,459.4 638.6,449.6 639.2,451.5 639.8,449.9 640.4,450.1 641.0,451.5 641.6,446.3 642.2,451.5 642.8,463.3 643.4,455.6 644.0,448.1 644.6,451.6 645.2,452.7 645.8,455.3 646.4,454.1 647.0,452.5 647.6,456.7 648.2,457.3 648.8,463.9 649.4,457.7 650.0,457.0 650.6,454.0 651.2,456.3 651.8,456.3 652.4,453.9 653.0,454.8 653.6,459.5 654.2,464.1 654.8,465.4 655.4,456.9 656.0,458.4 656.6,451.6 657.2,459.9 657.8,449.2 658.4,457.3 659.0,457.1 659.6,457.2 660.2,459.3 660.8,468.8 661.4,464.1 662.0,456.4 662.6,454.7 663.2,449.8 663.8,457.0 664.4,458.9 665.0,455.7 665.6,457.9 666.2,450.9 666.8,456.3 667.4,453.3 668.0,455.4 668.6,452.8 669.2,450.8 669.8,456.4 670.4,457.7 671.0,450.6 671.6,458.1 672.2,454.1 672.8,462.7 673.4,453.8 674.0,456.4 674.6,460.9 675.2,456.0 675.8,455.8 676.4,454.8 677.0,453.2 677.6,451.6 678.2,453.8 678.8,460.4 679.4,464.1 680.0,446.2 680.6,443.4 681.2,452.9 681.8,453.0 682.4,452.0 683.0,455.3 683.6,455.7 684.2,452.9 684.8,455.7 685.4,447.9 686.0,453.5 686.6,454.1 687.2,455.2 687.8,466.9 688.4,451.5 689.0,456.8 689.6,451.5 690.2,453.7 690.8,456.6 691.4,455.3 692.0,455.7 692.6,451.8 693.2,447.8 693.8,451.4 694.4,448.1 695.0,464.1 695.6,451.2 696.2,450.9 696.8,451.9 697.4,454.0 698.0,455.6 698.6,456.2 699.2,455.0 699.8,451.6 700.4,450.6 701.0,454.5 701.6,454.3 702.2,455.2 702.8,453.2 703.4,450.7 704.0,455.1 704.6,450.5 705.2,453.2 705.8,447.4 706.4,447.2 707.0,445.7 707.6,442.0 708.2,442.8 708.8,441.4 709.4,445.2 710.0,449.3 710.6,438.1 711.2,445.0 711.8,454.1 712.4,455.6 713.0,444.6 713.6,444.3 714.2,444.5 714.8,442.2 715.4,445.4 716.0,442.5 716.6,441.3 717.2,445.3 717.8,444.6 718.4,445.8 719.0,443.6 719.6,441.5 720.2,445.5 720.8,443.2 721.4,442.6 722.0,441.3 722.6,443.4 723.2,451.3 723.8,440.7 724.4,444.2 725.0,442.7 725.6,445.2 726.2,441.0 726.8,441.3 727.4,450.7 728.0,450.1 728.6,442.5 729.2,441.1 729.8,441.7 730.4,434.3 731.0,443.1 731.6,439.7 732.0,486.0" fill="#3dffe3" />
<rect x="555.80" y="467.40" width="176.20" height="1.10" fill="#e6e6e6" />
<rect x="555.80" y="468.50" width="176.20" height="0.60" fill="#5ab8a6" />
<rect x="557.20" y="414.20" width="10.20" height="13.40" fill="#1b7b6f" />
<text x="562.00" y="423.40" font-size="8.8" fill="#9cbcb4" text-anchor="middle">L</text>
<rect x="557.20" y="470.90" width="10.80" height="12.30" fill="#1b7b6f" />
<text x="562.20" y="479.90" font-size="8.8" fill="#9cbcb4" text-anchor="middle">R</text>
<rect x="313.20" y="377.00" width="1.00" height="109.00" fill="#2a3a30" />
<rect x="314.30" y="400.00" width="0.70" height="64.00" fill="#a04030" />
<rect x="392.40" y="377.00" width="1.20" height="109.00" fill="#2a3a30" />
<rect x="554.40" y="377.00" width="1.20" height="109.00" fill="#4a5a50" />
<rect x="34.80" y="380.00" width="11.60" height="10.20" fill="#e6b90a" />
<text x="40.80" y="388.40" font-size="10.4" fill="#0c0c00" font-style="italic" text-anchor="middle" stroke="#0c0c00" stroke-width="0.25">fx</text>
<rect x="324.90" y="380.00" width="10.80" height="10.20" fill="#e6b90a" />
<text x="330.50" y="388.40" font-size="10.4" fill="#0c0c00" font-style="italic" text-anchor="middle" stroke="#0c0c00" stroke-width="0.25">fx</text>
<rect x="402.70" y="380.00" width="10.80" height="10.20" fill="#e6b90a" />
<text x="408.30" y="388.40" font-size="10.4" fill="#0c0c00" font-style="italic" text-anchor="middle" stroke="#0c0c00" stroke-width="0.25">fx</text>
<rect x="565.20" y="380.00" width="10.80" height="10.20" fill="#e6b90a" />
<text x="570.80" y="388.40" font-size="10.4" fill="#0c0c00" font-style="italic" text-anchor="middle" stroke="#0c0c00" stroke-width="0.25">fx</text>
<rect x="24.40" y="486.80" width="708.00" height="13.20" fill="#151515" />
<rect x="255.90" y="164.00" width="1.10" height="336.00" fill="#2d8ceb" />
<polygon points="255.0,153.0 265.8,153.0 265.8,161.2 263.0,164.0 257.8,164.0 255.0,161.2" fill="#2d95f5" />
<rect x="259.90" y="162.00" width="0.90" height="2.00" fill="#1a3a5a" />
<rect x="10.2" y="116.2" width="28.5" height="55" fill="none" stroke="#ff1a0a" stroke-width="2.7" rx="2.5"/>
<rect x="715.8" y="103.6" width="39.9" height="61.4" fill="none" stroke="#ff1a0a" stroke-width="2.7" rx="2.5"/>
<rect x="708.8" y="2.3" width="100" height="27.9" fill="none" stroke="#ff1a0a" stroke-width="2.7" rx="2.5"/>
</svg>
</body></html>
